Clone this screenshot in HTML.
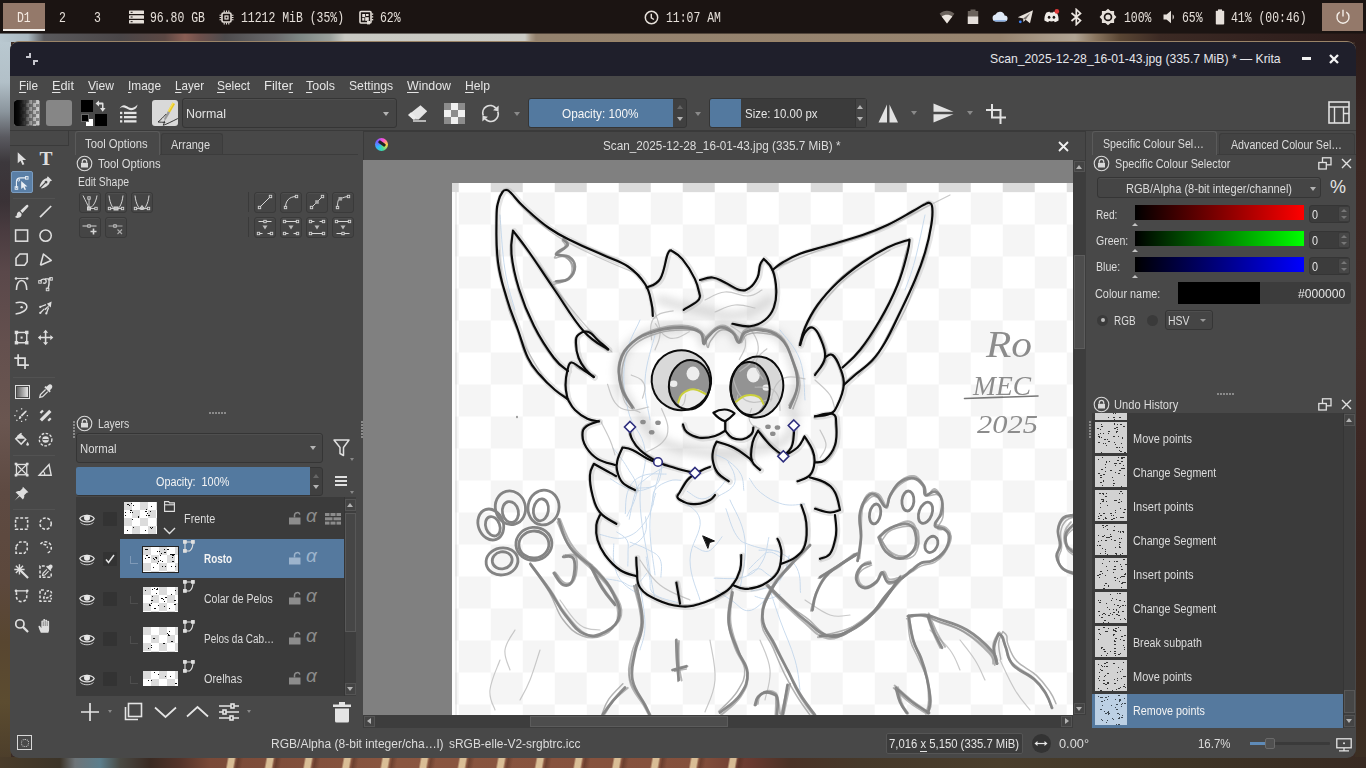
<!DOCTYPE html>
<html lang="en">
<head>
<meta charset="utf-8">
<title>Krita</title>
<style>
*{box-sizing:border-box;margin:0;padding:0}
html,body{width:1366px;height:768px;overflow:hidden}
body{position:relative;background:#3a2a24;font-family:"Liberation Sans",sans-serif;font-size:13px;color:#dedede}
.abs{position:absolute}
#wall{position:absolute;left:0;top:0;width:1366px;height:768px}
/* top bar */
#bar{position:absolute;left:0;top:0;width:1366px;height:33px;background:#1b1412;font-family:"Liberation Mono",monospace;font-size:14.5px;color:#e6e0da}
#bar span{position:absolute;top:9px;line-height:18px;white-space:pre;transform:scaleX(.79);transform-origin:0 50%}
#bar svg{position:absolute}
/* window */
#win{position:absolute;left:10px;top:41px;width:1346px;height:717px;background:#484848;border-radius:9px 9px 9px 9px;overflow:hidden;border-top:1px solid #9a8468}
#title{position:absolute;left:0;top:0;width:1346px;height:34px;background:#1f1f2b}
#title .t{position:absolute;right:74px;top:9px;font-size:13px;color:#e4e4e8;white-space:pre;letter-spacing:-.36px}
#pg{position:absolute;left:-10px;top:-42px;width:1366px;height:768px}
#pg div,#pg svg,#pg span{position:absolute}
.combo{background:#454545;border:1px solid #353535;border-radius:3px;box-shadow:inset 0 1px 0 rgba(255,255,255,.06)}
.tri{width:0;height:0;border-left:3.5px solid transparent;border-right:3.5px solid transparent;border-top:4px solid #b4b4b4}
.triu{width:0;height:0;border-left:3.5px solid transparent;border-right:3.5px solid transparent;border-bottom:4px solid #b4b4b4}
#menu{position:absolute;left:0;top:34px;width:1346px;height:22px;background:#484848}
#menu span{position:absolute;top:3px;font-size:13px;line-height:16px;color:#e2e2e2}
#menu span u{text-decoration:underline;text-underline-offset:2px}
.lbl{position:absolute;white-space:pre;color:#dedede;line-height:16px}
</style>
</head>
<body>
<!-- WALLPAPER -->
<div id="wall">
<div class="abs" style="left:0;top:33px;width:1366px;height:9px;background:linear-gradient(90deg,#b9c8d0 0,#aab8c0 28px,#5a595c 44px,#4a4648 120px,#5c4844 165px,#8a5e54 185px,#6e504c 200px,#4e4c4e 225px,#6a6a6c 275px,#7e8784 300px,#9aa09c 330px,#c9c9c3 345px,#cbcbc5 525px,#a89a88 531px,#94826e 536px,#97846f 1000px,#a59684 1040px,#b0a494 1075px,#8a7660 1095px,#5a4634 1120px,#3c2a24 1160px,#33221f 1260px,#2c1c1a 1366px)"></div>
<div class="abs" style="left:0;top:33px;width:1366px;height:1px;background:rgba(27,20,18,.55)"></div>
<div class="abs" style="left:0;top:42px;width:11px;height:726px;background:linear-gradient(180deg,#b9c8d0 0,#b2c0c8 40px,#8a949c 70px,#5a5a60 95px,#3c383c 120px,#3a3236 160px,#4a3c40 190px,#5a484a 230px,#64504e 300px,#6a5650 380px,#5e4a42 450px,#5c483c 540px,#584630 600px,#5c4c30 660px,#4a3c2a 726px)"></div>
<div class="abs" style="left:1355px;top:42px;width:11px;height:726px;background:linear-gradient(180deg,#2c1c1a 0,#3a2622 120px,#402a26 300px,#382420 500px,#3a2a20 650px,#3c3024 726px)"></div>
<div class="abs" style="left:0;top:757px;width:1366px;height:11px;background:linear-gradient(90deg,#4a3c2a 0,#3c3428 60px,#6e7478 75px,#5c7e8c 100px,#4a4a44 120px,#3a2a22 150px,#54342a 180px,#7a4a38 210px,#8a5640 400px,#84503c 700px,#6a3a30 750px,#4a3226 790px,#46392a 860px,#4a3e2c 1000px,#3e3426 1200px,#382a22 1366px)"></div>
<div class="abs" style="left:205px;top:757px;width:560px;height:11px;background:repeating-linear-gradient(100deg,rgba(230,205,160,.0) 0,rgba(230,205,160,.0) 22px,rgba(232,208,165,.85) 24px,rgba(232,208,165,.85) 29px,rgba(230,205,160,0) 31px,rgba(60,30,20,.35) 33px,rgba(60,30,20,0) 38px)"></div>
</div>

<!-- TOP BAR -->
<div id="bar">
<div class="abs" style="left:3px;top:3px;width:42px;height:28px;background:#94796a;border-bottom:2px solid #f4f0ec"></div>
<span style="left:17px;color:#f6ece4">D1</span>
<span style="left:59px">2</span>
<span style="left:94px">3</span>
<svg style="left:129px;top:10px" width="15" height="14" viewBox="0 0 15 14"><g fill="#e6e0da"><rect x="0" y="0.5" width="15" height="3.6" rx=".6"/><rect x="0" y="5.2" width="15" height="3.6" rx=".6"/><rect x="0" y="9.9" width="15" height="3.6" rx=".6"/></g><g fill="#1b1412"><rect x="1.6" y="1.8" width="2" height="1"/><rect x="1.6" y="6.5" width="2" height="1"/><rect x="1.6" y="11.2" width="2" height="1"/></g></svg>
<span style="left:150px">96.80 GB</span>
<svg style="left:219px;top:10px" width="15" height="15" viewBox="0 0 15 15"><g stroke="#e6e0da" fill="none"><rect x="3" y="3" width="9" height="9" rx="1.2" stroke-width="1.6"/><rect x="6" y="6" width="3" height="3" stroke-width="1.2"/><path d="M5.2 0.5v2M7.5 .5v2M9.8 .5v2M5.2 12.5v2M7.5 12.5v2M9.8 12.5v2M.5 5.2h2M.5 7.5h2M.5 9.8h2M12.5 5.2h2M12.5 7.5h2M12.5 9.8h2" stroke-width="1.1"/></g></svg>
<span style="left:241px">11212 MiB (35%)</span>
<svg style="left:359px;top:10px" width="15" height="15" viewBox="0 0 15 15"><rect x="1" y="1.5" width="11" height="11.5" rx="1" fill="none" stroke="#e6e0da" stroke-width="1.6"/><g fill="#e6e0da"><rect x="3.2" y="4" width="3" height="3.2"/><rect x="7" y="4" width="2.6" height="2"/><rect x="3.2" y="8" width="2.2" height="2.6"/><rect x="6.2" y="7.2" width="3.6" height="3.6"/><rect x="8" y="11" width="3" height="3.4"/><rect x="12.6" y="3.4" width="1.6" height="1.4"/><rect x="12.6" y="6.2" width="1.6" height="1.4"/><rect x="12.6" y="9" width="1.6" height="1.4"/></g></svg>
<span style="left:380px">62%</span>
<svg style="left:644px;top:10px" width="15" height="15" viewBox="0 0 15 15"><circle cx="7.5" cy="7.5" r="6.2" fill="none" stroke="#e6e0da" stroke-width="1.5"/><path d="M7.3 3.8v4l2.6 1.7" fill="none" stroke="#e6e0da" stroke-width="1.4"/></svg>
<span style="left:666px">11:07 AM</span>
<!-- tray -->
<svg style="left:939px;top:10px" width="16" height="14" viewBox="0 0 16 14"><path d="M8 13.5L.6 3.8C4.6-.2 11.4-.2 15.400 3.800Z" fill="#6a625c"/><path d="M8 13.500L2.700 6.600C5.500 4 10.500 4 13.300 6.600Z" fill="#ece6e0"/></svg>
<svg style="left:967px;top:9px" width="12" height="16" viewBox="0 0 12 16"><rect x="3.500" y=".5" width="5" height="2" fill="#6a625c"/><rect x=".8" y="2" width="10.400" height="13" fill="#6a625c"/><rect x=".8" y="7.500" width="10.400" height="7.500" fill="#e4deda"/></svg>
<svg style="left:992px;top:11px" width="16" height="11" viewBox="0 0 16 11"><path d="M4 10.500a3.500 3.500 0 0 1-.5-6.950A4.800 4.800 0 0 1 12.600 4.500 3 3 0 0 1 12.500 10.500Z" fill="#dfe9f6"/><path d="M4 10.500a3.500 3.500 0 0 1-2.800-1.500h13.500a3 3 0 0 1-2.200 1.500Z" fill="#8fb4e6"/></svg>
<svg style="left:1017px;top:9px" width="17" height="16" viewBox="0 0 17 16"><path d="M.8 8.200L16 1.200 13 14.200 8.600 10.800 6.400 13 6.200 9.600Z" fill="#e8e2dc"/><path d="M6.200 9.600L13.500 3.800 8.600 10.800Z" fill="#1b1412" opacity=".55"/><circle cx="3.300" cy="12.800" r="1.400" fill="#3b82f6"/></svg>
<svg style="left:1043px;top:8px" width="17" height="17" viewBox="0 0 17 17"><path d="M3.200 4.800C4.600 4 6 3.700 6.600 3.700l.4.800c1-.1 2-.1 3 0l.4-.8c.6 0 2 .3 3.400 1.100 1.300 2.200 2 4.800 1.800 7.800-1.200.9-2.600 1.500-3.800 1.700l-.8-1.300c-1.600.5-3.400.5-5 0l-.8 1.300C4 14.100 2.600 13.500 1.400 12.600 1.200 9.600 1.900 7 3.200 4.800Z" fill="#f0ece8"/><ellipse cx="6.100" cy="9.300" rx="1.300" ry="1.500" fill="#1b1412"/><ellipse cx="10.900" cy="9.300" rx="1.300" ry="1.500" fill="#1b1412"/><circle cx="13.800" cy="3.400" r="2.300" fill="#e03a3a"/></svg>
<svg style="left:1069px;top:8px" width="15" height="18" viewBox="0 0 15 18"><path d="M2.500 5L11.500 12.600 7.300 16.500V1.500L11.500 5.400 2.500 13" fill="none" stroke="#ece6e0" stroke-width="1.700" stroke-linejoin="miter"/></svg>
<svg style="left:1099px;top:8px" width="18" height="18" viewBox="0 0 18 18"><path d="M9 .8l2.600 2.300h3.500v3.500L17.400 9l-2.300 2.400v3.500h-3.500L9 17.200l-2.600-2.300H2.900v-3.500L.6 9l2.300-2.400V3.100h3.500Z" fill="#e6e0da"/><circle cx="9" cy="9" r="4.300" fill="#1b1412"/><circle cx="9" cy="9" r="2.600" fill="#e6e0da"/></svg>
<span style="left:1124px">100%</span>
<svg style="left:1163px;top:10px" width="13" height="14" viewBox="0 0 13 14"><path d="M.5 4.600h3L8 .8v12.400L3.500 9.400h-3Z" fill="#e6e0da"/><path d="M9.600 4.200a3.600 3.600 0 0 1 0 5.600Z" fill="#e6e0da"/></svg>
<span style="left:1182px">65%</span>
<svg style="left:1215px;top:9px" width="10" height="16" viewBox="0 0 10 16"><rect x="3" y=".4" width="4" height="2" fill="#e6e0da"/><rect x=".8" y="1.800" width="8.400" height="13.700" rx=".8" fill="#e6e0da"/></svg>
<span style="left:1231px">41% (00:46)</span>
<div class="abs" style="left:1322px;top:3px;width:41px;height:28px;background:#94796a"></div>
<svg style="left:1335px;top:9px" width="16" height="16" viewBox="0 0 16 16"><path d="M4.700 3.200a6 6 0 1 0 6.600 0" fill="none" stroke="#f4eee8" stroke-width="1.400"/><path d="M8 .8v6.600" stroke="#f4eee8" stroke-width="1.400"/></svg>
</div>

<!-- KRITA WINDOW -->
<div id="win">
<div id="title"></div>
<div id="menu"></div>
<!--TOOLBAR-->
<div id="pg">
<span class="lbl" style="left:990.0px;top:51.0px;font-size:12.2px;transform:scaleX(1.000);transform-origin:0 50%;color:#e6e6ea;">Scan_2025-12-28_16-01-43.jpg (335.7 MiB) * — Krita</span>
<div style="left:1302px;top:57px;width:9px;height:3px;background:#f2f2f2"></div>
<svg style="left:1328px;top:53px" width="12" height="12" viewBox="0 0 12 12"><path d="M2 2l8 8M10 2l-8 8" stroke="#f4f4f4" stroke-width="2.300"/></svg>
<div style="left:26px;top:56px;width:5px;height:2px;background:#c6c6ce"></div><div style="left:29px;top:53px;width:2px;height:5px;background:#c6c6ce"></div>
<div style="left:33px;top:60px;width:5px;height:2px;background:#c6c6ce"></div><div style="left:33px;top:60px;width:2px;height:5px;background:#c6c6ce"></div>
<div style="left:10px;top:130px;width:1346px;height:1px;background:#3a3a3a"></div>
<!-- gradient -->
<div style="left:14px;top:100px;width:26px;height:26px;border-radius:3px;overflow:hidden;background:#c8c8c8"><div style="left:0;top:0;width:26px;height:26px;background:conic-gradient(#8a8a8a 25%,#d6d6d6 0 50%,#8a8a8a 0 75%,#d6d6d6 0) 1px 0/7px 7px"></div><div style="left:0;top:0;width:26px;height:26px;background:linear-gradient(90deg,#000 0,#0a0a0a 5px,rgba(20,20,20,.85) 10px,rgba(40,40,40,.35) 17px,rgba(60,60,60,0) 26px)"></div></div>
<div style="left:46px;top:100px;width:26px;height:26px;border-radius:3px;background:#868686"></div>
<!-- fg/bg -->
<div style="left:81px;top:100px;width:12px;height:12px;background:#000"></div>
<div style="left:95px;top:114px;width:12px;height:12px;background:#000"></div>
<div style="left:86px;top:119px;width:7px;height:7px;background:#fff"></div>
<div style="left:81px;top:114px;width:8px;height:8px;background:#000;border:1px solid #6a6a6a"></div>
<svg style="left:94px;top:99px" width="14" height="14" viewBox="0 0 14 14"><path d="M1.500 4.500L5 1.500v2h3.500a1 1 0 0 1 1 1V9h2L8.700 12.700 6 9h2V5.500H5v2Z" fill="#e0e0e0"/></svg>
<!-- brush presets -->
<svg style="left:118px;top:102px" width="22" height="22" viewBox="0 0 22 22"><path d="M1.500 6.500C5 1 8 3.500 10.500 5.200 13.500 7 17 5.500 19.500 2.500 19 7.500 14 9.500 10 7.300 7 5.500 4.500 4 1.500 6.500Z" fill="#e4e4e4"/><g fill="#e4e4e4"><rect x="2" y="9.800" width="2.300" height="2.300"/><rect x="6" y="9.800" width="12.500" height="2.300"/><rect x="2" y="14" width="2.300" height="2.300"/><rect x="6" y="14" width="12.500" height="2.300"/><rect x="2" y="18.200" width="2.300" height="2.300"/><rect x="6" y="18.200" width="12.500" height="2.300"/></g></svg>
<!-- brush icon -->
<div style="left:152px;top:100px;width:26px;height:26px;border-radius:3px;background:#d9d9d9"></div>
<svg style="left:152px;top:100px" width="26" height="26" viewBox="0 0 26 26"><path d="M20.500 2.500l2.500 1.500-5 8.500-2.200-1.300Z" fill="#e8c820"/><path d="M20.500 2.500l1.200.7-5 8.600-1-.6Z" fill="#f6e060"/><path d="M15.800 11.200l2.200 1.300-3.800 6.500-1.600 1.800-.3-2.600Z" fill="#9a9a9a"/><path d="M12.600 20.800l-.8 2.200" stroke="#333" stroke-width=".8"/><path d="M14.200 14c-3 3-5.500 6-8.200 8 2.500.3 5 .2 7 .3-1 .8-1.500 2-1.700 3 3-1 8-3.500 14.500-6.800" fill="none" stroke="#222" stroke-width=".9"/></svg>
<!-- blend combo -->
<div class="combo" style="left:182px;top:98px;width:215px;height:30px"></div>
<span class="lbl" style="left:186.0px;top:106.3px;font-size:13px;transform:scaleX(0.955);transform-origin:0 50%;color:#e2e2e2;">Normal</span>
<div class="tri" style="left:383px;top:112px"></div>
<!-- eraser -->
<svg style="left:406px;top:103px" width="23" height="21" viewBox="0 0 23 21"><path d="M14.500 2.200L21.200 8.200 12.700 16.500H7.200L2.200 12Z" fill="#e4e4e4"/><path d="M3.500 11L9.200 16" stroke="#484848" stroke-width="1.400"/><path d="M2.200 12L5 9.300 10.700 14.600 8.700 16.500H7.200Z" fill="#ececec"/><rect x="7" y="17.300" width="13" height="1.400" fill="#e4e4e4"/></svg>
<!-- alpha checker -->
<div style="left:444px;top:103px;width:21px;height:21px;background:conic-gradient(#f0f0f0 25%,#8c8c8c 0 50%,#f0f0f0 0 75%,#8c8c8c 0) 0 0/14px 14px"></div>
<!-- reload -->
<svg style="left:480px;top:103px" width="21" height="21" viewBox="0 0 21 21"><path d="M3.200 12.500A7.400 7.400 0 0 1 15.800 5.200" fill="none" stroke="#dcdcdc" stroke-width="1.800"/><path d="M17.800 8.500A7.400 7.400 0 0 1 5.200 15.800" fill="none" stroke="#dcdcdc" stroke-width="1.800"/><path d="M13 7.200l5.500 1 .2-5.700Z" fill="#dcdcdc"/><path d="M8 13.800l-5.500-1-.2 5.700Z" fill="#dcdcdc"/></svg>
<div class="tri" style="left:514px;top:112px;border-top-color:#8a8a8a"></div>
<!-- opacity slider -->
<div style="left:528px;top:98px;width:159px;height:30px;border:1px solid #353535;border-radius:3px;background:#404040"></div>
<div style="left:529px;top:99px;width:144px;height:28px;background:#53799f;border-radius:2px 0 0 2px"></div>
<span class="lbl" style="left:562.0px;top:106.3px;font-size:13px;transform:scaleX(0.905);transform-origin:0 50%;color:#f6f6f6;">Opacity: 100%</span>
<div class="triu" style="left:676.500px;top:105px;border-bottom-color:#666"></div>
<div class="tri" style="left:676.500px;top:117px"></div>
<div class="tri" style="left:694.500px;top:112px;border-top-color:#8a8a8a"></div>
<!-- size slider -->
<div style="left:709px;top:98px;width:158px;height:30px;border:1px solid #353535;border-radius:3px;background:#3b3b3b"></div>
<div style="left:710px;top:99px;width:31px;height:28px;background:#53799f;border-radius:2px 0 0 2px"></div>
<span class="lbl" style="left:745.0px;top:106.3px;font-size:13px;transform:scaleX(0.880);transform-origin:0 50%;color:#e6e6e6;">Size: 10.00 px</span>
<div style="left:855px;top:99px;width:11px;height:28px;background:#444;border-left:1px solid #353535"></div>
<div class="triu" style="left:857px;top:105px"></div>
<div class="tri" style="left:857px;top:117px"></div>
<!-- mirror h -->
<svg style="left:877px;top:103px" width="23" height="21" viewBox="0 0 23 21"><path d="M10 1.500V19.500H1.500Z" fill="#e2e2e2"/><path d="M12.500 1.500V19.500H21Z" fill="#e2e2e2"/></svg>
<div class="tri" style="left:910.500px;top:111px;border-top-color:#8a8a8a"></div>
<svg style="left:932px;top:102px" width="23" height="22" viewBox="0 0 23 22"><path d="M1.500 1.500L21.500 9.800H1.500Z" fill="#e2e2e2"/><path d="M1.500 12.200H21.500L1.500 20.500Z" fill="#e2e2e2"/></svg>
<div class="tri" style="left:966.500px;top:111px;border-top-color:#8a8a8a"></div>
<!-- wrap/crop -->
<svg style="left:985px;top:103px" width="22" height="22" viewBox="0 0 22 22"><path d="M7 1v13.500h14M1 7h14.500v14" fill="none" stroke="#e2e2e2" stroke-width="2"/></svg>
<!-- workspace chooser -->
<svg style="left:1328px;top:101px" width="22" height="24" viewBox="0 0 22 24"><rect x="1" y="1" width="20" height="21" fill="none" stroke="#e0e0e0" stroke-width="1.600"/><path d="M1 6h20M6.500 6v16M15.500 6v16M15.500 12.500H21" fill="none" stroke="#e0e0e0" stroke-width="1.400"/></svg>
<span class="lbl" style="left:18.5px;top:78.0px;font-size:13px;transform:scaleX(0.907);transform-origin:0 50%;color:#e4e4e4;"><u style="text-underline-offset:2px">F</u>ile</span>
<span class="lbl" style="left:51.5px;top:78.0px;font-size:13px;transform:scaleX(0.982);transform-origin:0 50%;color:#e4e4e4;"><u style="text-underline-offset:2px">E</u>dit</span>
<span class="lbl" style="left:87.5px;top:78.0px;font-size:13px;transform:scaleX(0.930);transform-origin:0 50%;color:#e4e4e4;"><u style="text-underline-offset:2px">V</u>iew</span>
<span class="lbl" style="left:127.5px;top:78.0px;font-size:13px;transform:scaleX(0.913);transform-origin:0 50%;color:#e4e4e4;"><u style="text-underline-offset:2px">I</u>mage</span>
<span class="lbl" style="left:174.5px;top:78.0px;font-size:13px;transform:scaleX(0.892);transform-origin:0 50%;color:#e4e4e4;"><u style="text-underline-offset:2px">L</u>ayer</span>
<span class="lbl" style="left:216.5px;top:78.0px;font-size:13px;transform:scaleX(0.913);transform-origin:0 50%;color:#e4e4e4;"><u style="text-underline-offset:2px">S</u>elect</span>
<span class="lbl" style="left:263.5px;top:78.0px;font-size:13px;transform:scaleX(1.004);transform-origin:0 50%;color:#e4e4e4;">Filte<u style="text-underline-offset:2px">r</u></span>
<span class="lbl" style="left:305.5px;top:78.0px;font-size:13px;transform:scaleX(0.956);transform-origin:0 50%;color:#e4e4e4;"><u style="text-underline-offset:2px">T</u>ools</span>
<span class="lbl" style="left:348.5px;top:78.0px;font-size:13px;transform:scaleX(0.937);transform-origin:0 50%;color:#e4e4e4;">Setti<u style="text-underline-offset:2px">n</u>gs</span>
<span class="lbl" style="left:406.5px;top:78.0px;font-size:13px;transform:scaleX(0.952);transform-origin:0 50%;color:#e4e4e4;"><u style="text-underline-offset:2px">W</u>indow</span>
<span class="lbl" style="left:464.5px;top:78.0px;font-size:13px;transform:scaleX(0.935);transform-origin:0 50%;color:#e4e4e4;"><u style="text-underline-offset:2px">H</u>elp</span>
<!--TOOLBOX-->
<div style="left:10px;top:131px;width:59px;height:15px;border-right:1px solid #3a3a3a;border-bottom:1px solid #3a3a3a"></div>
<div style="left:11px;top:171px;width:22px;height:22px;background:#5a7fa6;border:1px solid #7a9cc0;border-radius:2px"></div>
<div style="left:13px;top:198px;width:42px;height:1px;background:#525252"></div>
<div style="left:13px;top:377px;width:42px;height:1px;background:#525252"></div>
<div style="left:13px;top:455px;width:42px;height:1px;background:#525252"></div>
<div style="left:13px;top:509px;width:42px;height:1px;background:#525252"></div>
<svg style="left:13.4px;top:149.9px" width="17.2" height="17.2" viewBox="0 0 20 20" fill="none" stroke="#dedede" stroke-width="1.7" stroke-linecap="butt"><path d="M5.500 2.500v13l3.300-3 2.200 5 2.200-1-2.200-4.800h4.300Z" fill="#dedede" stroke="none"/></svg>
<span class="lbl" style="left:39.500px;top:147.500px;font-family:'Liberation Serif',serif;font-size:19.500px;line-height:22px;font-weight:bold;color:#dedede">T</span>
<svg style="left:13.4px;top:173.9px" width="17.2" height="17.2" viewBox="0 0 20 20" fill="none" stroke="#dedede" stroke-width="1.7" stroke-linecap="butt"><path d="M4 16.500V9c0-3 2-4.500 5-4.500h6.500" stroke="#e8eef4" stroke-width="1.300"/><rect x="2.500" y="14.800" width="3" height="3" stroke="#e8eef4" stroke-width="1.100"/><rect x="14.500" y="3" width="3" height="3" stroke="#e8eef4" stroke-width="1.100"/><circle cx="6.500" cy="7" r="1.300" stroke="#e8eef4" stroke-width="1"/><path d="M9.500 8v9.500l2.400-2.200 1.700 3.400 1.600-.8-1.700-3.300h3.300Z" fill="#e8eef4" stroke="none"/></svg>
<svg style="left:37.4px;top:173.9px" width="17.2" height="17.2" viewBox="0 0 20 20" fill="none" stroke="#dedede" stroke-width="1.7" stroke-linecap="butt"><path d="M12.500 2.500l5 5-2.500 1.200c-.5 3.500-3.500 6.500-9.500 8.300l-.8-.8 5.300-5.300a1.600 1.600 0 1 0-1-1L3.700 15.200l-.7-.7C4.800 8.500 7.800 5.500 11.300 5Z" fill="#dedede" stroke="none"/></svg>
<svg style="left:13.4px;top:202.9px" width="17.2" height="17.2" viewBox="0 0 20 20" fill="none" stroke="#dedede" stroke-width="1.7" stroke-linecap="butt"><path d="M17.500 2.500c.8.800.5 1.700-.3 2.500L11 11.500 8.500 9 15 2.800c.8-.8 1.700-1.100 2.500-.3Z" fill="#dedede" stroke="none"/><path d="M7.500 10l2.500 2.500c.3 2.500-1 4.300-3.500 4.800-1.700.3-3.300-.2-4.500-1.300 1.800-.2 2.300-1.200 2.500-2.700.2-1.800 1.300-3 3-3.300Z" fill="#dedede" stroke="none"/></svg>
<svg style="left:37.4px;top:202.9px" width="17.2" height="17.2" viewBox="0 0 20 20" fill="none" stroke="#dedede" stroke-width="1.7" stroke-linecap="butt"><path d="M3.500 16.500l13-13" stroke-width="2"/></svg>
<svg style="left:13.4px;top:227.4px" width="17.2" height="17.2" viewBox="0 0 20 20" fill="none" stroke="#dedede" stroke-width="1.7" stroke-linecap="butt"><rect x="3" y="3.500" width="14" height="13" stroke-width="1.800"/></svg>
<svg style="left:37.4px;top:227.4px" width="17.2" height="17.2" viewBox="0 0 20 20" fill="none" stroke="#dedede" stroke-width="1.7" stroke-linecap="butt"><circle cx="10" cy="10" r="6.600" stroke-width="1.800"/></svg>
<svg style="left:13.4px;top:251.4px" width="17.2" height="17.2" viewBox="0 0 20 20" fill="none" stroke="#dedede" stroke-width="1.7" stroke-linecap="butt"><path d="M3.500 8.500L8 3.500h8.500v9l-3 4H3.500Z" stroke-width="1.800"/></svg>
<svg style="left:37.4px;top:251.4px" width="17.2" height="17.2" viewBox="0 0 20 20" fill="none" stroke="#dedede" stroke-width="1.7" stroke-linecap="butt"><path d="M4 16.500l3.500-13 9 7.500-12.500 5.500" stroke-width="1.800" stroke-linejoin="round"/></svg>
<svg style="left:13.4px;top:275.4px" width="17.2" height="17.2" viewBox="0 0 20 20" fill="none" stroke="#dedede" stroke-width="1.7" stroke-linecap="butt"><path d="M4 17.500C4 11 6.500 6.500 10 6.500s6 4.500 6 11" stroke-width="1.800"/><path d="M3.500 4h13" stroke-width="1.200"/><circle cx="3.500" cy="4" r="1.500" fill="#dedede" stroke="none"/><circle cx="16.500" cy="4" r="1.500" fill="#dedede" stroke="none"/></svg>
<svg style="left:37.4px;top:275.4px" width="17.2" height="17.2" viewBox="0 0 20 20" fill="none" stroke="#dedede" stroke-width="1.7" stroke-linecap="butt"><path d="M3.500 7.500C5.500 4 9.500 4 10.500 6.500c1 2.500-1.500 4-3.500 2.500M9 4.500h7.500M13.500 4.500c1.500 4.500.5 8-1 12" stroke-width="1.600"/><rect x="14.800" y="3" width="3" height="3" stroke-width="1.100"/><rect x="10.800" y="15.300" width="3" height="3" stroke-width="1.100"/><rect x="2" y="6.500" width="3" height="3" stroke-width="1.100"/></svg>
<svg style="left:13.4px;top:299.4px" width="17.2" height="17.2" viewBox="0 0 20 20" fill="none" stroke="#dedede" stroke-width="1.7" stroke-linecap="butt"><path d="M3 4.500c5-1.500 12-1 13 3.500 1 5-6 8.500-13 9.500" stroke-width="1.800"/><circle cx="10" cy="9.500" r="1.400" fill="#dedede" stroke="none"/></svg>
<svg style="left:37.4px;top:299.4px" width="17.2" height="17.2" viewBox="0 0 20 20" fill="none" stroke="#dedede" stroke-width="1.7" stroke-linecap="butt"><path d="M17 3l-1 7-2-2-4 5-1.500-1.500 5-4-2-2Z" fill="#dedede" stroke="none"/><path d="M10.500 6.500L4 9M13.500 10L11 16.500M8.500 11.500L4 16" stroke-width="1.500"/><circle cx="3.800" cy="9.200" r="1.300" fill="#dedede" stroke="none"/><circle cx="10.800" cy="16.800" r="1.300" fill="#dedede" stroke="none"/><circle cx="3.800" cy="16.200" r="1.300" fill="#dedede" stroke="none"/></svg>
<svg style="left:13.4px;top:329.4px" width="17.2" height="17.2" viewBox="0 0 20 20" fill="none" stroke="#dedede" stroke-width="1.7" stroke-linecap="butt"><rect x="4" y="4" width="12" height="12" stroke-width="1.700"/><g fill="#dedede" stroke="none"><rect x="2" y="2" width="4" height="4"/><rect x="14" y="2" width="4" height="4"/><rect x="2" y="14" width="4" height="4"/><rect x="14" y="14" width="4" height="4"/><rect x="8.800" y="8.800" width="2.400" height="2.400"/></g></svg>
<svg style="left:37.4px;top:329.4px" width="17.2" height="17.2" viewBox="0 0 20 20" fill="none" stroke="#dedede" stroke-width="1.7" stroke-linecap="butt"><path d="M10 3v14M3 10h14" stroke-width="1.800"/><path d="M10 1l3 3.500H7ZM10 19l3-3.500H7ZM1 10l3.500-3v6ZM19 10l-3.500-3v6Z" fill="#dedede" stroke="none"/></svg>
<svg style="left:13.4px;top:353.4px" width="17.2" height="17.2" viewBox="0 0 20 20" fill="none" stroke="#dedede" stroke-width="1.7" stroke-linecap="butt"><path d="M6 1.500v12.500h12.500M1.500 6h12.500v12.500" stroke-width="2"/></svg>
<div style="left:15px;top:384.500px;width:14.500px;height:14.500px;border:1.500px solid #dedede;background:linear-gradient(90deg,#555 0,#f0f0f0 100%);background-clip:content-box;padding:1px"></div>
<svg style="left:37.4px;top:382.9px" width="17.2" height="17.2" viewBox="0 0 20 20" fill="none" stroke="#dedede" stroke-width="1.7" stroke-linecap="butt"><path d="M13 2.500c1.500-1.500 3.500-1 4.300.2.800 1.200.7 2.800-.5 4l-1.800 1.800 1 1-1.500 1.500-6-6L10 3.500l1 1Z" fill="#dedede" stroke="none"/><path d="M10 7.500l-6 6-.8 3.300 3.300-.8 6-6" stroke-width="1.500"/></svg>
<svg style="left:13.4px;top:407.4px" width="17.2" height="17.2" viewBox="0 0 20 20" fill="none" stroke="#dedede" stroke-width="1.7" stroke-linecap="butt"><path d="M15.500 4c.7.700.4 1.400-.2 2L10.500 11 9 9.500l5-4.800c.6-.6 1-.8 1.500-.7Z" fill="#dedede" stroke="none"/><path d="M8.300 10.200l1.500 1.500c0 1.500-1.200 2.500-3.300 2.400.8-.8.500-1.500.6-2.200.1-.9.600-1.500 1.200-1.700Z" fill="#dedede" stroke="none"/><path d="M10 1.500v2.500M10 16v2.500M1.500 10H4M16 10h2.500M4 4l1.700 1.700M14.300 14.300L16 16M4 16l1.700-1.700" stroke-width="1.500" stroke-dasharray="1.500 1"/></svg>
<svg style="left:37.4px;top:407.4px" width="17.2" height="17.2" viewBox="0 0 20 20" fill="none" stroke="#dedede" stroke-width="1.7" stroke-linecap="butt"><path d="M4.500 15.500l11-11" stroke-width="3.800"/><path d="M4 7l3-3M13 16l3-3" stroke-width="2.600"/></svg>
<svg style="left:13.4px;top:431.4px" width="17.2" height="17.2" viewBox="0 0 20 20" fill="none" stroke="#dedede" stroke-width="1.7" stroke-linecap="butt"><path d="M8.500 2.500L16 10l-6.500 6.500L2 9Z" fill="#dedede" stroke="none"/><path d="M5 6.500l5-4" stroke-width="1.400"/><path d="M17 12.500c1 1.500 1.500 2.500 1.500 3.300a1.500 1.500 0 0 1-3 0c0-.8.500-1.800 1.500-3.300Z" fill="#dedede" stroke="none"/><path d="M4.500 9l5 5 4.500-5Z" fill="#484848" stroke="none"/></svg>
<svg style="left:37.4px;top:431.4px" width="17.2" height="17.2" viewBox="0 0 20 20" fill="none" stroke="#dedede" stroke-width="1.7" stroke-linecap="butt"><circle cx="10" cy="10" r="7.300" stroke-width="1.600" stroke-dasharray="3 1.800"/><circle cx="10" cy="10" r="3.800" fill="#dedede" stroke="none"/><path d="M6.500 10h7" stroke="#484848" stroke-width="1.200"/></svg>
<svg style="left:13.4px;top:461.4px" width="17.2" height="17.2" viewBox="0 0 20 20" fill="none" stroke="#dedede" stroke-width="1.7" stroke-linecap="butt"><rect x="4" y="4" width="12" height="12" stroke-width="1.500"/><path d="M2.500 2.500l15 15M17.500 2.500l-15 15" stroke-width="1.500"/><g fill="#dedede" stroke="none"><rect x="2" y="2" width="3" height="3"/><rect x="15" y="2" width="3" height="3"/><rect x="2" y="15" width="3" height="3"/><rect x="15" y="15" width="3" height="3"/></g></svg>
<svg style="left:37.4px;top:461.4px" width="17.2" height="17.2" viewBox="0 0 20 20" fill="none" stroke="#dedede" stroke-width="1.7" stroke-linecap="butt"><path d="M2.500 16.500h14L14 4Z" stroke-width="1.700" stroke-linejoin="miter"/><path d="M9 16.500a6 6 0 0 0-2-5" stroke-width="1.200"/></svg>
<svg style="left:13.4px;top:485.4px" width="17.2" height="17.2" viewBox="0 0 20 20" fill="none" stroke="#dedede" stroke-width="1.7" stroke-linecap="butt"><path d="M11.500 2l6.500 6.500-2 .5-3 3c.5 2-.2 3.500-1.500 5L7.800 13 2 18l5-5.800L3 8.500c1.500-1.300 3-2 5-1.500l3-3Z" fill="#dedede" stroke="none"/></svg>
<svg style="left:13.4px;top:515.4px" width="17.2" height="17.2" viewBox="0 0 20 20" fill="none" stroke="#dedede" stroke-width="1.7" stroke-linecap="butt"><rect x="3" y="3.500" width="14" height="13" stroke-width="1.800" stroke-dasharray="3.400 2"/></svg>
<svg style="left:37.4px;top:515.4px" width="17.2" height="17.2" viewBox="0 0 20 20" fill="none" stroke="#dedede" stroke-width="1.7" stroke-linecap="butt"><circle cx="10" cy="10" r="6.600" stroke-width="1.800" stroke-dasharray="3.400 2"/></svg>
<svg style="left:13.4px;top:539.4px" width="17.2" height="17.2" viewBox="0 0 20 20" fill="none" stroke="#dedede" stroke-width="1.7" stroke-linecap="butt"><path d="M3.500 8.500L8 3.500h8.500v9l-3 4H3.500Z" stroke-width="1.800" stroke-dasharray="3.400 2"/></svg>
<svg style="left:37.4px;top:539.4px" width="17.2" height="17.2" viewBox="0 0 20 20" fill="none" stroke="#dedede" stroke-width="1.7" stroke-linecap="butt"><path d="M4 6C7 2 14 2.500 16 7c2 4.500-1 9-5 9.500M7.500 6.500c2.500-.5 5 1 4.500 4" stroke-width="1.800" stroke-dasharray="3.400 2"/></svg>
<svg style="left:13.4px;top:563.4px" width="17.2" height="17.2" viewBox="0 0 20 20" fill="none" stroke="#dedede" stroke-width="1.7" stroke-linecap="butt"><path d="M7.500 1.500v12M1.500 7.500h12M3.300 3.300l8.400 8.400M11.700 3.300L3.300 11.700" stroke-width="1.600"/><path d="M9 9l8.500 8.500" stroke-width="2.600"/></svg>
<svg style="left:37.4px;top:563.4px" width="17.2" height="17.2" viewBox="0 0 20 20" fill="none" stroke="#dedede" stroke-width="1.7" stroke-linecap="butt"><path d="M9 3.500H3.500v13h13V11" stroke-width="1.800" stroke-dasharray="3.400 2"/><path d="M14 2.500c1.300-1.300 3-.9 3.700.1.700 1 .6 2.400-.4 3.400l-1.300 1.300.8.800-1.200 1.200-5-5L11.800 3l.8.800Z" fill="#dedede" stroke="none"/><path d="M11.500 7.500l-4.500 4.500-.6 2.600 2.600-.6 4.500-4.500" stroke-width="1.300"/></svg>
<svg style="left:13.4px;top:587.4px" width="17.2" height="17.2" viewBox="0 0 20 20" fill="none" stroke="#dedede" stroke-width="1.7" stroke-linecap="butt"><path d="M4 6v5c0 3.500 2.500 6 6 6s6-2.500 6-6V6" stroke-width="1.800" stroke-dasharray="3.400 2"/><path d="M3 4.500h14" stroke-width="1.300"/><circle cx="3.500" cy="4.500" r="1.600" fill="#dedede" stroke="none"/><circle cx="16.500" cy="4.500" r="1.600" fill="#dedede" stroke="none"/></svg>
<svg style="left:37.4px;top:587.4px" width="17.2" height="17.2" viewBox="0 0 20 20" fill="none" stroke="#dedede" stroke-width="1.7" stroke-linecap="butt"><path d="M8 3.500H3.500v13h13v-4" stroke-width="1.800" stroke-dasharray="3.400 2"/><path d="M7.500 13.500L10 6.500c2-3.500 7-2.500 7 1s-4 5-9.500 6" stroke-width="1.700" stroke-dasharray="3 1.600"/></svg>
<svg style="left:13.4px;top:617.4px" width="17.2" height="17.2" viewBox="0 0 20 20" fill="none" stroke="#dedede" stroke-width="1.7" stroke-linecap="butt"><circle cx="8" cy="8" r="4.800" stroke-width="2"/><path d="M11.500 11.500l6 6" stroke-width="2.600"/></svg>
<svg style="left:37.9px;top:617.4px" width="17.2" height="17.2" viewBox="0 0 20 20" fill="none" stroke="#dedede" stroke-width="1.7" stroke-linecap="butt"><g transform="translate(-2.2 0) scale(1.22 1.05)"><path d="M4.500 17.500c-1-2.500-1.700-4.500-2.200-6.500-.3-1.200 1.200-1.700 1.700-.6L5 12.500V4.800c0-1.300 1.800-1.300 1.800 0V3.300c0-1.300 1.900-1.300 1.900 0v.6c0-1.300 1.900-1.300 1.900 0v1.200c0-1.200 1.800-1.200 1.800 0V13c0 2-.3 3.200-.8 4.500Z" fill="#dedede" stroke="none"/><path d="M6.800 5v5M8.700 4v6M10.600 5v5" stroke="#484848" stroke-width=".6"/></g></svg>
<!--LEFTDOCK-->
<div style="left:75px;top:131px;width:85px;height:24px;border:1px solid #5a5a5a;border-bottom:none;border-radius:3px 3px 0 0;background:#484848"></div>
<div style="left:161px;top:133px;width:62px;height:21px;border:1px solid #3c3c3c;border-bottom:none;border-radius:3px 3px 0 0;background:#434343"></div>
<div style="left:160px;top:154px;width:198px;height:1px;background:#3c3c3c"></div>
<span class="lbl" style="left:85.3px;top:135.5px;font-size:12.5px;transform:scaleX(0.901);transform-origin:0 50%;color:#dcdcdc;">Tool Options</span><span class="lbl" style="left:171.2px;top:136.5px;font-size:12.5px;transform:scaleX(0.879);transform-origin:0 50%;color:#dcdcdc;">Arrange</span><svg style="left:75.8px;top:154.5px" width="17" height="17" viewBox="0 0 17 17"><circle cx="8.500" cy="8.500" r="7.300" fill="none" stroke="#d8d8d8" stroke-width="1.100"/><rect x="5" y="7.800" width="7" height="4.700" fill="#d8d8d8"/><path d="M6.300 7.800V6.600a2.200 2.200 0 0 1 4.400 0V7.800" fill="none" stroke="#d8d8d8" stroke-width="1.200"/></svg>
<span class="lbl" style="left:97.5px;top:155.5px;font-size:12.5px;transform:scaleX(0.900);transform-origin:0 50%;color:#dcdcdc;">Tool Options</span><span class="lbl" style="left:77.8px;top:174.0px;font-size:12.5px;transform:scaleX(0.834);transform-origin:0 50%;color:#dcdcdc;">Edit Shape</span><div style="left:79px;top:192px;width:22px;height:21px;border:1px solid #3a3a3a;border-radius:3px;background:#454545;box-shadow:inset 0 1px 0 rgba(255,255,255,.05)"></div><svg style="left:79px;top:192px" width="22" height="21" viewBox="0 0 22 21" fill="none" stroke="#d6d6d6" stroke-width="1"><path d="M4 3.500C6.500 9 9 13 10 16.500M18 3.500C17 10 14 15 10 16.500"/><path d="M10 5.500v11h7" stroke-width=".9"/><rect x="8.8" y="4.8" width="2.400" height="2.400" fill="#484848" stroke-width=".9"/><rect x="15.8" y="15.3" width="2.400" height="2.400" fill="#484848" stroke-width=".9"/><rect x="8.500" y="15" width="3" height="3" fill="#bbb"/></svg>
<div style="left:105px;top:192px;width:22px;height:21px;border:1px solid #3a3a3a;border-radius:3px;background:#454545;box-shadow:inset 0 1px 0 rgba(255,255,255,.05)"></div><svg style="left:105px;top:192px" width="22" height="21" viewBox="0 0 22 21" fill="none" stroke="#d6d6d6" stroke-width="1"><path d="M4 3.500C5 13 8.500 17.500 11 17.500S17 13 18 3.500"/><path d="M4.500 16.500h13" stroke-width=".9"/><rect x="3.3" y="15.3" width="2.400" height="2.400" fill="#484848" stroke-width=".9"/><rect x="16.3" y="15.3" width="2.400" height="2.400" fill="#484848" stroke-width=".9"/><rect x="9" y="15" width="4" height="3" fill="#bbb"/></svg>
<div style="left:131px;top:192px;width:22px;height:21px;border:1px solid #3a3a3a;border-radius:3px;background:#454545;box-shadow:inset 0 1px 0 rgba(255,255,255,.05)"></div><svg style="left:131px;top:192px" width="22" height="21" viewBox="0 0 22 21" fill="none" stroke="#d6d6d6" stroke-width="1"><path d="M4 3.500C5 13 8.500 17.500 11 17.500S17 13 18 3.500"/><path d="M4.500 16.500h13" stroke-width=".9"/><rect x="3.3" y="15.3" width="2.400" height="2.400" fill="#484848" stroke-width=".9"/><rect x="16.3" y="15.3" width="2.400" height="2.400" fill="#484848" stroke-width=".9"/><path d="M11 13.500l2.500 3.500h-5Z" fill="#bbb"/></svg>
<div style="left:79px;top:217px;width:22px;height:21px;border:1px solid #3a3a3a;border-radius:3px;background:#454545;box-shadow:inset 0 1px 0 rgba(255,255,255,.05)"></div><svg style="left:79px;top:217px" width="22" height="21" viewBox="0 0 22 21" fill="none" stroke="#d6d6d6" stroke-width="1"><path d="M3.500 9h14" stroke-width="1.100"/><rect x="8.8" y="7.8" width="2.400" height="2.400" fill="#484848" stroke-width=".9"/><path d="M14.500 11.500v6M11.500 14.500h6" stroke-width="1.600"/></svg>
<div style="left:105px;top:217px;width:22px;height:21px;border:1px solid #3a3a3a;border-radius:3px;background:#454545;box-shadow:inset 0 1px 0 rgba(255,255,255,.05)"></div><svg style="left:105px;top:217px" width="22" height="21" viewBox="0 0 22 21" fill="none" stroke="#d6d6d6" stroke-width="1"><path d="M3.500 9h14" stroke-width="1.100" stroke="#aaa"/><rect x="8.8" y="7.8" width="2.400" height="2.400" fill="#484848" stroke-width=".9"/><path d="M12.500 12.500l4.500 4.500M17 12.500l-4.500 4.500" stroke-width="1.100" stroke="#aaa"/></svg>
<div style="left:248px;top:192px;width:1px;height:20px;background:#3a3a3a"></div><div style="left:248px;top:217px;width:1px;height:20px;background:#3a3a3a"></div>
<div style="left:254px;top:192px;width:22px;height:21px;border:1px solid #3a3a3a;border-radius:3px;background:#454545;box-shadow:inset 0 1px 0 rgba(255,255,255,.05)"></div><svg style="left:254px;top:192px" width="22" height="21" viewBox="0 0 22 21" fill="none" stroke="#d6d6d6" stroke-width="1"><path d="M5.500 15.500l11-11"/><rect x="4.3" y="14.3" width="2.400" height="2.400" fill="#484848" stroke-width=".9"/><rect x="15.3" y="3.3" width="2.400" height="2.400" fill="#484848" stroke-width=".9"/></svg>
<div style="left:280px;top:192px;width:22px;height:21px;border:1px solid #3a3a3a;border-radius:3px;background:#454545;box-shadow:inset 0 1px 0 rgba(255,255,255,.05)"></div><svg style="left:280px;top:192px" width="22" height="21" viewBox="0 0 22 21" fill="none" stroke="#d6d6d6" stroke-width="1"><path d="M5.500 15.500C5.500 9 9 4.500 16.500 4.500"/><rect x="4.3" y="14.3" width="2.400" height="2.400" fill="#484848" stroke-width=".9"/><rect x="15.3" y="3.3" width="2.400" height="2.400" fill="#484848" stroke-width=".9"/></svg>
<div style="left:306px;top:192px;width:22px;height:21px;border:1px solid #3a3a3a;border-radius:3px;background:#454545;box-shadow:inset 0 1px 0 rgba(255,255,255,.05)"></div><svg style="left:306px;top:192px" width="22" height="21" viewBox="0 0 22 21" fill="none" stroke="#d6d6d6" stroke-width="1"><path d="M5.500 15.500l11-11"/><rect x="4.3" y="14.3" width="2.400" height="2.400" fill="#484848" stroke-width=".9"/><rect x="15.3" y="3.3" width="2.400" height="2.400" fill="#484848" stroke-width=".9"/><rect x="9.200" y="8.200" width="3.600" height="3.600" fill="#aaa" stroke="none"/></svg>
<div style="left:332px;top:192px;width:22px;height:21px;border:1px solid #3a3a3a;border-radius:3px;background:#454545;box-shadow:inset 0 1px 0 rgba(255,255,255,.05)"></div><svg style="left:332px;top:192px" width="22" height="21" viewBox="0 0 22 21" fill="none" stroke="#d6d6d6" stroke-width="1"><path d="M5.500 15.500C5.500 10 6 7 8.500 6.500 11 6 13 4.500 16.500 4.500"/><rect x="4.3" y="14.3" width="2.400" height="2.400" fill="#484848" stroke-width=".9"/><rect x="15.3" y="3.3" width="2.400" height="2.400" fill="#484848" stroke-width=".9"/><rect x="6.500" y="5" width="3.600" height="3.600" fill="#aaa" stroke="none"/></svg>
<div style="left:254px;top:217px;width:22px;height:21px;border:1px solid #3a3a3a;border-radius:3px;background:#454545;box-shadow:inset 0 1px 0 rgba(255,255,255,.05)"></div><svg style="left:254px;top:217px" width="22" height="21" viewBox="0 0 22 21" fill="none" stroke="#d6d6d6" stroke-width="1"><path d="M4.500 4.500h13M4.500 16.500h4M13.500 16.500h4"/><rect x="3.3" y="15.3" width="2.400" height="2.400" fill="#484848" stroke-width=".9"/><rect x="16.3" y="15.3" width="2.400" height="2.400" fill="#484848" stroke-width=".9"/><rect x="9.8" y="3.3" width="2.400" height="2.400" fill="#484848" stroke-width=".9"/><path d="M8.500 8.500h5l-2.500 4Z" fill="#bbb" stroke="none"/></svg>
<div style="left:280px;top:217px;width:22px;height:21px;border:1px solid #3a3a3a;border-radius:3px;background:#454545;box-shadow:inset 0 1px 0 rgba(255,255,255,.05)"></div><svg style="left:280px;top:217px" width="22" height="21" viewBox="0 0 22 21" fill="none" stroke="#d6d6d6" stroke-width="1"><path d="M4.500 4.500h13M4.500 16.500h4M13.500 16.500h4"/><rect x="3.3" y="3.3" width="2.400" height="2.400" fill="#484848" stroke-width=".9"/><rect x="16.3" y="3.3" width="2.400" height="2.400" fill="#484848" stroke-width=".9"/><rect x="3.3" y="15.3" width="2.400" height="2.400" fill="#484848" stroke-width=".9"/><rect x="16.3" y="15.3" width="2.400" height="2.400" fill="#484848" stroke-width=".9"/><path d="M8.500 8.500h5l-2.500 4Z" fill="#bbb" stroke="none"/></svg>
<div style="left:306px;top:217px;width:22px;height:21px;border:1px solid #3a3a3a;border-radius:3px;background:#454545;box-shadow:inset 0 1px 0 rgba(255,255,255,.05)"></div><svg style="left:306px;top:217px" width="22" height="21" viewBox="0 0 22 21" fill="none" stroke="#d6d6d6" stroke-width="1"><path d="M4.500 4.500h4M13.500 4.500h4M4.500 16.500h13"/><rect x="3.3" y="3.3" width="2.400" height="2.400" fill="#484848" stroke-width=".9"/><rect x="16.3" y="3.3" width="2.400" height="2.400" fill="#484848" stroke-width=".9"/><rect x="3.3" y="15.3" width="2.400" height="2.400" fill="#484848" stroke-width=".9"/><rect x="16.3" y="15.3" width="2.400" height="2.400" fill="#484848" stroke-width=".9"/><path d="M8.500 8.500h5l-2.500 4Z" fill="#bbb" stroke="none"/></svg>
<div style="left:332px;top:217px;width:22px;height:21px;border:1px solid #3a3a3a;border-radius:3px;background:#454545;box-shadow:inset 0 1px 0 rgba(255,255,255,.05)"></div><svg style="left:332px;top:217px" width="22" height="21" viewBox="0 0 22 21" fill="none" stroke="#d6d6d6" stroke-width="1"><path d="M4.500 4.500h13M4.500 16.500h13"/><rect x="3.3" y="3.3" width="2.400" height="2.400" fill="#484848" stroke-width=".9"/><rect x="16.3" y="3.3" width="2.400" height="2.400" fill="#484848" stroke-width=".9"/><rect x="9.8" y="15.3" width="2.400" height="2.400" fill="#484848" stroke-width=".9"/><path d="M8.500 8.500h5l-2.500 4Z" fill="#bbb" stroke="none"/></svg>
<div style="left:209px;top:412px;width:17px;height:2px;background:repeating-linear-gradient(90deg,#8a8a8a 0,#8a8a8a 2px,transparent 2px,transparent 3px)"></div>
<div style="left:72.500px;top:421px;width:2px;height:17px;background:repeating-linear-gradient(180deg,#8a8a8a 0,#8a8a8a 2px,transparent 2px,transparent 3px)"></div>
<div style="left:360.500px;top:421px;width:2px;height:17px;background:repeating-linear-gradient(180deg,#8a8a8a 0,#8a8a8a 2px,transparent 2px,transparent 3px)"></div>
<svg style="left:75.8px;top:414.5px" width="17" height="17" viewBox="0 0 17 17"><circle cx="8.500" cy="8.500" r="7.300" fill="none" stroke="#d8d8d8" stroke-width="1.100"/><rect x="5" y="7.800" width="7" height="4.700" fill="#d8d8d8"/><path d="M6.300 7.800V6.600a2.200 2.200 0 0 1 4.400 0V7.800" fill="none" stroke="#d8d8d8" stroke-width="1.200"/></svg>
<span class="lbl" style="left:97.5px;top:415.5px;font-size:12.5px;transform:scaleX(0.834);transform-origin:0 50%;color:#dcdcdc;">Layers</span><div class="combo" style="left:76px;top:433px;width:247px;height:30px"></div>
<span class="lbl" style="left:79.8px;top:440.5px;font-size:12.5px;transform:scaleX(0.906);transform-origin:0 50%;color:#dcdcdc;">Normal</span><div class="tri" style="left:309.500px;top:446px"></div>
<svg style="left:332px;top:438px" width="20" height="20" viewBox="0 0 20 20"><path d="M2 2h15l-5.500 7.500V17.500l-3.500-2V9.500Z" fill="none" stroke="#e0e0e0" stroke-width="1.500" stroke-linejoin="round"/></svg>
<div class="tri" style="left:349.500px;top:458px;border-left-width:2.500px;border-right-width:2.500px;border-top-width:3px;border-top-color:#8a8a8a"></div>
<div style="left:76px;top:467px;width:247px;height:29px;border:1px solid #353535;border-radius:3px;background:#404040"></div>
<div style="left:76px;top:467px;width:234px;height:28px;background:#53799f;border-radius:2px 0 0 2px"></div>
<span class="lbl" style="left:155.5px;top:473.5px;font-size:12.5px;transform:scaleX(0.864);transform-origin:0 50%;color:#f4f4f4;">Opacity:  100%</span><div class="triu" style="left:313px;top:474px;border-bottom-color:#666"></div><div class="tri" style="left:313px;top:485px"></div>
<div style="left:334.500px;top:476px;width:12.500px;height:2px;background:#e0e0e0"></div><div style="left:334.500px;top:480px;width:12.500px;height:2px;background:#e0e0e0"></div><div style="left:334.500px;top:484px;width:12.500px;height:2px;background:#e0e0e0"></div>
<div class="tri" style="left:349.500px;top:491px;border-left-width:2.500px;border-right-width:2.500px;border-top-width:3px;border-top-color:#8a8a8a"></div>
<div style="left:76px;top:497px;width:280px;height:199px;background:#3b3b3b"></div>
<div style="left:120px;top:539px;width:223.500px;height:39px;background:#55799e"></div>
<svg style="left:79px;top:511.5px" width="16" height="14" viewBox="0 0 16 14"><path d="M.8 6.500C3 2.200 13 2.200 15.200 6.500 13 11 3 11 .8 6.500Z" fill="#3b3b3b" stroke="#e0e0e0" stroke-width="1.300"/><circle cx="8" cy="5.800" r="3" fill="#e6e6e6"/><path d="M1.500 10.500c3 3 10 3 13 0" fill="none" stroke="#c8c8c8" stroke-width="1"/></svg>
<div style="left:102.500px;top:511.500px;width:14px;height:14px;background:#333;border-radius:1px"></div>
<div style="left:124px;top:502px;width:33px;height:32px;background:conic-gradient(#fff 25%,#dcdcdc 0 50%,#fff 0 75%,#dcdcdc 0) 0 0/16px 16px"></div>
<svg style="left:124px;top:502px" width="33" height="32" fill="#111"><rect x="8" y="10" width="1" height="1"/><rect x="24" y="13" width="2" height="1"/><rect x="5" y="3" width="1" height="1"/><rect x="1" y="13" width="1" height="1"/><rect x="26" y="25" width="1" height="1"/><rect x="8" y="17" width="1" height="1"/><rect x="9" y="25" width="1" height="1"/><rect x="27" y="4" width="1" height="1"/><rect x="7" y="1" width="1" height="1"/><rect x="26" y="9" width="1" height="1"/><rect x="6" y="10" width="1" height="1"/><rect x="21" y="28" width="1" height="1"/><rect x="3" y="28" width="1" height="1"/><rect x="22" y="13" width="1" height="1"/><rect x="6" y="8" width="2" height="1"/><rect x="9" y="3" width="1" height="1"/><rect x="1" y="10" width="1" height="1"/><rect x="28" y="25" width="1" height="1"/><rect x="14" y="14" width="1" height="1"/><rect x="14" y="15" width="1" height="1"/><rect x="8" y="10" width="1" height="1"/><rect x="27" y="26" width="1" height="1"/><rect x="3" y="2" width="2" height="1"/><rect x="21" y="9" width="2" height="1"/><rect x="23" y="11" width="1" height="1"/><rect x="22" y="7" width="1" height="1"/></svg>
<svg style="left:163.500px;top:500.500px" width="11" height="11" viewBox="0 0 11 11" fill="none" stroke="#e0e0e0" stroke-width="1.100"><path d="M.6 10.400V.6h4l1 1.300h4.800v8.500Z"/><path d="M.6 3.800h9.800"/></svg>
<svg style="left:163px;top:527px" width="13" height="8" viewBox="0 0 13 8"><path d="M1 1l5.500 5.500L12 1" fill="none" stroke="#e0e0e0" stroke-width="1.400"/></svg>
<span class="lbl" style="left:183.7px;top:511.0px;font-size:12.5px;transform:scaleX(0.869);transform-origin:0 50%;color:#dcdcdc;">Frente</span><svg style="left:288px;top:510.5px" width="14" height="14" viewBox="0 0 14 14"><rect x="1" y="6.500" width="11.500" height="7" fill="#8c8c8c"/><path d="M6.500 6.500V4.200a2.800 2.800 0 0 1 5.400-.8" fill="none" stroke="#8c8c8c" stroke-width="1.500"/></svg><span class="lbl" style="left:306px;top:506px;font-size:19px;line-height:20px;font-style:italic;color:#8c8c8c">α</span>
<svg style="left:324.500px;top:512.500px" width="16" height="12" viewBox="0 0 16 12" fill="#8c8c8c"><rect x="0" y="0" width="4.500" height="3"/><rect x="5.500" y="0" width="5" height="3"/><rect x="11.500" y="0" width="4.500" height="3"/><rect x="0" y="4.300" width="7.500" height="3"/><rect x="8.500" y="4.300" width="7.500" height="3"/><rect x="0" y="8.600" width="4.500" height="3"/><rect x="5.500" y="8.600" width="5" height="3"/><rect x="11.500" y="8.600" width="4.500" height="3"/></svg>
<svg style="left:79px;top:551.5px" width="16" height="14" viewBox="0 0 16 14"><path d="M.8 6.500C3 2.200 13 2.200 15.200 6.500 13 11 3 11 .8 6.500Z" fill="#3b3b3b" stroke="#e0e0e0" stroke-width="1.300"/><circle cx="8" cy="5.800" r="3" fill="#e6e6e6"/><path d="M1.500 10.500c3 3 10 3 13 0" fill="none" stroke="#c8c8c8" stroke-width="1"/></svg>
<div style="left:102.500px;top:551.5px;width:14px;height:14px;background:#333;border-radius:1px"></div>
<svg style="left:104.500px;top:553.5px" width="10" height="10" viewBox="0 0 10 10"><path d="M1 5.500l2.500 3L9 1" fill="none" stroke="#e6e6e6" stroke-width="1.500"/></svg>
<div style="left:129.500px;top:555.5px;width:8px;height:8px;border-left:1px solid #7f9ab8;border-bottom:1px solid #7f9ab8"></div>
<div style="left:143px;top:546.5px;width:35px;height:25px;background:conic-gradient(#fff 25%,#dcdcdc 0 50%,#fff 0 75%,#dcdcdc 0) 0 0/16px 16px;outline:1px solid #222;"></div>
<svg style="left:143px;top:546.5px" width="35" height="25" fill="#111"><rect x="27" y="7" width="2" height="1"/><rect x="18" y="6" width="1" height="1"/><rect x="28" y="19" width="1" height="1"/><rect x="13" y="11" width="1" height="1"/><rect x="4" y="8" width="1" height="1"/><rect x="16" y="4" width="1" height="1"/><rect x="12" y="10" width="2" height="1"/><rect x="2" y="2" width="1" height="1"/><rect x="6" y="10" width="1" height="1"/><rect x="2" y="11" width="1" height="1"/><rect x="21" y="5" width="2" height="1"/><rect x="5" y="10" width="1" height="1"/><rect x="29" y="10" width="1" height="1"/><rect x="17" y="13" width="1" height="1"/><rect x="22" y="19" width="1" height="1"/><rect x="24" y="2" width="2" height="1"/><rect x="11" y="12" width="1" height="1"/><rect x="19" y="19" width="1" height="1"/><rect x="29" y="7" width="2" height="1"/><rect x="14" y="4" width="1" height="1"/><rect x="4" y="2" width="1" height="1"/><rect x="10" y="20" width="1" height="1"/><rect x="32" y="19" width="1" height="1"/><rect x="21" y="2" width="1" height="1"/><rect x="19" y="14" width="1" height="1"/><rect x="31" y="7" width="1" height="1"/><rect x="29" y="14" width="2" height="1"/><rect x="3" y="8" width="2" height="1"/><rect x="29" y="8" width="2" height="1"/><rect x="14" y="16" width="1" height="1"/><rect x="3" y="2" width="1" height="1"/><rect x="17" y="8" width="1" height="1"/><rect x="15" y="14" width="1" height="1"/><rect x="10" y="11" width="1" height="1"/></svg>
<svg style="left:183px;top:539.5px" width="12" height="13" viewBox="0 0 12 13" fill="none" stroke="#e0e0e0" stroke-width="1.100"><path d="M2 2v9h4.500C9 9.500 10 6 10 2Z"/><rect x=".6" y=".6" width="2.600" height="2.600" fill="#e0e0e0"/><rect x="8.600" y=".6" width="2.600" height="2.600" fill="#e0e0e0"/><rect x=".6" y="9.600" width="2.600" height="2.600" fill="#e0e0e0"/></svg>
<span class="lbl" style="left:203.9px;top:551.0px;font-size:12.5px;transform:scaleX(0.794);transform-origin:0 50%;color:#f4f4f4;font-weight:bold;">Rosto</span><svg style="left:288px;top:550.5px" width="14" height="14" viewBox="0 0 14 14"><rect x="1" y="6.500" width="11.500" height="7" fill="#9db4cc"/><path d="M6.500 6.500V4.200a2.800 2.800 0 0 1 5.400-.8" fill="none" stroke="#9db4cc" stroke-width="1.500"/></svg><span class="lbl" style="left:306px;top:546px;font-size:19px;line-height:20px;font-style:italic;color:#9db4cc">α</span>
<svg style="left:79px;top:591.5px" width="16" height="14" viewBox="0 0 16 14"><path d="M.8 6.500C3 2.200 13 2.200 15.200 6.500 13 11 3 11 .8 6.500Z" fill="#3b3b3b" stroke="#e0e0e0" stroke-width="1.300"/><circle cx="8" cy="5.800" r="3" fill="#e6e6e6"/><path d="M1.500 10.500c3 3 10 3 13 0" fill="none" stroke="#c8c8c8" stroke-width="1"/></svg>
<div style="left:102.500px;top:591.5px;width:14px;height:14px;background:#333;border-radius:1px"></div>
<div style="left:129.500px;top:595.5px;width:8px;height:8px;border-left:1px solid #4e4e4e;border-bottom:1px solid #4e4e4e"></div>
<div style="left:143px;top:586.5px;width:35px;height:25px;background:conic-gradient(#fff 25%,#dcdcdc 0 50%,#fff 0 75%,#dcdcdc 0) 0 0/16px 16px;"></div>
<svg style="left:143px;top:586.5px" width="35" height="25" fill="#111"><rect x="21" y="19" width="1" height="1"/><rect x="26" y="21" width="1" height="1"/><rect x="32" y="13" width="1" height="1"/><rect x="28" y="7" width="1" height="1"/><rect x="22" y="10" width="2" height="1"/><rect x="21" y="14" width="1" height="1"/><rect x="18" y="11" width="2" height="1"/><rect x="32" y="3" width="1" height="1"/><rect x="13" y="2" width="2" height="1"/><rect x="9" y="9" width="1" height="1"/><rect x="11" y="21" width="2" height="1"/><rect x="31" y="13" width="2" height="1"/><rect x="14" y="1" width="1" height="1"/><rect x="11" y="1" width="1" height="1"/><rect x="8" y="13" width="2" height="1"/><rect x="15" y="18" width="1" height="1"/><rect x="13" y="6" width="1" height="1"/><rect x="31" y="17" width="2" height="1"/><rect x="2" y="3" width="1" height="1"/><rect x="8" y="16" width="1" height="1"/><rect x="9" y="2" width="1" height="1"/><rect x="6" y="17" width="1" height="1"/><rect x="20" y="12" width="1" height="1"/><rect x="6" y="18" width="2" height="1"/></svg>
<svg style="left:183px;top:579.5px" width="12" height="13" viewBox="0 0 12 13" fill="none" stroke="#e0e0e0" stroke-width="1.100"><path d="M2 2v9h4.500C9 9.500 10 6 10 2Z"/><rect x=".6" y=".6" width="2.600" height="2.600" fill="#e0e0e0"/><rect x="8.600" y=".6" width="2.600" height="2.600" fill="#e0e0e0"/><rect x=".6" y="9.600" width="2.600" height="2.600" fill="#e0e0e0"/></svg>
<span class="lbl" style="left:203.9px;top:591.0px;font-size:12.5px;transform:scaleX(0.839);transform-origin:0 50%;color:#dcdcdc;">Colar de Pelos</span><svg style="left:288px;top:590.5px" width="14" height="14" viewBox="0 0 14 14"><rect x="1" y="6.500" width="11.500" height="7" fill="#8c8c8c"/><path d="M6.500 6.500V4.200a2.800 2.800 0 0 1 5.400-.8" fill="none" stroke="#8c8c8c" stroke-width="1.500"/></svg><span class="lbl" style="left:306px;top:586px;font-size:19px;line-height:20px;font-style:italic;color:#8c8c8c">α</span>
<svg style="left:79px;top:631.5px" width="16" height="14" viewBox="0 0 16 14"><path d="M.8 6.500C3 2.200 13 2.200 15.200 6.500 13 11 3 11 .8 6.500Z" fill="#3b3b3b" stroke="#e0e0e0" stroke-width="1.300"/><circle cx="8" cy="5.800" r="3" fill="#e6e6e6"/><path d="M1.500 10.500c3 3 10 3 13 0" fill="none" stroke="#c8c8c8" stroke-width="1"/></svg>
<div style="left:102.500px;top:631.5px;width:14px;height:14px;background:#333;border-radius:1px"></div>
<div style="left:129.500px;top:635.5px;width:8px;height:8px;border-left:1px solid #4e4e4e;border-bottom:1px solid #4e4e4e"></div>
<div style="left:143px;top:626.5px;width:35px;height:25px;background:conic-gradient(#fff 25%,#dcdcdc 0 50%,#fff 0 75%,#dcdcdc 0) 0 0/16px 16px;"></div>
<svg style="left:143px;top:626.5px" width="35" height="25" fill="#111"><rect x="25" y="7" width="1" height="1"/><rect x="25" y="8" width="2" height="1"/><rect x="26" y="4" width="1" height="1"/><rect x="8" y="20" width="1" height="1"/><rect x="28" y="14" width="2" height="1"/><rect x="5" y="21" width="1" height="1"/><rect x="20" y="16" width="2" height="1"/><rect x="8" y="18" width="1" height="1"/><rect x="24" y="6" width="1" height="1"/><rect x="10" y="11" width="2" height="1"/></svg>
<svg style="left:183px;top:619.5px" width="12" height="13" viewBox="0 0 12 13" fill="none" stroke="#e0e0e0" stroke-width="1.100"><path d="M2 2v9h4.500C9 9.500 10 6 10 2Z"/><rect x=".6" y=".6" width="2.600" height="2.600" fill="#e0e0e0"/><rect x="8.600" y=".6" width="2.600" height="2.600" fill="#e0e0e0"/><rect x=".6" y="9.600" width="2.600" height="2.600" fill="#e0e0e0"/></svg>
<span class="lbl" style="left:203.9px;top:631.0px;font-size:12.5px;transform:scaleX(0.801);transform-origin:0 50%;color:#dcdcdc;">Pelos da Cab…</span><svg style="left:288px;top:630.5px" width="14" height="14" viewBox="0 0 14 14"><rect x="1" y="6.500" width="11.500" height="7" fill="#8c8c8c"/><path d="M6.500 6.500V4.200a2.800 2.800 0 0 1 5.400-.8" fill="none" stroke="#8c8c8c" stroke-width="1.500"/></svg><span class="lbl" style="left:306px;top:626px;font-size:19px;line-height:20px;font-style:italic;color:#8c8c8c">α</span>
<svg style="left:79px;top:671.5px" width="16" height="14" viewBox="0 0 16 14"><path d="M.8 6.500C3 2.200 13 2.200 15.200 6.500 13 11 3 11 .8 6.500Z" fill="#3b3b3b" stroke="#e0e0e0" stroke-width="1.300"/><circle cx="8" cy="5.800" r="3" fill="#e6e6e6"/><path d="M1.500 10.500c3 3 10 3 13 0" fill="none" stroke="#c8c8c8" stroke-width="1"/></svg>
<div style="left:102.500px;top:671.5px;width:14px;height:14px;background:#333;border-radius:1px"></div>
<div style="left:129.500px;top:675.5px;width:8px;height:8px;border-left:1px solid #4e4e4e;border-bottom:1px solid #4e4e4e"></div>
<div style="left:143px;top:671px;width:35px;height:15px;background:conic-gradient(#fff 25%,#dcdcdc 0 50%,#fff 0 75%,#dcdcdc 0) 0 0/16px 16px;"></div>
<svg style="left:143px;top:671px" width="35" height="15" fill="#111"><rect x="22" y="5" width="1" height="1"/><rect x="11" y="1" width="1" height="1"/><rect x="8" y="9" width="1" height="1"/><rect x="32" y="12" width="2" height="1"/><rect x="5" y="9" width="1" height="1"/><rect x="27" y="5" width="1" height="1"/><rect x="15" y="3" width="1" height="1"/></svg>
<svg style="left:183px;top:659.5px" width="12" height="13" viewBox="0 0 12 13" fill="none" stroke="#e0e0e0" stroke-width="1.100"><path d="M2 2v9h4.500C9 9.500 10 6 10 2Z"/><rect x=".6" y=".6" width="2.600" height="2.600" fill="#e0e0e0"/><rect x="8.600" y=".6" width="2.600" height="2.600" fill="#e0e0e0"/><rect x=".6" y="9.600" width="2.600" height="2.600" fill="#e0e0e0"/></svg>
<span class="lbl" style="left:203.9px;top:671.0px;font-size:12.5px;transform:scaleX(0.871);transform-origin:0 50%;color:#dcdcdc;">Orelhas</span><svg style="left:288px;top:670.5px" width="14" height="14" viewBox="0 0 14 14"><rect x="1" y="6.500" width="11.500" height="7" fill="#8c8c8c"/><path d="M6.500 6.500V4.200a2.800 2.800 0 0 1 5.400-.8" fill="none" stroke="#8c8c8c" stroke-width="1.500"/></svg><span class="lbl" style="left:306px;top:666px;font-size:19px;line-height:20px;font-style:italic;color:#8c8c8c">α</span>
<div style="left:344px;top:497px;width:12px;height:199px;background:#3e3e3e;border-left:1px solid #353535"></div>
<div style="left:345px;top:499px;width:11px;height:12px;border:1px solid #545454;background:#444"></div><div class="triu" style="left:347px;top:503px;border-left-width:3.500px;border-right-width:3.500px"></div>
<div style="left:345px;top:683px;width:11px;height:12px;border:1px solid #545454;background:#444"></div><div class="tri" style="left:347px;top:687px"></div>
<div style="left:345px;top:513px;width:11px;height:119px;background:#464646;border:1px solid #585858"></div>
<svg style="left:80px;top:702px" width="20" height="20" viewBox="0 0 20 20"><path d="M10 1v18M1 10h18" stroke="#e4e4e4" stroke-width="1.700"/></svg><div class="tri" style="left:107.500px;top:710px;border-left-width:2.500px;border-right-width:2.500px;border-top-width:3px;border-top-color:#8a8a8a"></div>
<svg style="left:122px;top:702px" width="21" height="21" viewBox="0 0 21 21" fill="none" stroke="#e4e4e4" stroke-width="1.600"><rect x="6.500" y="1.500" width="13" height="13"/><path d="M3.500 5v12.500H16"/></svg>
<svg style="left:154px;top:706px" width="23" height="13" viewBox="0 0 23 13"><path d="M1 1.500l10.500 9.500L22 1.500" fill="none" stroke="#e4e4e4" stroke-width="1.700"/></svg>
<svg style="left:185.500px;top:705px" width="23" height="13" viewBox="0 0 23 13"><path d="M1 11.500L11.500 2 22 11.500" fill="none" stroke="#e4e4e4" stroke-width="1.700"/></svg>
<svg style="left:218px;top:702px" width="22" height="20" viewBox="0 0 22 20" stroke="#e4e4e4" stroke-width="1.600" fill="#484848"><path d="M1 4h20M1 10h20M1 16h20"/><rect x="13" y="2" width="3" height="4"/><rect x="5" y="8" width="3" height="4"/><rect x="12" y="14" width="3" height="4"/></svg><div class="tri" style="left:246.500px;top:710px;border-left-width:2.500px;border-right-width:2.500px;border-top-width:3px;border-top-color:#8a8a8a"></div>
<svg style="left:332px;top:701px" width="20" height="22" viewBox="0 0 20 22" fill="#e4e4e4"><rect x="1" y="3.500" width="18" height="2.500"/><rect x="7" y="1" width="6" height="3"/><path d="M3 7.500h14V20a1.500 1.500 0 0 1-1.500 1.500h-11A1.500 1.500 0 0 1 3 20Z"/></svg>
<!--CANVAS-->
<div style="left:363px;top:131px;width:723px;height:29px;background:#464646;border:1px solid #3a3a3a;border-bottom:none"></div>
<div style="left:375px;top:138px;width:13px;height:13px;border-radius:50%;background:conic-gradient(from 20deg,#ff4fd8,#ffd23f,#3fe0a0,#30b8ff,#7a5cff,#ff4fd8)"></div><div style="left:378px;top:141.500px;width:8px;height:3px;background:#222;transform:rotate(35deg);border-radius:1px"></div>
<span class="lbl" style="left:603.0px;top:137.5px;font-size:12.5px;transform:scaleX(0.939);transform-origin:0 50%;color:#dcdcdc;">Scan_2025-12-28_16-01-43.jpg (335.7 MiB) *</span><svg style="left:1058px;top:141px" width="11" height="11" viewBox="0 0 11 11"><path d="M1 1l9 9M10 1l-9 9" stroke="#f0f0f0" stroke-width="1.800"/></svg>
<div style="left:363px;top:160px;width:710px;height:555px;background:#808080"></div>
<div style="left:452px;top:183px;width:621px;height:532px;background:conic-gradient(#fff 25%,#dbdbdb 0 50%,#fff 0 75%,#dbdbdb 0) 6.750px -54.500px/64px 64px"></div>
<div style="left:455px;top:192px;width:618px;height:523px;background:rgba(255,255,255,.72)"></div>
<div style="left:452px;top:192px;width:3px;height:523px;background:#fdfdfd"></div><div style="left:455px;top:192px;width:2px;height:523px;background:rgba(200,200,200,.35)"></div>
<svg style="left:452px;top:183px" width="621" height="532" viewBox="452 183 621 532" fill="none" stroke-linecap="round" stroke-linejoin="round">
<defs><filter id="bl" x="-20%" y="-20%" width="140%" height="140%"><feGaussianBlur stdDeviation="2.2"/></filter><filter id="bl2" x="-20%" y="-20%" width="140%" height="140%"><feGaussianBlur stdDeviation="4"/></filter></defs>
<g fill="#cdcdcd" stroke="none" opacity=".75"><ellipse cx="681.4" cy="380.2" rx="29" ry="29.5"/><ellipse cx="757" cy="387" rx="25.5" ry="30"/></g>
<g fill="#939393" stroke="none"><ellipse cx="689.5" cy="384.8" rx="20.5" ry="24.8"/><ellipse cx="750" cy="388.5" rx="19.6" ry="26.5"/></g>
<g fill="#ededed" stroke="none"><ellipse cx="693" cy="373.6" rx="6.5" ry="7"/><ellipse cx="753.3" cy="375" rx="6.5" ry="7.5"/><ellipse cx="673.6" cy="383.8" rx="3.8" ry="3.2"/><ellipse cx="766.5" cy="387.6" rx="4" ry="3.2"/></g>
<path d="M678.300 402.500C680 394 686 389.500 693 389.200S704 391 705.600 394.500C705 402 697 409.500 687 409.500 682 409 679 406 678.300 402.500Z" fill="#ececec" stroke="none"/><path d="M736 401.700C739 397 744 395 751 395.300S762 399 763.400 404C761 410 756 415 749.400 415 742 414 737 408 736 401.700Z" fill="#e6e6e6" stroke="none"/>
<g filter="url(#bl2)" stroke="#9a9a9a" stroke-width="9" opacity=".33" fill="none"><path d="M632.5 407.5C630.2 403.4 623.9 396.8 621.3 387.5C618.7 378.2 617.7 371.8 620.0 362.5C622.3 353.2 625.3 348.9 632.5 342.5C639.7 336.1 644.7 334.4 655.0 331.3C665.3 328.2 673.2 327.3 682.5 327.5C691.8 327.7 695.6 329.1 700.0 332.5C704.4 335.9 702.2 342.8 703.8 343.8C705.3 344.8 704.2 340.9 707.5 337.5C710.8 334.1 714.8 328.5 720.0 327.5C725.2 326.5 728.6 329.4 732.5 332.5C736.4 335.6 736.2 342.5 738.8 342.5C741.4 342.5 740.6 335.1 745.0 332.5C749.4 329.9 752.8 329.0 760.0 330.0C767.2 331.0 773.3 331.3 780.0 337.5C786.7 343.7 788.9 350.2 792.5 360.0C796.1 369.8 798.0 375.2 797.5 385.0C797.0 394.8 791.5 402.9 790.0 407.5"/><path d="M640.0 415.0C644.1 420.2 647.6 432.4 660.0 440.0C672.4 447.6 682.4 449.5 700.0 452.0C717.6 454.5 727.4 454.5 745.0 452.0C762.6 449.5 774.7 447.6 785.0 440.0C795.3 432.4 792.9 420.2 795.0 415.0"/><path d="M660.0 300.0C668.3 302.1 683.5 306.9 700.0 310.0C716.5 313.1 725.5 317.1 740.0 315.0C754.5 312.9 763.8 303.1 770.0 300.0"/></g>
<g stroke="#bdd3ea" stroke-width="1" opacity=".8"><path d="M640.0 320.0C636.9 328.3 627.5 341.4 625.0 360.0C622.5 378.6 623.9 391.4 628.0 410.0C632.1 428.6 642.5 431.4 645.0 450.0C647.5 468.6 639.4 477.3 640.0 500.0C640.6 522.7 644.9 539.3 648.0 560.0C651.1 580.7 653.6 591.7 655.0 600.0"/><path d="M655.0 335.0C652.9 344.3 646.0 362.4 645.0 380.0C644.0 397.6 649.0 411.7 650.0 420.0"/><path d="M660.0 470.0C657.9 480.3 651.0 498.3 650.0 520.0C649.0 541.7 654.0 563.6 655.0 575.0"/><path d="M640.0 585.0C641.0 593.3 645.0 611.6 645.0 625.0C645.0 638.4 641.0 644.8 640.0 650.0"/><path d="M680.0 500.0C684.1 504.1 697.9 507.6 700.0 520.0C702.1 532.4 690.0 543.5 690.0 560.0C690.0 576.5 697.9 591.7 700.0 600.0"/><path d="M730.0 500.0C733.1 508.3 742.9 521.4 745.0 540.0C747.1 558.6 741.0 579.7 740.0 590.0"/><path d="M770.0 590.0C772.1 596.2 774.8 605.5 780.0 620.0C785.2 634.5 790.9 645.5 795.0 660.0C799.1 674.5 799.0 683.8 800.0 690.0"/><path d="M780.0 330.0C784.1 336.2 794.8 345.5 800.0 360.0C805.2 374.5 804.0 391.7 805.0 400.0"/><path d="M500.0 215.0C501.0 226.4 501.9 250.4 505.0 270.0C508.1 289.6 512.9 301.7 515.0 310.0"/><path d="M925.0 215.0C922.9 224.3 919.1 244.5 915.0 260.0C910.9 275.5 907.1 283.8 905.0 290.0"/><path d="M660.9 577.1C660.8 573.4 662.8 564.9 660.0 559.2C657.3 553.4 653.7 552.9 647.5 549.4C641.3 545.9 633.7 543.7 630.1 542.2"/><path d="M718.5 496.1C721.4 494.2 729.0 491.4 732.3 487.1C735.6 482.9 735.5 480.7 734.6 475.5C733.7 470.3 729.4 464.7 728.1 461.9"/><path d="M687.2 491.3C690.3 492.9 696.0 498.8 701.9 498.9C707.9 498.9 710.9 495.6 716.1 491.4C721.2 487.3 724.6 481.4 726.9 478.8"/><path d="M637.8 488.1C641.1 487.7 649.1 488.5 653.7 486.1C658.4 483.7 658.8 481.6 660.4 476.5C661.9 471.4 661.2 464.6 661.4 461.5"/><path d="M629.8 547.0C632.0 545.5 637.2 543.3 640.5 539.7C643.9 536.1 645.0 534.4 646.1 529.7C647.1 525.0 645.6 519.5 645.5 516.8"/><path d="M627.0 516.2C629.0 510.8 636.8 500.0 636.9 489.9C636.9 479.8 632.2 476.2 627.3 467.6C622.4 458.9 615.9 452.0 612.9 448.0"/><path d="M667.7 464.9C663.2 467.7 652.7 473.2 646.1 478.6C639.6 483.9 639.6 482.3 636.1 490.8C632.6 499.2 630.6 513.4 629.2 519.3"/><path d="M714.1 578.2C720.4 577.9 734.7 580.1 744.6 576.8C754.5 573.4 757.2 570.1 762.1 562.0C767.1 553.9 767.4 542.6 768.8 537.5"/><path d="M749.3 478.2C751.7 481.2 753.9 487.3 760.7 492.6C767.6 498.0 773.4 501.7 782.5 504.1C791.6 506.4 800.2 504.0 804.8 504.0"/><path d="M600.0 534.5C605.1 535.2 615.2 540.4 624.7 537.6C634.1 534.9 639.3 530.3 645.7 521.1C652.1 512.0 653.6 499.1 655.7 493.4"/><path d="M751.0 591.1C755.7 589.9 766.8 589.1 773.6 585.4C780.4 581.7 780.6 579.5 783.9 573.3C787.1 567.2 788.1 559.3 789.2 555.7"/><path d="M716.2 590.2C719.4 592.3 724.8 596.1 731.6 600.4C738.3 604.6 741.5 611.3 748.9 610.7C756.3 610.2 763.5 600.5 767.4 597.8"/><path d="M610.3 478.6C613.0 480.2 617.6 483.9 623.4 486.4C629.3 488.9 632.0 490.8 638.5 490.7C644.9 490.6 651.4 486.8 654.8 485.8"/><path d="M666.2 474.1C661.3 474.4 650.5 472.5 642.7 475.7C634.9 478.9 632.1 481.8 628.5 489.6C624.9 497.5 625.9 508.7 625.3 513.7"/><path d="M613.8 543.9C613.9 547.9 612.5 555.6 614.2 563.5C615.9 571.3 616.7 575.5 622.0 581.9C627.3 588.4 636.0 592.1 639.7 594.7"/><path d="M694.1 546.2C696.6 547.3 701.7 551.4 705.8 551.5C710.0 551.6 710.9 549.7 714.2 546.7C717.6 543.6 720.4 538.7 722.0 536.7"/><path d="M606.5 578.9C609.5 579.4 615.0 579.9 620.7 581.4C626.5 582.8 628.8 587.6 634.2 585.9C639.6 584.1 644.4 575.6 647.1 572.9"/><path d="M743.8 490.3C743.2 487.0 744.0 480.5 741.0 474.5C737.9 468.6 734.2 465.5 729.0 461.5C723.9 457.4 718.8 456.2 716.1 454.9"/><path d="M783.3 559.2C780.5 557.7 774.6 552.1 769.7 552.1C764.7 552.0 763.6 555.4 759.4 558.9C755.1 562.4 751.2 566.9 749.1 569.0"/><path d="M800.5 592.4C799.7 587.5 801.4 576.7 797.0 568.3C792.6 560.0 786.9 555.9 779.0 552.2C771.2 548.4 763.2 550.6 759.0 550.2"/><path d="M755.0 596.2C756.8 596.7 760.2 598.4 763.7 598.7C767.3 599.1 768.8 598.7 772.2 597.8C775.6 596.9 778.5 595.1 780.2 594.4"/><path d="M725.9 508.7C728.1 514.2 731.3 527.8 736.4 535.3C741.6 542.8 742.1 541.8 750.8 545.2C759.6 548.5 773.0 550.2 778.8 551.5"/><path d="M646.2 557.0C646.9 561.4 648.2 570.3 649.7 577.9C651.3 585.4 647.9 588.6 653.7 593.7C659.5 598.9 672.9 600.9 677.9 602.7"/><path d="M680.8 480.3C678.4 480.4 674.4 479.0 669.1 481.0C663.7 483.0 658.3 485.0 654.9 489.9C651.6 494.9 653.4 501.9 653.0 505.0"/><path d="M627.8 566.1C627.8 563.3 628.2 558.3 628.0 552.9C627.8 547.6 629.3 544.5 627.0 540.2C624.6 535.8 618.9 533.7 616.7 532.0"/><path d="M774.8 579.4C773.2 578.3 770.4 576.1 767.0 573.9C763.6 571.7 762.2 568.6 758.3 568.7C754.4 568.8 750.2 573.2 748.1 574.4"/></g>
<g stroke="#bcbcbc" stroke-width="1.2" opacity=".8"><path d="M499.0 250.0C500.4 260.3 501.2 281.4 506.0 300.0C510.8 318.6 513.9 323.5 522.0 340.0C530.1 356.5 540.2 371.7 545.0 380.0"/><path d="M515.0 235.0C521.2 243.3 530.5 256.4 545.0 275.0C559.5 293.6 571.2 309.1 585.0 325.0C598.8 340.9 606.4 346.4 612.0 352.0"/><path d="M530.0 215.0C536.2 219.8 545.5 229.1 560.0 238.0C574.5 246.9 583.5 250.4 600.0 258.0C616.5 265.6 631.7 271.5 640.0 275.0"/><path d="M775.0 268.0C784.3 264.3 798.3 257.9 820.0 250.0C841.7 242.1 857.3 239.3 880.0 230.0C902.7 220.7 915.5 212.2 930.0 205.0C944.5 197.8 945.9 197.1 950.0 195.0"/><path d="M925.0 255.0C920.9 266.4 914.3 290.4 905.0 310.0C895.7 329.6 889.7 336.4 880.0 350.0C870.3 363.6 862.5 370.6 858.0 376.0"/><path d="M825.0 300.0C830.2 294.8 836.6 285.3 850.0 275.0C863.4 264.7 881.7 255.2 890.0 250.0"/><path d="M620.0 375.0C621.0 380.7 620.9 394.8 625.0 402.5C629.1 410.2 636.9 410.4 640.0 412.5"/><path d="M650.0 300.0C652.1 306.2 659.0 319.7 660.0 330.0C661.0 340.3 656.0 345.9 655.0 350.0"/><path d="M705.0 300.0C709.1 298.3 716.1 292.8 725.0 292.0C733.9 291.2 740.4 296.4 748.0 296.0C755.6 295.6 759.1 291.2 762.0 290.0"/><path d="M715.0 312.0C719.1 310.6 726.7 305.8 735.0 305.0C743.3 304.2 750.9 307.4 755.0 308.0"/><path d="M600.0 420.0C602.1 424.1 606.9 432.8 610.0 440.0C613.1 447.2 614.0 451.9 615.0 455.0"/><path d="M815.0 380.0C818.1 383.1 825.9 388.8 830.0 395.0C834.1 401.2 834.0 406.9 835.0 410.0"/><path d="M820.0 430.0C821.2 433.1 826.0 439.2 826.0 445.0C826.0 450.8 821.2 455.3 820.0 458.0"/><path d="M640.0 560.0C644.1 565.2 649.7 576.7 660.0 585.0C670.3 593.3 683.8 596.9 690.0 600.0"/><path d="M560.0 600.0C564.1 605.2 571.7 618.8 580.0 625.0C588.3 631.2 595.9 629.0 600.0 630.0"/><path d="M515.0 630.0C512.9 634.1 506.0 641.7 505.0 650.0C504.0 658.3 509.0 665.9 510.0 670.0"/><path d="M540.0 650.0C537.9 656.2 534.1 669.7 530.0 680.0C525.9 690.3 522.1 695.9 520.0 700.0"/><path d="M500.0 660.0C497.9 666.2 491.0 679.7 490.0 690.0C489.0 700.3 494.0 705.9 495.0 710.0"/><path d="M805.0 600.0C810.2 603.1 820.7 611.9 830.0 615.0C839.3 618.1 845.9 615.0 850.0 615.0"/><path d="M930.0 630.0C934.1 634.1 943.8 641.7 950.0 650.0C956.2 658.3 957.9 665.9 960.0 670.0"/><path d="M1000.0 660.0C1003.1 666.2 1008.8 679.7 1015.0 690.0C1021.2 700.3 1026.9 705.9 1030.0 710.0"/><path d="M960.0 640.0C963.1 644.1 969.8 651.7 975.0 660.0C980.2 668.3 982.9 675.9 985.0 680.0"/><path d="M710.0 640.0C711.0 648.3 716.0 665.1 715.0 680.0C714.0 694.9 707.1 705.4 705.0 712.0"/><path d="M760.0 640.0C762.1 646.2 769.0 657.6 770.0 670.0C771.0 682.4 766.0 693.8 765.0 700.0"/><path d="M607.5 384.3C609.1 388.1 610.8 397.4 615.2 402.8C619.6 408.2 622.0 409.6 628.9 410.4C635.8 411.3 644.6 407.7 648.6 407.0"/><path d="M751.6 408.6C751.0 410.5 748.9 414.3 749.0 417.5C749.0 420.8 749.5 421.9 751.7 424.3C754.0 426.6 758.2 427.9 759.8 428.8"/><path d="M780.1 410.5C779.7 407.5 780.2 400.7 778.0 396.1C775.9 391.5 774.5 390.2 769.7 388.3C765.0 386.5 758.2 387.4 755.2 387.2"/><path d="M766.9 348.8C765.0 350.6 759.7 353.9 757.5 357.9C755.4 361.9 755.1 363.6 756.3 368.0C757.5 372.4 761.7 376.8 763.1 379.1"/><path d="M668.6 408.6C670.6 408.6 675.0 409.4 678.1 408.4C681.2 407.4 682.2 406.6 683.8 403.7C685.3 400.8 685.3 396.4 685.7 394.5"/><path d="M642.5 398.1C643.0 395.9 645.2 391.2 644.9 387.4C644.6 383.6 643.9 382.2 641.1 379.7C638.3 377.1 633.2 376.0 631.2 375.0"/><path d="M655.3 323.6C657.2 326.0 660.2 332.4 664.4 335.3C668.7 338.3 670.6 338.8 675.7 338.0C680.8 337.3 686.4 333.0 689.2 331.7"/><path d="M737.8 395.2C737.6 397.3 736.2 401.7 736.9 405.0C737.5 408.4 738.3 409.5 741.1 411.5C743.9 413.5 748.5 414.0 750.4 414.6"/><path d="M805.0 378.9C801.4 378.6 793.6 376.0 787.7 377.2C781.7 378.4 779.8 379.7 776.3 384.6C772.8 389.6 772.0 397.7 770.8 401.1"/><path d="M732.6 377.6C734.2 381.2 735.9 390.1 740.1 395.2C744.4 400.3 746.7 401.5 753.3 402.3C759.9 403.0 768.2 399.5 772.1 398.8"/><path d="M673.2 310.8C670.1 311.6 662.9 311.9 658.3 314.7C653.7 317.5 652.5 319.2 651.1 324.3C649.7 329.5 651.5 336.5 651.6 339.7"/><path d="M739.3 359.5C740.6 356.7 744.7 351.0 745.4 345.9C746.0 340.8 745.5 338.8 742.5 334.7C739.4 330.5 733.0 327.6 730.5 325.8"/><path d="M645.2 452.8C648.7 450.6 657.7 447.6 662.4 442.4C667.1 437.2 668.1 434.6 667.9 427.6C667.7 420.6 662.8 412.4 661.5 408.5"/><path d="M739.9 371.4C743.0 368.7 751.3 364.1 754.9 358.1C758.6 352.2 759.1 349.5 757.6 342.7C756.2 335.8 749.9 328.7 747.9 325.1"/></g>
<g stroke="#9a9a9a" stroke-width="1.500" opacity=".75"><path d="M634.4 408.3C632.2 404.3 625.9 398.1 623.5 388.8C621.2 379.5 620.9 372.6 623.2 363.4C625.5 354.3 627.3 350.7 634.6 344.5C641.9 338.2 648.5 335.9 658.7 333.0C668.9 330.0 674.8 330.0 683.9 330.1C693.0 330.1 697.8 329.7 702.6 333.3C707.5 336.8 705.8 345.7 707.5 347.2C709.2 348.7 707.9 344.2 710.8 340.6C713.7 337.0 716.3 331.2 721.5 330.0C726.8 328.8 732.1 332.2 736.1 334.8C740.1 337.4 738.7 342.8 740.9 342.7C743.1 342.7 742.3 336.5 747.0 334.6C751.7 332.6 756.4 332.1 763.7 333.3C771.0 334.6 775.9 334.4 782.1 340.5C788.4 346.5 790.2 353.6 793.8 362.7C797.5 371.9 800.1 375.4 799.9 384.9C799.7 394.4 794.4 403.9 793.0 408.8"/><path d="M562.3 240.6C562.9 242.1 566.8 244.1 565.1 247.5C563.5 251.0 554.6 255.5 554.5 257.5C554.5 259.5 560.9 254.9 564.9 257.2C568.9 259.5 573.3 263.9 573.8 268.5C574.3 273.1 571.4 276.0 567.3 279.3C563.2 282.6 556.6 283.4 553.8 284.4"/><path d="M591.3 566.4C594.4 571.6 600.5 583.3 606.1 591.7C611.7 600.1 616.0 604.0 618.5 607.2"/><path d="M634.2 585.7C635.6 593.0 641.8 607.1 641.3 621.2C640.7 635.3 633.9 642.0 631.6 654.0C629.2 666.0 627.2 668.7 630.0 679.3C632.8 689.9 641.1 697.8 645.1 705.2C649.2 712.6 648.6 713.1 649.5 715.2"/><path d="M622.9 683.7C620.0 686.9 613.0 692.9 608.8 699.1C604.5 705.3 603.6 710.6 602.3 713.5"/><path d="M678.1 643.1C678.3 647.3 678.7 655.2 678.7 663.1C678.6 671.0 678.0 677.6 677.9 681.4"/><path d="M674.3 671.2C676.8 670.7 683.9 669.4 686.4 668.9"/><path d="M731.9 588.7C731.1 595.1 727.2 607.6 727.8 619.8C728.4 632.0 731.3 637.4 734.8 647.8C738.3 658.2 744.2 661.0 744.7 670.0C745.2 679.0 742.7 682.7 737.3 691.3C731.9 699.9 722.5 707.3 718.6 711.4"/><path d="M806.9 548.7C802.7 552.7 793.9 559.6 786.8 568.0C779.7 576.5 777.8 578.6 772.5 589.4C767.3 600.2 761.2 608.2 761.3 620.3C761.4 632.4 768.3 636.8 773.1 647.9C777.9 659.1 779.7 664.2 784.6 674.1C789.5 684.1 791.2 687.1 796.8 696.0C802.3 704.9 808.5 712.8 811.5 717.1"/><path d="M766.0 585.5C769.7 589.0 775.7 595.6 784.0 602.2C792.3 608.8 796.7 610.7 806.2 617.7C815.7 624.6 820.3 634.1 830.0 635.9C839.7 637.7 842.7 632.8 853.1 626.3C863.6 619.7 870.7 614.5 880.5 604.0C890.3 593.5 896.4 581.4 900.6 575.5"/><path d="M855.7 553.5C852.4 556.2 845.7 562.1 839.6 566.7C833.4 571.3 830.8 570.4 826.0 575.8C821.2 581.2 819.4 585.6 816.5 592.9C813.6 600.2 813.0 607.4 812.1 611.2"/><path d="M756.2 705.3C756.5 703.7 756.2 700.2 757.7 697.7C759.2 695.1 760.2 693.4 763.6 692.9C767.0 692.5 771.6 694.0 774.2 695.4C776.7 696.8 775.5 695.3 775.7 699.7C776.0 704.0 775.3 713.0 775.2 716.5"/><path d="M787.9 684.7C786.4 691.1 782.1 709.2 780.6 715.6"/><path d="M907.7 618.2C908.3 622.8 908.2 632.0 910.3 640.2C912.5 648.5 914.9 650.4 918.2 658.2C921.5 666.0 924.2 669.2 926.3 677.9C928.4 686.5 928.7 692.7 928.6 700.2C928.5 707.6 926.3 711.1 925.7 713.9"/><path d="M906.6 618.7C909.7 618.0 915.4 615.0 921.7 615.4C927.9 615.9 928.3 617.4 937.0 620.9C945.7 624.3 953.1 625.3 963.8 632.0C974.5 638.7 982.8 646.7 988.9 653.3C995.0 659.9 992.2 661.7 993.1 663.9"/><path d="M1000.8 659.2C1000.4 655.9 998.3 648.9 998.7 643.1C999.1 637.4 1002.0 633.9 1002.8 631.5M1002.8 631.5C1003.6 632.4 1005.6 633.0 1006.7 635.7C1007.7 638.3 1006.0 639.0 1008.0 644.3C1010.1 649.5 1010.9 654.7 1016.7 661.1C1022.6 667.5 1029.5 669.0 1036.4 675.4C1043.4 681.8 1046.2 686.4 1050.3 692.2C1054.3 698.1 1054.9 701.4 1056.0 703.8"/><path d="M926.8 615.5C928.0 619.0 930.0 625.7 932.8 632.4C935.6 639.2 938.7 644.8 940.2 648.1"/><path d="M897.8 689.2C898.5 692.4 899.1 699.7 901.1 704.7C903.1 709.7 906.2 711.7 907.5 713.6"/><path d="M893.4 687.9C896.8 691.1 903.0 697.7 909.9 703.0C916.9 708.4 923.4 711.6 926.9 713.9"/><path d="M871.6 565.1C869.6 566.1 864.8 567.2 861.8 570.3C858.7 573.4 856.1 576.3 856.7 580.2C857.3 584.0 860.6 588.2 864.8 588.8C868.9 589.3 873.3 586.0 876.8 582.9C880.3 579.8 879.4 573.5 881.8 573.7C884.2 573.9 884.7 582.7 888.5 584.0C892.2 585.3 895.0 582.3 899.8 579.9C904.5 577.4 907.0 575.1 911.5 572.2C916.0 569.3 916.7 567.9 921.5 565.9C926.3 563.8 930.1 564.8 934.7 562.3C939.4 559.9 940.6 558.9 944.0 554.0C947.4 549.2 950.6 543.8 951.1 538.8C951.5 533.9 948.8 532.4 946.0 530.3C943.2 528.2 938.2 531.3 937.5 528.6C936.9 526.0 941.9 522.9 942.9 517.4C943.8 511.8 943.3 506.6 942.1 501.9C940.8 497.2 940.1 495.9 936.9 494.6C933.6 493.3 928.7 497.5 926.2 495.7C923.7 494.0 927.0 489.8 924.8 486.2C922.6 482.6 920.7 478.8 915.7 478.3C910.7 477.9 906.0 480.2 900.7 484.1C895.4 487.9 892.9 492.0 890.1 497.0C887.2 502.0 889.1 508.0 886.8 508.3C884.5 508.5 882.5 500.4 878.9 498.3C875.3 496.3 873.5 494.9 869.4 498.4C865.4 501.9 861.1 506.7 859.3 515.3C857.5 523.9 861.1 530.5 860.7 540.0C860.4 549.5 858.4 556.9 857.8 561.3"/><path d="M882.2 540.0C884.2 537.9 885.6 532.4 892.0 529.7C898.4 527.0 907.6 525.4 913.2 527.0C918.7 528.6 918.6 531.8 919.0 537.4C919.3 543.1 918.6 549.9 914.9 554.4C911.1 558.8 906.0 559.4 900.9 559.0C895.7 558.6 894.2 556.8 889.9 552.4C885.6 548.0 882.2 540.9 880.1 537.9"/><path d="M818.3 578.3C821.9 576.2 827.8 572.6 835.6 567.8C843.5 563.0 852.2 557.7 856.5 555.1"/><path d="M821.2 635.3C826.2 634.2 835.0 633.7 845.2 629.8C855.4 626.0 861.1 624.2 870.4 616.5C879.6 608.9 883.0 601.0 890.0 592.7C897.0 584.5 901.3 580.0 904.3 576.6"/><path d="M1077.1 516.4C1074.8 517.2 1069.4 517.5 1066.1 520.6C1062.7 523.7 1061.7 525.9 1060.8 531.5C1059.9 537.1 1062.0 542.1 1061.6 547.7C1061.2 553.3 1058.4 554.2 1058.7 558.7C1059.0 563.2 1059.3 565.9 1063.0 569.4C1066.7 572.9 1073.7 574.3 1076.5 575.6"/><path d="M1073.2 529.0C1071.8 530.6 1067.6 532.6 1066.3 536.8C1065.0 541.0 1065.5 545.4 1066.9 549.1C1068.3 552.8 1071.8 553.7 1073.1 554.9"/><path d="M530.7 565.5C534.6 571.1 542.9 581.6 549.6 592.8C556.2 604.0 556.2 610.8 563.1 619.8C569.9 628.7 574.1 632.9 582.6 636.0C591.2 639.2 597.2 638.4 604.3 634.9C611.5 631.3 615.5 627.1 617.3 618.8C619.0 610.5 617.1 604.0 612.8 594.8C608.5 585.5 605.0 583.4 596.3 574.0C587.5 564.5 578.7 559.8 570.6 549.0C562.5 538.2 560.0 527.4 557.2 521.8"/><path d="M563.7 555.3C565.8 555.8 571.3 553.7 573.7 558.1C576.0 562.5 576.7 571.5 575.0 576.6C573.3 581.8 569.4 583.8 565.4 583.0C561.5 582.2 557.8 575.0 555.9 572.9"/></g>
<g stroke="#909090" stroke-width="2" opacity=".65"><path d="M631.2 405.5C629.2 401.4 624.0 394.6 621.6 385.5C619.1 376.5 617.1 370.6 619.3 361.7C621.5 352.7 624.9 348.9 632.2 342.3C639.5 335.7 644.2 333.3 654.5 329.8C664.9 326.3 672.9 325.2 682.4 325.4C691.9 325.7 696.3 327.2 700.6 330.9C704.9 334.5 701.9 341.8 703.1 343.0C704.2 344.1 702.6 340.2 706.2 336.6C709.8 333.0 714.9 326.9 720.5 325.8C726.1 324.7 729.4 328.1 733.2 331.3C737.1 334.4 736.8 341.2 739.1 341.1C741.4 341.0 740.4 333.3 744.3 330.6C748.3 327.9 750.7 326.7 758.3 327.9C765.8 329.1 773.9 329.7 780.9 336.3C787.8 342.8 788.6 349.7 792.0 359.7C795.4 369.8 797.9 375.5 797.4 384.9C796.8 394.4 790.9 401.2 789.2 405.4"/><path d="M562.8 239.6C563.6 240.8 568.1 242.1 566.5 245.1C565.0 248.1 555.6 251.8 555.5 254.1C555.4 256.4 562.6 253.6 566.0 256.4C569.5 259.1 571.7 262.9 572.2 267.4C572.6 272.0 572.0 275.3 568.3 278.3C564.6 281.3 557.2 281.1 554.2 281.9"/><path d="M591.6 564.8C593.8 569.4 597.5 579.2 602.3 587.1C607.0 595.0 612.1 599.7 614.6 602.9"/><path d="M633.9 586.1C635.4 593.6 641.3 608.8 641.2 622.7C641.2 636.6 636.1 641.2 633.8 653.2C631.4 665.1 627.7 669.8 629.8 680.6C631.8 691.4 639.7 698.2 643.8 705.6C647.8 712.9 648.3 713.9 649.4 716.1"/><path d="M627.7 687.9C624.7 690.6 618.1 695.4 613.4 700.7C608.7 706.1 606.6 711.1 604.9 713.8"/><path d="M678.9 640.9C678.9 645.3 678.0 654.0 678.6 662.2C679.1 670.3 681.0 676.6 681.6 680.4"/><path d="M674.9 670.5C677.5 669.6 684.9 667.2 687.5 666.3"/><path d="M732.2 595.4C731.8 601.1 729.1 611.3 730.6 623.1C732.0 634.9 735.7 641.7 739.2 652.6C742.7 663.4 747.3 666.4 747.6 675.5C747.9 684.6 746.0 688.5 740.6 696.6C735.1 704.8 725.3 711.0 721.3 714.8"/><path d="M810.1 545.8C805.7 549.9 797.0 556.9 788.8 565.9C780.6 574.8 776.0 578.5 770.4 589.2C764.9 599.8 761.3 605.5 762.0 617.2C762.8 628.9 768.9 635.0 774.1 645.9C779.4 656.8 782.4 659.9 787.4 669.8C792.5 679.6 792.9 683.9 798.4 693.5C803.9 703.2 810.9 711.7 814.1 716.5"/><path d="M766.9 586.1C770.4 589.7 776.5 596.5 783.8 603.6C791.1 610.7 793.2 613.4 802.3 620.6C811.3 627.9 817.2 637.1 827.6 638.6C838.0 640.1 841.8 634.5 852.6 628.1C863.3 621.6 870.2 617.7 879.5 607.5C888.7 597.2 893.7 584.4 897.3 578.4"/><path d="M854.2 553.8C850.6 556.5 843.2 562.1 837.0 567.0C830.8 571.9 828.6 571.9 824.2 577.4C819.8 582.9 818.5 586.8 815.8 593.7C813.0 600.6 811.9 607.2 810.9 610.7"/><path d="M757.7 703.9C758.2 702.2 757.9 698.6 759.9 695.9C761.8 693.2 763.7 691.5 767.0 690.9C770.3 690.3 773.4 691.1 775.7 693.0C778.0 695.0 777.3 696.1 778.2 700.3C779.1 704.6 779.6 710.9 780.0 713.6"/><path d="M790.1 683.7C788.8 690.0 785.0 707.8 783.7 714.0"/><path d="M908.8 617.0C909.9 622.1 911.6 632.9 914.0 641.4C916.3 649.8 917.4 650.3 920.0 658.0C922.7 665.7 924.5 669.5 926.8 678.4C929.1 687.4 930.9 694.1 931.1 701.3C931.3 708.5 928.5 710.9 927.8 713.3"/><path d="M907.1 616.2C910.4 616.1 916.8 614.8 923.1 615.9C929.4 617.0 929.1 618.2 937.6 621.5C946.2 624.8 953.7 625.6 964.4 631.9C975.2 638.2 983.5 645.2 989.7 652.0C996.0 658.9 993.7 662.3 994.8 664.9"/><path d="M996.3 661.2C995.6 657.9 992.7 651.2 993.2 645.3C993.7 639.4 997.5 635.3 998.6 632.7M998.6 632.7C999.0 633.0 999.3 631.1 1000.7 634.1C1002.2 637.1 1003.5 641.5 1005.7 647.3C1008.0 653.1 1005.5 655.7 1011.4 662.2C1017.4 668.7 1027.5 672.8 1034.4 678.8C1041.3 684.8 1041.2 685.3 1044.8 691.2C1048.3 697.1 1050.1 704.0 1051.5 707.4"/><path d="M928.7 613.5C930.3 617.2 933.0 624.7 936.4 631.6C939.8 638.5 943.2 643.7 945.0 646.8"/><path d="M898.0 687.2C898.8 690.4 899.7 697.6 901.8 703.1C903.9 708.5 906.8 711.3 908.2 713.4"/><path d="M894.6 685.6C897.9 688.5 903.7 694.1 910.6 699.5C917.5 704.9 924.3 709.2 927.9 711.7"/><path d="M870.3 561.4C868.7 562.1 865.1 561.3 862.6 564.8C860.1 568.3 857.6 574.0 858.2 578.5C858.8 583.0 861.5 586.3 865.4 586.7C869.4 587.1 873.6 583.7 877.4 580.5C881.2 577.4 881.5 571.9 883.8 571.6C886.2 571.3 885.7 578.0 889.0 579.2C892.3 580.4 894.8 579.2 899.9 577.2C904.9 575.3 908.9 573.1 913.3 570.0C917.8 566.9 917.5 564.5 921.4 562.5C925.3 560.5 927.6 562.7 932.3 560.3C937.0 557.9 940.4 555.7 944.1 550.8C947.8 546.0 949.9 541.8 950.3 537.0C950.7 532.2 949.1 530.5 945.9 527.7C942.7 524.9 935.4 526.4 934.8 523.4C934.1 520.4 941.2 517.9 942.6 512.9C944.0 507.9 943.1 504.2 941.5 499.2C939.9 494.3 937.6 489.9 934.7 489.0C931.8 488.1 929.7 495.7 927.5 494.9C925.2 494.1 926.6 489.1 923.8 485.2C921.0 481.3 918.6 477.1 914.0 476.1C909.4 475.1 906.3 476.5 901.4 480.3C896.4 484.2 893.2 489.4 890.1 494.8C887.1 500.1 889.1 506.3 886.7 506.2C884.2 506.1 882.3 496.5 878.2 494.2C874.1 491.9 870.2 491.5 866.8 495.3C863.5 499.1 862.9 504.0 861.8 512.5C860.6 521.1 861.6 527.2 861.1 536.7C860.7 546.2 859.8 554.0 859.4 558.5"/><path d="M881.2 536.1C883.7 534.2 887.3 529.6 893.4 526.7C899.5 523.8 905.8 519.8 910.8 522.0C915.8 524.2 916.8 531.5 917.8 537.2C918.8 542.9 918.9 545.4 915.8 549.3C912.6 553.3 908.2 556.3 902.4 556.3C896.6 556.4 892.5 554.0 887.8 549.7C883.1 545.5 881.5 538.7 879.8 535.8"/><path d="M821.2 576.2C824.9 573.9 831.8 570.0 839.1 565.3C846.4 560.5 852.9 555.7 856.5 553.2"/><path d="M817.9 637.2C822.9 636.6 831.9 637.7 841.9 633.9C851.9 630.2 857.4 627.0 866.2 619.2C875.1 611.4 878.2 604.0 884.8 596.2C891.4 588.3 895.5 584.3 898.3 581.2"/><path d="M1072.5 516.5C1070.7 517.1 1066.7 516.1 1063.6 519.1C1060.6 522.2 1058.6 525.8 1057.9 531.3C1057.3 536.8 1061.0 540.5 1060.7 545.7C1060.3 550.8 1055.5 551.6 1056.0 556.3C1056.6 561.0 1059.8 565.0 1063.3 568.6C1066.7 572.2 1070.8 572.7 1072.7 573.8"/><path d="M1070.8 522.2C1069.6 524.0 1066.2 526.5 1065.1 531.0C1063.9 535.4 1063.7 540.0 1065.1 543.7C1066.5 547.5 1070.5 548.2 1071.9 549.3"/><path d="M531.5 565.2C535.5 570.5 543.6 580.3 550.8 590.6C558.0 600.8 558.7 605.6 566.3 614.7C573.9 623.9 579.3 631.5 587.5 635.0C595.8 638.6 599.2 636.1 606.2 631.9C613.1 627.8 619.7 623.2 621.2 614.9C622.7 606.6 618.4 601.0 613.4 591.7C608.4 582.5 605.4 579.4 597.1 570.2C588.8 561.0 580.8 557.8 573.2 547.2C565.5 536.7 562.7 525.0 560.0 519.1"/><path d="M565.8 555.1C567.9 555.5 574.3 552.4 576.1 557.4C577.9 562.4 577.1 573.7 574.5 579.3C572.0 584.8 567.8 585.7 563.7 584.2C559.6 582.7 556.5 574.5 554.7 572.0"/></g>
<g stroke="#808080" stroke-width="2.800" opacity=".9"><path d="M632.5 407.5C630.2 403.4 623.9 396.8 621.3 387.5C618.7 378.2 617.7 371.8 620.0 362.5C622.3 353.2 625.3 348.9 632.5 342.5C639.7 336.1 644.7 334.4 655.0 331.3C665.3 328.2 673.2 327.3 682.5 327.5C691.8 327.7 695.6 329.1 700.0 332.5C704.4 335.9 702.2 342.8 703.8 343.8C705.3 344.8 704.2 340.9 707.5 337.5C710.8 334.1 714.8 328.5 720.0 327.5C725.2 326.5 728.6 329.4 732.5 332.5C736.4 335.6 736.2 342.5 738.8 342.5C741.4 342.5 740.6 335.1 745.0 332.5C749.4 329.9 752.8 329.0 760.0 330.0C767.2 331.0 773.3 331.3 780.0 337.5C786.7 343.7 788.9 350.2 792.5 360.0C796.1 369.8 798.0 375.2 797.5 385.0C797.0 394.8 791.5 402.9 790.0 407.5"/><path d="M563.7 239.3C564.5 240.6 569.0 242.4 567.5 245.5C566.0 248.6 556.1 251.9 556.3 254.2C556.5 256.5 564.9 254.2 568.7 256.7C572.5 259.2 574.9 261.9 574.9 266.5C574.9 271.1 572.5 275.8 568.7 278.9C564.9 282.0 558.9 280.9 556.3 281.4"/><path d="M590.0 565.0C592.5 569.8 596.8 579.7 602.0 588.0C607.2 596.3 612.3 601.5 615.0 605.0"/><path d="M636.3 585.0C637.6 592.8 642.8 608.5 642.5 622.5C642.2 636.5 637.1 640.6 635.0 652.5C632.9 664.4 630.4 669.1 632.5 680.0C634.6 690.9 641.4 697.8 645.0 705.0C648.6 712.2 649.0 712.9 650.0 715.0"/><path d="M625.0 687.5C622.3 690.5 616.6 696.3 612.0 702.0C607.4 707.7 604.5 712.3 602.5 715.0"/><path d="M676.3 640.0C676.4 644.1 676.5 651.7 677.0 660.0C677.5 668.3 678.4 675.9 678.8 680.0"/><path d="M672.5 670.0C675.4 669.2 683.4 667.1 686.3 666.3"/><path d="M732.5 592.5C731.7 598.7 727.8 610.6 728.8 622.5C729.8 634.4 733.6 639.7 737.5 650.0C741.4 660.3 747.0 663.2 747.5 672.5C748.0 681.8 745.7 686.7 740.0 695.0C734.3 703.3 724.1 708.9 720.0 712.5"/><path d="M810.0 545.0C805.9 549.3 797.8 557.2 790.0 566.0C782.2 574.8 778.2 576.9 772.5 587.5C766.8 598.1 762.0 605.6 762.5 617.5C763.0 629.4 769.8 634.1 775.0 645.0C780.2 655.9 782.3 659.9 787.5 670.0C792.7 680.1 794.3 684.7 800.0 694.0C805.7 703.3 811.9 710.7 815.0 715.0"/><path d="M767.5 585.0C771.3 588.7 778.2 595.8 786.0 603.0C793.8 610.2 795.9 613.1 805.0 620.0C814.1 626.9 819.7 634.8 830.0 636.3C840.3 637.8 844.7 634.0 855.0 627.5C865.3 621.0 870.7 615.3 880.0 605.0C889.3 594.7 895.9 583.2 900.0 577.5"/><path d="M855.0 555.0C851.5 557.3 844.2 561.4 838.0 566.0C831.8 570.6 829.5 571.7 825.0 577.5C820.5 583.3 818.6 587.3 816.0 594.0C813.4 600.7 813.2 606.7 812.5 610.0"/><path d="M755.0 705.0C755.6 703.3 755.9 699.6 758.0 697.0C760.1 694.4 761.7 693.1 765.0 692.5C768.3 691.9 771.4 692.5 774.0 694.0C776.6 695.5 776.9 695.7 777.5 700.0C778.1 704.3 777.1 711.9 777.0 715.0"/><path d="M787.5 685.0C786.5 691.2 783.5 708.8 782.5 715.0"/><path d="M908.6 615.8C909.5 620.8 910.4 631.3 913.0 640.0C915.6 648.7 918.1 650.1 921.0 658.0C923.9 665.9 925.1 669.3 927.0 678.0C928.9 686.7 929.8 692.8 930.0 700.0C930.2 707.2 928.4 710.3 928.0 713.0"/><path d="M908.6 615.8C912.0 615.6 918.8 614.3 925.0 615.0C931.2 615.7 930.0 615.9 938.7 619.0C947.4 622.1 956.0 623.4 967.0 630.0C978.0 636.6 985.6 644.1 991.8 651.0C998.0 657.9 995.9 661.0 997.0 663.6"/><path d="M997.0 663.6C996.4 660.4 993.7 654.1 994.0 648.0C994.3 641.9 997.6 636.9 998.5 634.0M998.5 634.0C999.3 634.6 1000.9 634.1 1002.4 637.0C1003.9 639.9 1003.8 642.2 1006.0 648.0C1008.2 653.8 1007.2 658.5 1013.0 665.0C1018.8 671.5 1027.5 673.5 1034.3 679.5C1041.1 685.5 1042.3 688.1 1046.0 694.0C1049.7 699.9 1050.8 705.0 1052.0 707.9"/><path d="M928.0 615.8C929.2 619.1 931.1 625.4 934.0 632.0C936.9 638.6 940.3 644.5 942.0 647.7"/><path d="M896.0 688.0C896.8 690.9 897.8 696.8 900.0 702.0C902.2 707.2 905.4 710.7 906.8 713.0"/><path d="M896.0 688.0C899.3 690.9 905.2 696.8 912.0 702.0C918.8 707.2 925.5 710.7 929.0 713.0"/><path d="M870.4 563.2C868.5 563.9 863.9 563.3 861.0 566.7C858.1 570.1 855.6 575.2 856.3 579.6C857.0 584.0 860.4 587.3 864.5 587.8C868.6 588.3 872.7 585.1 876.3 581.9C879.9 578.7 879.7 572.5 882.1 572.5C884.5 572.5 884.4 580.4 888.0 581.9C891.6 583.4 894.9 582.0 899.7 579.6C904.5 577.2 907.0 573.6 911.4 570.2C915.8 566.8 916.4 565.1 920.8 563.2C925.2 561.3 927.6 563.2 932.5 560.8C937.4 558.4 940.9 556.2 944.3 551.4C947.7 546.6 949.0 542.0 949.0 537.4C949.0 532.8 947.2 531.6 944.3 529.2C941.4 526.8 935.6 528.8 934.9 525.6C934.2 522.4 939.3 519.2 940.7 513.9C942.1 508.6 943.1 504.5 941.9 499.9C940.7 495.3 938.3 492.7 934.9 491.7C931.5 490.7 927.9 496.4 925.5 495.2C923.1 494.0 925.6 489.3 923.2 485.8C920.8 482.3 918.7 479.0 913.8 478.3C908.9 477.6 904.6 478.8 899.7 482.3C894.8 485.8 893.2 490.1 890.3 495.2C887.4 500.3 888.6 506.9 885.7 506.9C882.8 506.9 880.2 497.1 876.3 495.2C872.4 493.3 870.3 493.6 866.9 497.5C863.5 501.4 861.1 505.7 859.9 513.9C858.7 522.1 861.5 527.7 861.0 537.4C860.5 547.1 858.2 556.0 857.5 560.8"/><path d="M878.6 537.4C881.0 535.5 884.0 530.7 890.3 528.0C896.6 525.3 903.8 522.6 909.1 524.5C914.4 526.4 915.4 531.8 916.1 537.4C916.8 543.0 916.0 547.0 912.6 551.4C909.2 555.8 905.3 558.5 899.7 558.5C894.1 558.5 890.1 555.8 885.7 551.4C881.3 547.0 880.1 540.3 878.6 537.4"/><path d="M820.0 577.2C823.9 574.8 831.0 570.3 838.8 565.5C846.5 560.7 853.6 556.2 857.5 553.8"/><path d="M820.0 635.8C824.8 635.3 833.7 636.9 843.4 633.5C853.1 630.1 858.2 627.1 866.9 619.4C875.6 611.6 878.9 604.2 885.7 596.0C892.5 587.8 896.8 583.0 899.7 579.6"/><path d="M1073.0 515.0C1070.9 515.6 1066.1 514.9 1063.0 518.0C1059.9 521.1 1058.6 524.4 1058.0 530.0C1057.4 535.6 1060.2 539.6 1060.0 545.0C1059.8 550.4 1056.6 551.2 1057.0 556.0C1057.4 560.8 1058.7 564.5 1062.0 568.0C1065.3 571.5 1070.7 572.0 1073.0 573.0"/><path d="M1073.0 525.0C1071.6 526.9 1067.2 529.7 1066.0 534.0C1064.8 538.3 1065.6 542.3 1067.0 546.0C1068.4 549.7 1071.8 550.8 1073.0 552.0"/><path d="M530.3 563.8C534.2 569.1 541.7 578.9 549.0 589.6C556.3 600.3 558.2 606.2 565.5 615.4C572.8 624.6 576.1 630.6 584.3 634.0C592.5 637.4 598.1 635.6 605.4 631.8C612.7 628.0 618.0 623.6 619.4 615.4C620.8 607.2 617.2 601.2 612.4 592.0C607.6 582.8 604.7 580.0 596.0 570.8C587.3 561.6 578.0 558.1 570.2 547.4C562.5 536.7 560.9 525.0 558.5 519.2"/><path d="M563.2 556.8C565.4 557.3 571.8 554.2 573.7 559.0C575.6 563.8 574.7 574.8 572.5 580.2C570.3 585.6 567.1 586.3 563.2 584.9C559.3 583.5 555.7 575.6 553.8 573.2"/></g>
<g stroke="#767676" stroke-width="2.800" opacity=".9"><ellipse cx="490.8" cy="524.5" rx="12.5" ry="15.8" transform="rotate(-20 490.8 524.5)"/><ellipse cx="492.8" cy="526.3" rx="7" ry="10" transform="rotate(-20 492.8 526.3)"/><ellipse cx="510.4" cy="507.8" rx="15" ry="17" transform="rotate(-15 510.4 507.8)"/><ellipse cx="510.4" cy="512" rx="8" ry="10.5" transform="rotate(-12 510.4 512)"/><ellipse cx="543.5" cy="507.5" rx="15.5" ry="17.5" transform="rotate(10 543.5 507.5)"/><ellipse cx="540.9" cy="509.9" rx="7.5" ry="11" transform="rotate(8 540.9 509.9)"/><ellipse cx="502" cy="561.4" rx="16" ry="13.5" transform="rotate(-10 502 561.4)"/><ellipse cx="502.2" cy="560.3" rx="10" ry="8.5" transform="rotate(-10 502.2 560.3)"/><ellipse cx="533.9" cy="543.9" rx="18" ry="16.5" transform="rotate(-5 533.9 543.9)"/><ellipse cx="533.9" cy="544.5" rx="15" ry="13.5" transform="rotate(-5 533.9 544.5)"/><ellipse cx="875.1" cy="513.9" rx="5.5" ry="10" transform="rotate(10 875.1 513.9)"/><ellipse cx="907.9" cy="501" rx="6" ry="10" transform="rotate(5 907.9 501)"/><ellipse cx="925.5" cy="512.8" rx="6.5" ry="11" transform="rotate(20 925.5 512.8)"/><ellipse cx="931.4" cy="544.4" rx="6" ry="8.5" transform="rotate(25 931.4 544.4)"/></g>
<g stroke="#a0a0a0" stroke-width="6" opacity=".28" transform="translate(1 .5)"><path d="M567.5 398.8C564.9 397.0 560.7 394.9 555.0 390.0C549.3 385.1 545.6 381.6 540.0 375.0C534.4 368.4 532.5 367.3 528.0 358.0C523.5 348.7 522.3 342.2 518.0 330.0C513.7 317.8 511.1 313.1 507.0 299.0C502.9 284.9 500.2 278.9 498.0 262.0C495.8 245.1 496.4 229.6 496.5 217.0C496.6 204.4 497.3 206.2 498.5 201.0C499.7 195.8 500.8 194.3 502.5 192.0C504.2 189.7 504.6 189.7 506.5 190.0C508.4 190.3 507.9 190.0 511.5 193.5C515.1 197.0 516.2 199.9 524.0 207.0C531.8 214.1 538.7 220.8 549.0 228.0C559.3 235.2 562.8 236.4 574.0 242.0C585.2 247.6 591.8 249.9 603.0 255.0C614.2 260.1 619.3 260.5 628.0 266.5C636.7 272.5 640.1 276.5 645.0 284.0C649.9 291.5 649.9 296.4 651.5 303.0C653.1 309.6 652.5 313.3 652.8 316.0"/><path d="M608.0 349.5C602.9 345.7 594.7 343.5 583.5 331.0C572.3 318.5 565.3 305.3 554.0 289.0C542.7 272.7 537.5 264.0 529.0 252.0C520.5 240.0 516.3 235.1 513.0 230.7M513.0 230.7C512.7 235.5 510.3 242.0 511.5 254.0C512.7 266.0 514.4 274.1 519.0 289.0C523.6 303.9 526.8 311.7 534.0 326.0C541.2 340.3 547.0 348.7 554.0 358.0C561.0 367.3 565.1 368.3 568.0 371.0"/><path d="M608.3 349.4C606.3 347.6 602.5 344.3 598.4 340.7C594.3 337.1 592.6 333.3 588.5 332.0C584.4 330.7 581.2 332.2 578.6 334.5C576.0 336.8 576.0 338.1 576.0 343.0C576.0 347.9 576.5 352.4 578.6 358.0C580.7 363.6 582.9 366.1 586.0 370.0C589.1 373.9 592.2 375.6 593.8 377.0"/><path d="M567.5 398.8C567.1 395.9 565.5 391.0 565.5 385.0C565.5 379.0 566.3 374.6 567.5 370.0C568.7 365.4 568.7 363.0 571.3 362.5C573.9 362.0 575.4 364.5 580.0 367.5C584.6 370.5 590.9 375.0 593.8 377.0"/><path d="M567.5 398.8C569.0 401.1 570.9 405.9 575.0 410.0C579.1 414.1 582.6 416.5 587.5 418.8C592.4 421.1 596.5 420.8 598.8 421.3"/><path d="M598.8 421.3C596.2 422.3 589.7 423.5 586.3 426.3C582.9 429.1 582.5 430.6 582.5 435.0C582.5 439.4 583.2 442.6 586.3 447.5C589.4 452.4 591.6 455.2 597.5 458.8C603.4 462.4 611.4 463.7 615.0 465.0"/><path d="M635.0 490.0C632.4 488.4 626.2 486.6 622.5 482.5C618.8 478.4 618.0 474.6 617.0 470.0C616.0 465.4 616.4 464.6 617.5 460.0C618.6 455.4 621.5 450.1 622.5 447.5M622.5 447.5C624.6 448.0 627.3 447.7 632.5 450.0C637.7 452.3 642.3 456.2 647.5 458.8C652.7 461.4 655.4 461.7 657.5 462.5"/><path d="M616.0 476.0C613.7 474.8 609.6 472.5 605.0 470.0C600.4 467.5 596.1 465.1 593.8 463.8M593.8 463.8C593.0 466.1 590.3 468.6 590.0 475.0C589.7 481.4 590.4 487.2 592.5 495.0C594.6 502.8 595.1 506.5 600.0 512.5C604.9 518.5 612.9 521.5 616.3 523.8"/><path d="M600.0 515.0C599.2 517.1 596.8 519.8 596.3 525.0C595.8 530.2 595.7 533.8 597.5 540.0C599.3 546.2 600.4 548.8 605.0 555.0C609.6 561.2 613.5 565.6 620.0 570.0C626.5 574.4 632.9 575.0 636.3 576.3"/><path d="M636.3 557.5C636.4 560.1 636.2 563.8 637.0 570.0C637.8 576.2 635.8 581.3 640.0 587.5C644.2 593.7 649.2 596.1 657.5 600.0C665.8 603.9 671.2 605.5 680.0 606.3C688.8 607.1 691.7 606.1 700.0 603.8C708.3 601.5 713.3 598.9 720.0 595.0C726.7 591.1 728.4 590.2 732.5 585.0C736.6 579.8 738.2 576.2 740.0 570.0C741.8 563.8 741.0 558.1 741.3 555.0"/><path d="M676.3 582.5C677.1 586.9 679.2 599.4 680.0 603.8"/><path d="M732.5 585.0C735.1 585.8 738.8 588.8 745.0 588.8C751.2 588.8 755.8 588.4 762.5 585.0C769.2 581.6 773.6 578.7 777.5 572.5C781.4 566.3 780.8 560.7 781.3 555.0C781.8 549.3 780.8 548.3 780.0 545.0C779.2 541.7 778.0 540.1 777.5 538.8"/><path d="M781.0 563.8C783.9 562.5 790.0 561.4 795.0 557.5C800.0 553.6 802.7 552.2 805.0 545.0C807.3 537.8 807.1 530.8 806.3 522.5C805.5 514.2 802.3 508.6 801.3 505.0"/><path d="M820.0 558.8C822.1 557.8 826.9 557.7 830.0 553.8C833.1 549.9 833.7 544.9 835.0 540.0C836.3 535.1 836.3 535.2 836.3 530.0C836.3 524.8 835.3 518.1 835.0 515.0"/><path d="M810.0 477.5C813.1 478.5 819.8 479.4 825.0 482.5C830.2 485.6 831.9 486.8 835.0 492.5C838.1 498.2 839.0 506.4 840.0 510.0M840.0 510.0C837.9 510.5 835.2 512.7 830.0 512.5C824.8 512.3 818.1 509.6 815.0 508.8"/><path d="M630.0 427.0C630.3 429.2 629.2 432.7 631.3 437.5C633.4 442.3 634.5 444.9 640.0 450.0C645.5 455.1 650.8 458.3 658.0 462.0C665.2 465.7 667.4 465.7 675.0 468.0C682.6 470.3 690.9 472.0 695.0 473.0"/><path d="M710.0 467.0C708.5 467.6 705.6 468.6 702.5 470.0C699.4 471.4 698.1 471.9 695.0 474.0C691.9 476.1 690.6 476.3 687.5 480.0C684.4 483.7 682.1 488.4 680.0 492.0C677.9 495.6 676.7 495.4 677.5 497.5C678.3 499.6 681.4 500.7 684.0 502.0C686.6 503.3 686.7 503.4 690.0 503.8C693.3 504.2 695.9 504.6 700.0 503.8C704.1 503.0 706.9 501.8 710.0 500.0C713.1 498.2 714.0 496.0 715.0 495.0"/><path d="M683.0 424.4C683.8 426.0 683.5 429.5 686.9 432.2C690.3 434.9 693.6 436.9 699.4 437.7C705.2 438.5 709.7 437.5 715.0 436.0C720.3 434.5 723.1 431.7 725.2 430.6M725.2 430.6C726.6 432.1 728.5 435.9 732.2 437.7C735.9 439.5 739.0 440.0 743.0 439.2C747.0 438.4 749.6 436.2 751.7 433.8C753.8 431.4 753.0 428.8 753.3 427.5"/><path d="M725.2 421.3C725.2 423.2 725.2 428.7 725.2 430.6"/><path d="M728.8 481.3C726.5 479.5 720.8 476.9 717.5 472.5C714.2 468.1 713.5 464.8 712.7 460.0C711.9 455.2 712.6 453.2 713.4 449.4C714.2 445.6 715.9 443.2 716.6 441.6M716.6 441.6C720.2 442.9 727.4 444.6 733.8 447.8C740.2 451.0 744.0 454.5 747.8 457.2C751.6 459.9 751.1 460.2 752.0 461.0"/><path d="M760.0 470.0C758.3 467.9 753.2 465.6 751.7 460.0C750.2 454.4 751.2 449.1 752.5 443.0C753.8 436.9 756.9 433.2 758.0 430.6M758.0 430.6C760.4 433.5 765.0 439.9 769.7 444.7C774.4 449.5 777.8 451.6 780.6 454.0C783.4 456.4 782.7 455.8 783.3 456.3"/><path d="M793.8 425.5C793.8 427.5 794.3 430.5 793.8 435.0C793.3 439.5 793.5 443.1 791.3 447.5C789.1 451.9 785.0 454.5 783.3 456.3"/><path d="M783.3 456.3C786.2 454.5 793.1 451.6 797.5 447.5C801.9 443.4 803.1 438.6 804.5 436.3M804.5 436.3C806.2 439.1 810.4 444.6 812.5 450.0C814.6 455.4 815.0 457.3 814.5 462.5C814.0 467.7 813.5 471.1 810.0 475.0C806.5 478.9 800.1 480.0 797.5 481.3"/><path d="M800.0 345.0C801.0 342.4 802.4 336.1 805.0 332.5C807.6 328.9 809.4 326.5 812.5 327.5C815.6 328.5 817.4 331.3 820.0 337.5C822.6 343.7 826.0 349.8 825.0 357.5C824.0 365.2 817.1 371.4 815.0 375.0"/><path d="M825.0 357.5C826.5 357.0 829.4 352.9 832.5 355.0C835.6 357.1 837.7 361.3 840.0 367.5C842.3 373.7 844.3 377.2 843.8 385.0C843.3 392.8 840.4 399.0 837.5 405.0C834.6 411.0 834.6 411.5 830.0 413.8C825.4 416.1 818.1 415.8 815.0 416.3"/><path d="M815.0 416.3C818.6 415.8 828.1 412.0 832.5 413.8C836.9 415.6 835.8 418.6 836.3 425.0C836.8 431.4 837.3 437.8 835.0 445.0C832.7 452.2 829.1 456.4 825.0 460.0C820.9 463.6 817.1 462.0 815.0 462.5"/><path d="M772.5 270.0C774.6 268.4 776.8 265.8 782.5 262.5C788.2 259.2 791.2 257.1 800.0 253.8C808.8 250.5 812.1 250.2 825.0 246.3C837.9 242.4 849.6 239.4 862.5 235.0C875.4 230.6 877.2 229.9 887.5 225.0C897.8 220.1 905.0 215.5 912.5 211.3C920.0 207.1 920.5 206.5 924.0 204.8C927.5 203.1 927.8 202.3 929.5 203.0C931.2 203.7 931.9 203.5 932.3 208.0C932.7 212.5 932.8 215.8 931.3 225.0C929.8 234.2 928.4 241.1 925.0 252.5C921.6 263.9 920.2 267.6 915.0 280.0C909.8 292.4 906.2 299.6 900.0 312.5C893.8 325.4 890.7 332.7 885.0 342.5C879.3 352.3 878.7 353.3 872.5 360.0C866.3 366.7 860.9 369.8 855.0 375.0C849.1 380.2 846.1 382.9 843.8 385.0"/><path d="M800.0 345.0C801.0 341.4 801.4 335.8 805.0 327.5C808.6 319.2 810.8 314.3 817.5 305.0C824.2 295.7 828.2 291.3 837.5 282.5C846.8 273.7 852.2 269.7 862.5 262.5C872.8 255.3 877.8 252.3 887.5 247.5C897.2 242.7 905.0 241.2 909.5 239.5M909.5 239.5C909.1 242.2 910.0 243.1 907.5 252.5C905.0 261.9 903.2 271.1 897.5 285.0C891.8 298.9 887.8 306.6 880.0 320.0C872.2 333.4 867.8 340.2 860.0 350.0C852.2 359.8 846.1 363.9 842.5 367.5"/><path d="M646.6 287.6C649.4 285.8 655.9 285.8 660.2 278.9C664.5 272.0 665.3 260.1 667.6 254.2C669.9 248.3 670.5 251.3 671.3 250.5M671.3 250.5C673.6 252.3 677.5 253.2 682.4 259.1C687.3 265.0 691.2 271.3 694.8 278.9C698.4 286.5 698.9 292.5 700.0 296.0M700.0 296.0C699.4 297.1 700.7 298.3 697.3 301.2C693.9 304.1 686.5 308.0 683.7 309.8"/><path d="M700.0 280.0C702.6 279.5 707.3 277.0 712.5 277.5C717.7 278.0 719.3 279.9 725.0 282.5C730.7 285.1 734.8 289.0 740.0 290.0C745.2 291.0 746.4 290.1 750.0 287.5C753.6 284.9 755.4 282.1 757.5 277.5C759.6 272.9 758.7 268.9 760.0 265.0C761.3 261.1 763.0 260.1 763.8 258.8M763.8 258.8C765.6 261.1 769.9 263.6 772.5 270.0C775.1 276.4 776.0 282.2 776.3 290.0C776.6 297.8 776.1 301.3 773.8 307.5C771.5 313.7 769.9 316.1 765.0 320.0C760.1 323.9 756.7 325.5 750.0 326.3C743.3 327.1 736.1 324.3 732.5 323.8"/></g>
<g stroke="#8c8c8c" stroke-width="1.600" opacity=".55"><path d="M568.0 397.5C565.3 395.9 561.2 394.2 555.1 389.6C549.1 384.9 544.6 381.6 538.7 375.0C532.8 368.5 531.2 367.4 526.6 357.8C522.1 348.2 520.8 340.7 516.7 328.8C512.6 316.8 510.9 314.0 506.8 300.0C502.7 286.0 498.9 278.0 496.9 261.2C494.8 244.3 496.5 230.8 496.9 218.3C497.3 205.8 497.3 206.4 498.7 200.7C500.2 195.0 502.1 193.0 503.9 190.6C505.8 188.3 506.2 189.0 507.6 189.4C508.9 189.7 507.2 188.5 510.4 192.4C513.7 196.2 515.7 200.5 523.4 207.9C531.2 215.4 537.5 221.3 548.0 228.2C558.6 235.2 563.0 236.4 574.4 241.6C585.8 246.9 592.3 248.7 603.1 253.7C613.9 258.6 617.9 259.4 626.7 265.6C635.4 271.8 640.5 276.0 645.5 283.8C650.6 291.6 649.5 296.7 650.9 303.3C652.4 309.8 652.3 312.9 652.7 315.4"/><path d="M606.9 350.1C601.8 346.0 592.9 343.1 582.3 330.2C571.6 317.4 566.4 304.3 555.5 288.1C544.6 271.9 538.2 263.7 529.4 251.9C520.6 240.0 516.3 235.1 512.9 230.7M512.9 230.7C512.4 235.7 509.6 243.1 510.6 255.0C511.6 266.9 513.2 273.7 517.8 288.2C522.3 302.7 525.1 310.6 532.6 325.3C540.0 340.0 546.5 350.0 553.7 359.2C561.0 368.4 564.8 367.6 567.6 369.8"/><path d="M607.2 350.5C605.1 348.5 600.5 344.8 596.9 340.7C593.3 336.6 593.4 332.0 589.7 330.7C585.9 329.5 581.9 332.4 578.8 334.8C575.6 337.3 574.5 337.9 574.6 342.6C574.7 347.4 576.7 352.4 579.2 357.9C581.7 363.3 583.8 365.3 586.7 369.0C589.5 372.7 591.7 374.4 593.0 375.8"/><path d="M567.7 397.9C567.5 395.4 566.4 392.0 566.4 386.0C566.5 380.0 566.9 373.9 568.0 369.0C569.0 364.0 569.0 362.0 571.4 362.0C573.7 362.0 574.3 366.0 579.2 368.9C584.2 371.7 592.0 374.2 595.3 375.6"/><path d="M568.8 398.7C570.1 401.1 571.3 406.1 575.0 410.3C578.7 414.4 581.6 416.4 586.6 418.8C591.5 421.3 596.6 421.5 599.2 422.2"/><path d="M599.3 420.2C596.3 421.4 588.4 422.7 584.8 425.9C581.2 429.2 581.4 431.4 581.8 435.9C582.2 440.5 583.6 443.0 586.9 447.8C590.1 452.6 592.1 455.8 597.7 459.3C603.3 462.8 610.6 463.7 613.9 464.8"/><path d="M635.6 491.0C632.7 489.1 625.6 486.2 621.6 481.7C617.5 477.2 616.6 473.9 615.9 469.2C615.2 464.5 616.8 463.5 618.2 458.9C619.6 454.2 621.7 449.2 622.6 446.6M622.6 446.6C624.5 447.3 626.5 447.2 631.9 449.8C637.2 452.4 643.5 456.6 648.5 459.1C653.5 461.6 654.5 461.3 656.0 461.8"/><path d="M616.5 477.3C613.9 475.7 608.9 472.0 604.3 469.3C599.8 466.6 596.5 465.3 594.5 464.3M594.5 464.3C593.4 466.6 589.9 469.0 589.4 475.6C588.9 482.1 590.2 488.4 592.2 495.8C594.1 503.3 593.6 506.0 598.9 511.7C604.1 517.4 613.7 521.0 617.5 523.4"/><path d="M600.7 514.0C600.1 516.0 598.2 518.1 597.8 523.6C597.3 529.0 596.9 533.7 598.6 540.5C600.4 547.4 601.8 550.5 606.1 556.5C610.3 562.5 612.8 565.6 619.2 569.5C625.6 573.5 633.3 574.4 636.9 575.6"/><path d="M636.1 557.3C636.2 560.1 636.1 564.2 636.7 570.5C637.4 576.8 635.3 581.9 639.3 587.9C643.3 593.9 647.7 595.8 656.0 599.4C664.3 603.0 670.3 604.4 679.5 605.2C688.7 606.0 692.2 605.1 700.7 603.2C709.3 601.4 714.5 599.9 720.9 596.4C727.3 592.8 727.6 591.5 731.8 586.2C735.9 580.8 739.2 577.0 740.9 570.5C742.6 564.0 740.1 558.1 739.9 554.9"/><path d="M677.7 581.9C678.3 586.5 680.2 599.8 680.8 604.4"/><path d="M732.0 584.1C734.7 585.1 738.7 588.6 745.0 588.8C751.3 588.9 755.9 588.4 762.4 584.9C769.0 581.4 772.8 578.0 776.8 571.8C780.8 565.5 781.1 559.8 781.9 554.5C782.6 549.1 781.2 548.8 780.5 545.9C779.8 542.9 779.0 541.3 778.6 540.1"/><path d="M781.1 563.8C783.9 562.8 789.9 563.1 794.7 559.0C799.5 554.9 802.1 551.6 804.4 543.9C806.6 536.3 806.3 530.0 805.6 521.8C804.8 513.6 801.8 507.9 800.8 504.3"/><path d="M820.8 560.0C822.6 558.8 826.1 558.1 829.3 554.2C832.5 550.3 834.7 546.3 836.2 541.1C837.7 535.9 836.8 534.1 836.5 529.0C836.2 523.9 835.1 519.1 834.7 516.5"/><path d="M810.4 477.4C813.2 478.7 818.9 480.3 824.1 483.4C829.4 486.5 832.6 487.2 835.9 492.5C839.2 497.9 839.2 505.8 840.0 509.2M840.0 509.2C837.6 509.8 833.6 512.5 828.5 512.1C823.4 511.8 818.0 508.5 815.3 507.5"/><path d="M628.6 428.5C628.9 430.1 627.9 432.0 630.4 436.4C632.8 440.7 634.5 444.4 640.5 449.5C646.4 454.7 651.7 457.5 659.2 461.2C666.6 464.9 668.9 464.8 676.4 467.5C683.8 470.2 691.4 472.9 695.3 474.3"/><path d="M711.2 465.8C709.4 466.6 706.1 468.3 702.8 469.8C699.5 471.2 698.4 470.8 695.1 472.9C691.7 475.0 689.9 475.9 686.6 479.8C683.3 483.8 681.3 488.5 679.2 491.9C677.0 495.3 674.9 494.2 676.1 496.3C677.2 498.3 681.7 500.1 684.6 501.8C687.5 503.5 686.9 504.4 690.0 504.5C693.1 504.6 695.3 503.3 699.6 502.5C703.9 501.6 707.6 501.7 710.8 500.3C714.1 498.8 714.5 496.4 715.5 495.4"/><path d="M682.0 425.9C682.9 427.3 682.6 430.1 686.0 432.7C689.3 435.3 692.4 437.7 698.2 438.5C704.0 439.3 708.2 438.1 714.0 436.6C719.7 435.2 723.4 432.5 725.9 431.4M725.9 431.4C727.1 432.9 728.2 437.4 732.0 438.8C735.9 440.2 740.4 438.8 744.5 438.0C748.5 437.3 749.8 437.4 751.8 435.2C753.7 433.0 753.5 429.0 754.0 427.3"/><path d="M726.2 420.4C726.2 422.6 726.3 428.8 726.3 431.0"/><path d="M727.9 481.6C725.5 479.9 719.2 478.1 716.2 473.3C713.2 468.6 714.0 463.6 713.5 458.6C713.0 453.7 713.2 452.6 714.0 449.4C714.7 446.2 716.4 444.3 717.0 443.0M717.0 443.0C720.8 443.9 728.7 444.4 735.3 447.5C741.8 450.6 745.1 455.6 748.8 458.1C752.6 460.6 752.5 459.3 753.4 459.6"/><path d="M761.4 469.1C759.1 467.4 752.3 466.4 750.4 461.0C748.5 455.5 750.2 449.1 752.0 442.6C753.8 436.1 757.5 432.3 758.9 429.7M758.9 429.7C761.4 432.8 766.7 439.4 770.9 444.7C775.1 450.0 776.7 453.1 779.3 455.3C781.9 457.4 782.6 455.1 783.5 455.0"/><path d="M794.1 424.5C793.8 426.7 793.3 430.3 792.7 434.9C792.1 439.5 793.1 442.0 791.1 446.6C789.0 451.3 784.6 455.1 783.0 457.3"/><path d="M784.3 455.7C787.1 453.9 793.4 450.7 797.5 447.0C801.6 443.3 802.9 439.6 804.2 437.7M804.2 437.7C805.7 440.2 809.4 444.8 811.3 449.8C813.3 454.9 813.6 457.0 813.7 462.0C813.7 467.1 814.8 470.6 811.5 474.5C808.2 478.4 800.6 479.7 797.8 481.1"/><path d="M798.6 345.5C799.7 342.6 801.3 335.4 804.1 331.8C806.9 328.1 808.6 326.8 812.2 327.9C815.8 329.1 818.5 331.0 821.5 337.4C824.4 343.8 828.0 351.5 826.5 359.0C825.0 366.5 816.8 370.7 814.2 373.7"/><path d="M824.7 358.1C826.1 357.2 828.4 351.7 831.4 353.8C834.4 355.9 836.9 361.7 839.2 368.3C841.5 374.9 843.0 378.4 842.7 385.7C842.5 393.1 840.6 398.1 838.0 403.9C835.4 409.7 834.9 410.8 830.1 413.6C825.3 416.5 817.9 416.9 814.7 417.8"/><path d="M814.4 417.5C818.1 416.9 828.2 412.9 832.5 414.5C836.8 416.0 834.4 418.7 835.1 425.0C835.8 431.4 837.8 437.6 836.0 445.1C834.2 452.5 830.8 457.9 826.3 461.1C821.9 464.4 817.0 461.0 814.6 461.0"/><path d="M773.5 269.3C775.4 268.2 777.2 267.1 783.0 263.7C788.7 260.3 792.4 256.4 801.2 252.9C810.0 249.3 812.8 250.1 825.5 246.7C838.1 243.2 849.7 240.9 862.5 236.4C875.4 231.9 877.0 229.9 887.6 224.8C898.2 219.7 906.4 216.0 913.8 211.7C921.2 207.4 920.2 206.3 923.4 204.2C926.6 202.2 927.6 200.7 929.5 201.7C931.4 202.6 932.3 203.7 932.6 208.7C933.0 213.7 932.4 217.0 931.1 226.0C929.8 235.1 929.5 241.8 926.3 252.7C923.1 263.6 921.3 266.2 915.5 278.9C909.8 291.5 905.1 301.0 898.7 313.9C892.2 326.9 889.5 332.0 884.4 341.6C879.2 351.3 880.0 354.0 873.7 360.7C867.4 367.5 860.2 369.6 853.9 374.5C847.5 379.3 845.3 382.3 843.0 384.3"/><path d="M801.0 346.2C802.1 342.2 802.5 335.7 806.1 327.1C809.8 318.5 812.5 314.2 818.8 304.8C825.2 295.3 827.9 290.2 836.9 281.3C845.9 272.3 852.2 268.4 862.5 261.5C872.8 254.6 876.9 252.2 886.8 247.8C896.7 243.4 905.5 241.8 910.3 240.3M910.3 240.3C909.5 242.5 909.1 241.9 906.3 251.2C903.5 260.5 902.0 270.7 896.8 285.2C891.5 299.6 888.3 307.4 881.0 320.9C873.7 334.4 869.2 340.8 861.3 350.3C853.4 359.8 846.7 363.4 842.9 366.9"/><path d="M647.3 288.7C649.9 287.0 655.3 287.3 659.6 280.3C663.8 273.3 665.2 260.8 667.8 254.9C670.4 249.1 671.2 252.4 672.1 251.8M672.1 251.8C674.1 253.2 676.9 253.0 681.7 258.7C686.6 264.4 691.5 271.5 695.5 279.2C699.4 286.8 699.7 292.2 700.8 295.6M700.8 295.6C700.3 296.4 702.1 296.9 698.7 299.7C695.3 302.6 687.3 307.4 684.4 309.4"/><path d="M701.4 281.3C703.9 280.7 708.8 278.3 713.4 278.6C717.9 279.0 718.2 280.4 723.5 282.9C728.8 285.4 733.8 289.7 739.2 290.7C744.7 291.7 746.0 290.4 749.8 287.7C753.6 285.0 755.3 282.1 757.6 277.7C759.9 273.3 759.8 270.2 761.0 266.4C762.2 262.7 762.9 261.1 763.3 259.7M763.3 259.7C765.5 261.8 771.2 263.4 773.7 269.7C776.1 275.9 775.0 282.2 775.2 290.0C775.4 297.8 776.9 301.2 774.6 307.6C772.3 313.9 769.2 316.5 764.1 320.6C758.9 324.7 756.2 326.7 749.5 327.5C742.7 328.2 735.2 324.8 731.5 324.1"/></g>
<g fill="#8d8d8d" stroke="none"><ellipse cx="643" cy="422" rx="2.8" ry="2.3"/><ellipse cx="658" cy="422.8" rx="2.8" ry="2.3"/><ellipse cx="651.7" cy="432.2" rx="2.8" ry="2.3"/><ellipse cx="768" cy="426.7" rx="2.8" ry="2.3"/><ellipse cx="777.5" cy="427.5" rx="2.8" ry="2.3"/><ellipse cx="772.8" cy="433.8" rx="2.8" ry="2.3"/><ellipse cx="517" cy="417" rx="0.9" ry="1.2"/></g>
<g stroke="#0a0a0a" stroke-width="2.150"><path d="M567.5 398.8C564.9 397.0 560.7 394.9 555.0 390.0C549.3 385.1 545.6 381.6 540.0 375.0C534.4 368.4 532.5 367.3 528.0 358.0C523.5 348.7 522.3 342.2 518.0 330.0C513.7 317.8 511.1 313.1 507.0 299.0C502.9 284.9 500.2 278.9 498.0 262.0C495.8 245.1 496.4 229.6 496.5 217.0C496.6 204.4 497.3 206.2 498.5 201.0C499.7 195.8 500.8 194.3 502.5 192.0C504.2 189.7 504.6 189.7 506.5 190.0C508.4 190.3 507.9 190.0 511.5 193.5C515.1 197.0 516.2 199.9 524.0 207.0C531.8 214.1 538.7 220.8 549.0 228.0C559.3 235.2 562.8 236.4 574.0 242.0C585.2 247.6 591.8 249.9 603.0 255.0C614.2 260.1 619.3 260.5 628.0 266.5C636.7 272.5 640.1 276.5 645.0 284.0C649.9 291.5 649.9 296.4 651.5 303.0C653.1 309.6 652.5 313.3 652.8 316.0"/><path d="M608.0 349.5C602.9 345.7 594.7 343.5 583.5 331.0C572.3 318.5 565.3 305.3 554.0 289.0C542.7 272.7 537.5 264.0 529.0 252.0C520.5 240.0 516.3 235.1 513.0 230.7M513.0 230.7C512.7 235.5 510.3 242.0 511.5 254.0C512.7 266.0 514.4 274.1 519.0 289.0C523.6 303.9 526.8 311.7 534.0 326.0C541.2 340.3 547.0 348.7 554.0 358.0C561.0 367.3 565.1 368.3 568.0 371.0"/><path d="M608.3 349.4C606.3 347.6 602.5 344.3 598.4 340.7C594.3 337.1 592.6 333.3 588.5 332.0C584.4 330.7 581.2 332.2 578.6 334.5C576.0 336.8 576.0 338.1 576.0 343.0C576.0 347.9 576.5 352.4 578.6 358.0C580.7 363.6 582.9 366.1 586.0 370.0C589.1 373.9 592.2 375.6 593.8 377.0"/><path d="M567.5 398.8C567.1 395.9 565.5 391.0 565.5 385.0C565.5 379.0 566.3 374.6 567.5 370.0C568.7 365.4 568.7 363.0 571.3 362.5C573.9 362.0 575.4 364.5 580.0 367.5C584.6 370.5 590.9 375.0 593.8 377.0"/><path d="M567.5 398.8C569.0 401.1 570.9 405.9 575.0 410.0C579.1 414.1 582.6 416.5 587.5 418.8C592.4 421.1 596.5 420.8 598.8 421.3"/><path d="M598.8 421.3C596.2 422.3 589.7 423.5 586.3 426.3C582.9 429.1 582.5 430.6 582.5 435.0C582.5 439.4 583.2 442.6 586.3 447.5C589.4 452.4 591.6 455.2 597.5 458.8C603.4 462.4 611.4 463.7 615.0 465.0"/><path d="M635.0 490.0C632.4 488.4 626.2 486.6 622.5 482.5C618.8 478.4 618.0 474.6 617.0 470.0C616.0 465.4 616.4 464.6 617.5 460.0C618.6 455.4 621.5 450.1 622.5 447.5M622.5 447.5C624.6 448.0 627.3 447.7 632.5 450.0C637.7 452.3 642.3 456.2 647.5 458.8C652.7 461.4 655.4 461.7 657.5 462.5"/><path d="M616.0 476.0C613.7 474.8 609.6 472.5 605.0 470.0C600.4 467.5 596.1 465.1 593.8 463.8M593.8 463.8C593.0 466.1 590.3 468.6 590.0 475.0C589.7 481.4 590.4 487.2 592.5 495.0C594.6 502.8 595.1 506.5 600.0 512.5C604.9 518.5 612.9 521.5 616.3 523.8"/><path d="M600.0 515.0C599.2 517.1 596.8 519.8 596.3 525.0C595.8 530.2 595.7 533.8 597.5 540.0C599.3 546.2 600.4 548.8 605.0 555.0C609.6 561.2 613.5 565.6 620.0 570.0C626.5 574.4 632.9 575.0 636.3 576.3"/><path d="M636.3 557.5C636.4 560.1 636.2 563.8 637.0 570.0C637.8 576.2 635.8 581.3 640.0 587.5C644.2 593.7 649.2 596.1 657.5 600.0C665.8 603.9 671.2 605.5 680.0 606.3C688.8 607.1 691.7 606.1 700.0 603.8C708.3 601.5 713.3 598.9 720.0 595.0C726.7 591.1 728.4 590.2 732.5 585.0C736.6 579.8 738.2 576.2 740.0 570.0C741.8 563.8 741.0 558.1 741.3 555.0"/><path d="M676.3 582.5C677.1 586.9 679.2 599.4 680.0 603.8"/><path d="M732.5 585.0C735.1 585.8 738.8 588.8 745.0 588.8C751.2 588.8 755.8 588.4 762.5 585.0C769.2 581.6 773.6 578.7 777.5 572.5C781.4 566.3 780.8 560.7 781.3 555.0C781.8 549.3 780.8 548.3 780.0 545.0C779.2 541.7 778.0 540.1 777.5 538.8"/><path d="M781.0 563.8C783.9 562.5 790.0 561.4 795.0 557.5C800.0 553.6 802.7 552.2 805.0 545.0C807.3 537.8 807.1 530.8 806.3 522.5C805.5 514.2 802.3 508.6 801.3 505.0"/><path d="M820.0 558.8C822.1 557.8 826.9 557.7 830.0 553.8C833.1 549.9 833.7 544.9 835.0 540.0C836.3 535.1 836.3 535.2 836.3 530.0C836.3 524.8 835.3 518.1 835.0 515.0"/><path d="M810.0 477.5C813.1 478.5 819.8 479.4 825.0 482.5C830.2 485.6 831.9 486.8 835.0 492.5C838.1 498.2 839.0 506.4 840.0 510.0M840.0 510.0C837.9 510.5 835.2 512.7 830.0 512.5C824.8 512.3 818.1 509.6 815.0 508.8"/><path d="M630.0 427.0C630.3 429.2 629.2 432.7 631.3 437.5C633.4 442.3 634.5 444.9 640.0 450.0C645.5 455.1 650.8 458.3 658.0 462.0C665.2 465.7 667.4 465.7 675.0 468.0C682.6 470.3 690.9 472.0 695.0 473.0"/><path d="M710.0 467.0C708.5 467.6 705.6 468.6 702.5 470.0C699.4 471.4 698.1 471.9 695.0 474.0C691.9 476.1 690.6 476.3 687.5 480.0C684.4 483.7 682.1 488.4 680.0 492.0C677.9 495.6 676.7 495.4 677.5 497.5C678.3 499.6 681.4 500.7 684.0 502.0C686.6 503.3 686.7 503.4 690.0 503.8C693.3 504.2 695.9 504.6 700.0 503.8C704.1 503.0 706.9 501.8 710.0 500.0C713.1 498.2 714.0 496.0 715.0 495.0"/><path d="M683.0 424.4C683.8 426.0 683.5 429.5 686.9 432.2C690.3 434.9 693.6 436.9 699.4 437.7C705.2 438.5 709.7 437.5 715.0 436.0C720.3 434.5 723.1 431.7 725.2 430.6M725.2 430.6C726.6 432.1 728.5 435.9 732.2 437.7C735.9 439.5 739.0 440.0 743.0 439.2C747.0 438.4 749.6 436.2 751.7 433.8C753.8 431.4 753.0 428.8 753.3 427.5"/><path d="M725.2 421.3C725.2 423.2 725.2 428.7 725.2 430.6"/><path d="M728.8 481.3C726.5 479.5 720.8 476.9 717.5 472.5C714.2 468.1 713.5 464.8 712.7 460.0C711.9 455.2 712.6 453.2 713.4 449.4C714.2 445.6 715.9 443.2 716.6 441.6M716.6 441.6C720.2 442.9 727.4 444.6 733.8 447.8C740.2 451.0 744.0 454.5 747.8 457.2C751.6 459.9 751.1 460.2 752.0 461.0"/><path d="M760.0 470.0C758.3 467.9 753.2 465.6 751.7 460.0C750.2 454.4 751.2 449.1 752.5 443.0C753.8 436.9 756.9 433.2 758.0 430.6M758.0 430.6C760.4 433.5 765.0 439.9 769.7 444.7C774.4 449.5 777.8 451.6 780.6 454.0C783.4 456.4 782.7 455.8 783.3 456.3"/><path d="M793.8 425.5C793.8 427.5 794.3 430.5 793.8 435.0C793.3 439.5 793.5 443.1 791.3 447.5C789.1 451.9 785.0 454.5 783.3 456.3"/><path d="M783.3 456.3C786.2 454.5 793.1 451.6 797.5 447.5C801.9 443.4 803.1 438.6 804.5 436.3M804.5 436.3C806.2 439.1 810.4 444.6 812.5 450.0C814.6 455.4 815.0 457.3 814.5 462.5C814.0 467.7 813.5 471.1 810.0 475.0C806.5 478.9 800.1 480.0 797.5 481.3"/><path d="M800.0 345.0C801.0 342.4 802.4 336.1 805.0 332.5C807.6 328.9 809.4 326.5 812.5 327.5C815.6 328.5 817.4 331.3 820.0 337.5C822.6 343.7 826.0 349.8 825.0 357.5C824.0 365.2 817.1 371.4 815.0 375.0"/><path d="M825.0 357.5C826.5 357.0 829.4 352.9 832.5 355.0C835.6 357.1 837.7 361.3 840.0 367.5C842.3 373.7 844.3 377.2 843.8 385.0C843.3 392.8 840.4 399.0 837.5 405.0C834.6 411.0 834.6 411.5 830.0 413.8C825.4 416.1 818.1 415.8 815.0 416.3"/><path d="M815.0 416.3C818.6 415.8 828.1 412.0 832.5 413.8C836.9 415.6 835.8 418.6 836.3 425.0C836.8 431.4 837.3 437.8 835.0 445.0C832.7 452.2 829.1 456.4 825.0 460.0C820.9 463.6 817.1 462.0 815.0 462.5"/><path d="M772.5 270.0C774.6 268.4 776.8 265.8 782.5 262.5C788.2 259.2 791.2 257.1 800.0 253.8C808.8 250.5 812.1 250.2 825.0 246.3C837.9 242.4 849.6 239.4 862.5 235.0C875.4 230.6 877.2 229.9 887.5 225.0C897.8 220.1 905.0 215.5 912.5 211.3C920.0 207.1 920.5 206.5 924.0 204.8C927.5 203.1 927.8 202.3 929.5 203.0C931.2 203.7 931.9 203.5 932.3 208.0C932.7 212.5 932.8 215.8 931.3 225.0C929.8 234.2 928.4 241.1 925.0 252.5C921.6 263.9 920.2 267.6 915.0 280.0C909.8 292.4 906.2 299.6 900.0 312.5C893.8 325.4 890.7 332.7 885.0 342.5C879.3 352.3 878.7 353.3 872.5 360.0C866.3 366.7 860.9 369.8 855.0 375.0C849.1 380.2 846.1 382.9 843.8 385.0"/><path d="M800.0 345.0C801.0 341.4 801.4 335.8 805.0 327.5C808.6 319.2 810.8 314.3 817.5 305.0C824.2 295.7 828.2 291.3 837.5 282.5C846.8 273.7 852.2 269.7 862.5 262.5C872.8 255.3 877.8 252.3 887.5 247.5C897.2 242.7 905.0 241.2 909.5 239.5M909.5 239.5C909.1 242.2 910.0 243.1 907.5 252.5C905.0 261.9 903.2 271.1 897.5 285.0C891.8 298.9 887.8 306.6 880.0 320.0C872.2 333.4 867.8 340.2 860.0 350.0C852.2 359.8 846.1 363.9 842.5 367.5"/><path d="M646.6 287.6C649.4 285.8 655.9 285.8 660.2 278.9C664.5 272.0 665.3 260.1 667.6 254.2C669.9 248.3 670.5 251.3 671.3 250.5M671.3 250.5C673.6 252.3 677.5 253.2 682.4 259.1C687.3 265.0 691.2 271.3 694.8 278.9C698.4 286.5 698.9 292.5 700.0 296.0M700.0 296.0C699.4 297.1 700.7 298.3 697.3 301.2C693.9 304.1 686.5 308.0 683.7 309.8"/><path d="M700.0 280.0C702.6 279.5 707.3 277.0 712.5 277.5C717.7 278.0 719.3 279.9 725.0 282.5C730.7 285.1 734.8 289.0 740.0 290.0C745.2 291.0 746.4 290.1 750.0 287.5C753.6 284.9 755.4 282.1 757.5 277.5C759.6 272.9 758.7 268.9 760.0 265.0C761.3 261.1 763.0 260.1 763.8 258.8M763.8 258.8C765.6 261.1 769.9 263.6 772.5 270.0C775.1 276.4 776.0 282.2 776.3 290.0C776.6 297.8 776.1 301.3 773.8 307.5C771.5 313.7 769.9 316.1 765.0 320.0C760.1 323.9 756.7 325.5 750.0 326.3C743.3 327.1 736.1 324.3 732.5 323.8"/></g>
<g stroke="#0c0c0c" stroke-width="2"><ellipse cx="681.4" cy="380.2" rx="29.7" ry="30" transform="rotate(-15 681.4 380.2)"/><ellipse cx="689.5" cy="384.8" rx="20.5" ry="24.8" transform="rotate(8 689.5 384.8)"/><ellipse cx="757" cy="387" rx="26.2" ry="30.5" transform="rotate(8 757 387)"/><ellipse cx="750" cy="388.5" rx="19.6" ry="26.5" transform="rotate(-4 750 388.5)"/></g>
<path d="M713.400 412.700C717 417 721 420 725.200 421.300 729 419 732 416 734.500 413.400 731 410.500 728 409.500 724.400 409.500S717 410.500 713.400 412.700Z" stroke="#0a0a0a" stroke-width="2.200" fill="#f2f2f2"/>
<g stroke="#cbd03c" stroke-width="2"><path d="M678.3 402.5C679.1 400.7 679.1 396.7 682.2 394.0C685.3 391.3 688.3 389.2 693.1 389.2C697.9 389.2 703.0 393.0 705.6 394.0"/><path d="M736.0 401.7C738.1 400.4 741.6 396.5 746.3 395.5C751.0 394.5 755.3 395.2 758.8 397.0C762.3 398.8 762.4 402.6 763.4 404.0"/></g>
<g fill="#8c8c8c" stroke="none" font-family="'Liberation Serif',serif" font-style="italic"><text x="986" y="357" font-size="38" textLength="46" lengthAdjust="spacingAndGlyphs">Ro</text><text x="973" y="395" font-size="27" textLength="58" lengthAdjust="spacingAndGlyphs">MEC</text><text x="977" y="433" font-size="26" textLength="61" lengthAdjust="spacingAndGlyphs">2025</text></g><path d="M964.500 398.500L1038 396" stroke="#777" stroke-width="1.600"/>
<path d="M630 421.5l5.500 5.500-5.500 5.500-5.500-5.500Z" fill="#fff" stroke="#2e2e7e" stroke-width="1.600" stroke-linejoin="miter"/><path d="M695 467.5l5.500 5.500-5.500 5.500-5.500-5.500Z" fill="#fff" stroke="#2e2e7e" stroke-width="1.600" stroke-linejoin="miter"/><path d="M783.3 450.8l5.500 5.500-5.500 5.500-5.500-5.500Z" fill="#fff" stroke="#2e2e7e" stroke-width="1.600" stroke-linejoin="miter"/><path d="M793.8 420l5.500 5.500-5.500 5.500-5.500-5.500Z" fill="#fff" stroke="#2e2e7e" stroke-width="1.600" stroke-linejoin="miter"/><circle cx="658" cy="462" r="4.300" fill="#fff" stroke="#2e2e7e" stroke-width="1.600"/>
<path d="M703 536l11.500 5-5 1.500-1.500 5.500Z" fill="#111" stroke="#111" stroke-width="1"/>
</svg>
<div style="left:1073px;top:160px;width:13px;height:555px;background:#3d3d3d"></div>
<div style="left:1074px;top:161px;width:11px;height:11px;border:1px solid #545454;background:#444"></div><div class="triu" style="left:1076px;top:164.500px"></div>
<div style="left:1074px;top:703px;width:11px;height:11px;border:1px solid #545454;background:#444"></div><div class="tri" style="left:1076px;top:707px"></div>
<div style="left:1074px;top:255px;width:11px;height:94px;background:#4d4d4d;border:1px solid #5c5c5c"></div>
<div style="left:363px;top:715px;width:710px;height:13px;background:#3d3d3d"></div>
<div style="left:364px;top:716px;width:11px;height:11px;border:1px solid #545454;background:#444"></div><div style="left:367px;top:718px;width:0;height:0;border-top:3.500px solid transparent;border-bottom:3.500px solid transparent;border-right:4px solid #b4b4b4"></div>
<div style="left:1061px;top:716px;width:11px;height:11px;border:1px solid #545454;background:#444"></div><div style="left:1065px;top:718px;width:0;height:0;border-top:3.500px solid transparent;border-bottom:3.500px solid transparent;border-left:4px solid #b4b4b4"></div>
<div style="left:530px;top:716px;width:198px;height:11px;background:#4d4d4d;border:1px solid #5c5c5c"></div>
<!--RIGHTDOCK-->
<div style="left:1092px;top:131px;width:125px;height:24px;border:1px solid #5a5a5a;border-bottom:none;border-radius:3px 3px 0 0;background:#484848"></div>
<div style="left:1219px;top:133px;width:136px;height:21px;border:1px solid #3c3c3c;border-bottom:none;border-radius:3px 3px 0 0;background:#434343"></div>
<div style="left:1217px;top:154px;width:139px;height:1px;background:#3c3c3c"></div>
<span class="lbl" style="left:1103.2px;top:135.5px;font-size:12.5px;transform:scaleX(0.854);transform-origin:0 50%;color:#dcdcdc;">Specific Colour Sel…</span><span class="lbl" style="left:1230.5px;top:136.5px;font-size:12.5px;transform:scaleX(0.854);transform-origin:0 50%;color:#dcdcdc;">Advanced Colour Sel…</span><svg style="left:1092.9px;top:154.7px" width="17" height="17" viewBox="0 0 17 17"><circle cx="8.500" cy="8.500" r="7.300" fill="none" stroke="#d8d8d8" stroke-width="1.100"/><rect x="5" y="7.800" width="7" height="4.700" fill="#d8d8d8"/><path d="M6.300 7.800V6.600a2.200 2.200 0 0 1 4.400 0V7.800" fill="none" stroke="#d8d8d8" stroke-width="1.200"/></svg>
<span class="lbl" style="left:1114.5px;top:155.5px;font-size:12.5px;transform:scaleX(0.864);transform-origin:0 50%;color:#dcdcdc;">Specific Colour Selector</span><svg style="left:1318px;top:157px" width="14" height="13" viewBox="0 0 14 13" fill="none" stroke="#e0e0e0" stroke-width="1.300"><rect x="4.500" y=".8" width="8.500" height="7"/><rect x=".8" y="5.500" width="7.500" height="6.500" fill="#484848"/></svg><svg style="left:1341px;top:158px" width="11" height="11" viewBox="0 0 11 11"><path d="M1 1l9 9M10 1l-9 9" stroke="#e0e0e0" stroke-width="1.400"/></svg>
<div class="combo" style="left:1097px;top:177px;width:224px;height:21px"></div>
<span class="lbl" style="left:1125.5px;top:180.5px;font-size:12.5px;transform:scaleX(0.885);transform-origin:0 50%;color:#dcdcdc;">RGB/Alpha (8-bit integer/channel)</span><div class="tri" style="left:1309.500px;top:187px"></div>
<span class="lbl" style="left:1330px;top:177px;font-size:18px;line-height:20px;color:#e4e4e4">%</span>
<span class="lbl" style="left:1095.8px;top:207.0px;font-size:12.5px;transform:scaleX(0.811);transform-origin:0 50%;color:#dcdcdc;">Red:</span><div style="left:1135px;top:205px;width:169px;height:15px;background:linear-gradient(90deg,#000,#f00)"></div>
<div class="triu" style="left:1131.500px;top:223px;border-left-width:3.500px;border-right-width:3.500px;border-bottom-width:3.500px;border-bottom-color:#c4c4c4"></div>
<div style="left:1309px;top:205px;width:41px;height:18px;background:#3c3c3c;border:1px solid #353535;border-radius:3px"></div>
<div style="left:1338px;top:206px;width:12px;height:16px;background:#474747;border-radius:2px;border:1px solid #3a3a3a"></div>
<div class="triu" style="left:1341px;top:209px;border-left-width:3px;border-right-width:3px;border-bottom-width:3px;border-bottom-color:#777"></div><div class="tri" style="left:1341px;top:216px;border-left-width:3px;border-right-width:3px;border-top-width:3px;border-top-color:#777"></div>
<span class="lbl" style="left:1312.0px;top:207.0px;font-size:12.5px;transform:scaleX(0.863);transform-origin:0 50%;color:#e4e4e4;">0</span><span class="lbl" style="left:1095.8px;top:233.0px;font-size:12.5px;transform:scaleX(0.845);transform-origin:0 50%;color:#dcdcdc;">Green:</span><div style="left:1135px;top:231px;width:169px;height:15px;background:linear-gradient(90deg,#000,#0f0)"></div>
<div class="triu" style="left:1131.500px;top:249px;border-left-width:3.500px;border-right-width:3.500px;border-bottom-width:3.500px;border-bottom-color:#c4c4c4"></div>
<div style="left:1309px;top:231px;width:41px;height:18px;background:#3c3c3c;border:1px solid #353535;border-radius:3px"></div>
<div style="left:1338px;top:232px;width:12px;height:16px;background:#474747;border-radius:2px;border:1px solid #3a3a3a"></div>
<div class="triu" style="left:1341px;top:235px;border-left-width:3px;border-right-width:3px;border-bottom-width:3px;border-bottom-color:#777"></div><div class="tri" style="left:1341px;top:242px;border-left-width:3px;border-right-width:3px;border-top-width:3px;border-top-color:#777"></div>
<span class="lbl" style="left:1312.0px;top:233.0px;font-size:12.5px;transform:scaleX(0.863);transform-origin:0 50%;color:#e4e4e4;">0</span><span class="lbl" style="left:1095.8px;top:259.0px;font-size:12.5px;transform:scaleX(0.849);transform-origin:0 50%;color:#dcdcdc;">Blue:</span><div style="left:1135px;top:257px;width:169px;height:15px;background:linear-gradient(90deg,#000,#00f)"></div>
<div class="triu" style="left:1131.500px;top:275px;border-left-width:3.500px;border-right-width:3.500px;border-bottom-width:3.500px;border-bottom-color:#c4c4c4"></div>
<div style="left:1309px;top:257px;width:41px;height:18px;background:#3c3c3c;border:1px solid #353535;border-radius:3px"></div>
<div style="left:1338px;top:258px;width:12px;height:16px;background:#474747;border-radius:2px;border:1px solid #3a3a3a"></div>
<div class="triu" style="left:1341px;top:261px;border-left-width:3px;border-right-width:3px;border-bottom-width:3px;border-bottom-color:#777"></div><div class="tri" style="left:1341px;top:268px;border-left-width:3px;border-right-width:3px;border-top-width:3px;border-top-color:#777"></div>
<span class="lbl" style="left:1312.0px;top:259.0px;font-size:12.5px;transform:scaleX(0.863);transform-origin:0 50%;color:#e4e4e4;">0</span><span class="lbl" style="left:1095.4px;top:285.5px;font-size:12.5px;transform:scaleX(0.870);transform-origin:0 50%;color:#dcdcdc;">Colour name:</span><div style="left:1177.500px;top:282px;width:82px;height:22px;background:#000"></div>
<div style="left:1259.500px;top:282px;width:91.500px;height:22px;background:#3c3c3c;border-radius:0 3px 3px 0"></div>
<span class="lbl" style="left:1297.5px;top:285.5px;font-size:12.5px;transform:scaleX(0.970);transform-origin:0 50%;color:#e4e4e4;">#000000</span><div style="left:1097px;top:314.500px;width:11px;height:11px;border-radius:50%;background:#3a3a3a"></div><div style="left:1100.500px;top:318px;width:4px;height:4px;border-radius:50%;background:#bdbdbd"></div>
<span class="lbl" style="left:1113.5px;top:312.5px;font-size:12.5px;transform:scaleX(0.794);transform-origin:0 50%;color:#dcdcdc;">RGB</span><div style="left:1147px;top:314.500px;width:11px;height:11px;border-radius:50%;background:#3a3a3a"></div>
<div class="combo" style="left:1165px;top:310px;width:48px;height:20px"></div>
<span class="lbl" style="left:1168.3px;top:312.5px;font-size:12.5px;transform:scaleX(0.836);transform-origin:0 50%;color:#dcdcdc;">HSV</span><div class="tri" style="left:1199.500px;top:318.500px;border-left-width:3px;border-right-width:3px;border-top-width:3.500px;border-top-color:#999"></div>
<div style="left:1217px;top:393px;width:17px;height:2px;background:repeating-linear-gradient(90deg,#8a8a8a 0,#8a8a8a 2px,transparent 2px,transparent 3px)"></div>
<div style="left:1088.500px;top:421px;width:2px;height:17px;background:repeating-linear-gradient(180deg,#8a8a8a 0,#8a8a8a 2px,transparent 2px,transparent 3px)"></div>
<svg style="left:1092.9px;top:395.5px" width="17" height="17" viewBox="0 0 17 17"><circle cx="8.500" cy="8.500" r="7.300" fill="none" stroke="#d8d8d8" stroke-width="1.100"/><rect x="5" y="7.800" width="7" height="4.700" fill="#d8d8d8"/><path d="M6.300 7.800V6.600a2.200 2.200 0 0 1 4.400 0V7.800" fill="none" stroke="#d8d8d8" stroke-width="1.200"/></svg>
<span class="lbl" style="left:1114.3px;top:396.5px;font-size:12.5px;transform:scaleX(0.889);transform-origin:0 50%;color:#dcdcdc;">Undo History</span><svg style="left:1318px;top:398px" width="14" height="13" viewBox="0 0 14 13" fill="none" stroke="#e0e0e0" stroke-width="1.300"><rect x="4.500" y=".8" width="8.500" height="7"/><rect x=".8" y="5.500" width="7.500" height="6.500" fill="#484848"/></svg><svg style="left:1341px;top:399px" width="11" height="11" viewBox="0 0 11 11"><path d="M1 1l9 9M10 1l-9 9" stroke="#e0e0e0" stroke-width="1.400"/></svg>
<div style="left:1092px;top:413px;width:263px;height:315px;background:#3b3b3b;overflow:hidden" id="undo">
<div style="left:0;top:281px;width:251px;height:34px;background:#55799e"></div>
<div style="left:3px;top:-24px;width:32px;height:31px;background:#d2d2d2;overflow:hidden"><svg style="left:0;top:0" width="32" height="32" fill="#333"><rect x="27" y="5" width="1" height="1"/><rect x="12" y="15" width="2" height="1"/><rect x="19" y="23" width="1" height="1"/><rect x="20" y="24" width="1" height="1"/><rect x="5" y="4" width="1" height="1"/><rect x="4" y="13" width="2" height="1"/><rect x="8" y="8" width="2" height="1"/><rect x="19" y="30" width="1" height="1"/><rect x="9" y="7" width="2" height="1"/><rect x="24" y="28" width="1" height="1"/><rect x="18" y="24" width="1" height="1"/><rect x="5" y="7" width="1" height="1"/><rect x="8" y="5" width="2" height="1"/><rect x="4" y="16" width="2" height="1"/><rect x="24" y="7" width="2" height="1"/><rect x="4" y="6" width="2" height="1"/><rect x="10" y="22" width="2" height="1"/><rect x="10" y="19" width="1" height="1"/><rect x="4" y="6" width="2" height="1"/><rect x="18" y="28" width="2" height="1"/><rect x="20" y="3" width="1" height="1"/><rect x="27" y="7" width="1" height="1"/><rect x="6" y="13" width="2" height="1"/><rect x="8" y="7" width="1" height="1"/><rect x="10" y="10" width="2" height="1"/><rect x="7" y="1" width="1" height="1"/><rect x="24" y="23" width="1" height="1"/><rect x="29" y="21" width="1" height="1"/><rect x="24" y="28" width="2" height="1"/><rect x="20" y="6" width="2" height="1"/><rect x="7" y="9" width="1" height="1"/><rect x="4" y="2" width="1" height="1"/><rect x="21" y="10" width="2" height="1"/><rect x="3" y="16" width="2" height="1"/><rect x="4" y="18" width="1" height="1"/><rect x="19" y="5" width="2" height="1"/><rect x="11" y="22" width="2" height="1"/><rect x="30" y="16" width="1" height="1"/><rect x="10" y="5" width="1" height="1"/><rect x="13" y="28" width="1" height="1"/><rect x="20" y="19" width="2" height="1"/><rect x="11" y="18" width="1" height="1"/><rect x="12" y="21" width="1" height="1"/><rect x="27" y="18" width="1" height="1"/><rect x="19" y="30" width="1" height="1"/><rect x="27" y="3" width="2" height="1"/></svg></div><div style="left:3px;top:9px;width:32px;height:31px;background:#d2d2d2;overflow:hidden"><svg style="left:0;top:0" width="32" height="32" fill="#333"><rect x="6" y="4" width="2" height="1"/><rect x="25" y="29" width="2" height="1"/><rect x="3" y="12" width="1" height="1"/><rect x="13" y="19" width="2" height="1"/><rect x="3" y="20" width="1" height="1"/><rect x="18" y="14" width="2" height="1"/><rect x="4" y="20" width="1" height="1"/><rect x="19" y="20" width="1" height="1"/><rect x="11" y="23" width="1" height="1"/><rect x="19" y="1" width="1" height="1"/><rect x="27" y="16" width="1" height="1"/><rect x="4" y="15" width="1" height="1"/><rect x="6" y="2" width="1" height="1"/><rect x="28" y="4" width="2" height="1"/><rect x="22" y="7" width="1" height="1"/><rect x="13" y="9" width="2" height="1"/><rect x="21" y="9" width="2" height="1"/><rect x="19" y="2" width="1" height="1"/><rect x="10" y="21" width="1" height="1"/><rect x="22" y="2" width="1" height="1"/><rect x="24" y="28" width="1" height="1"/><rect x="3" y="14" width="2" height="1"/><rect x="25" y="29" width="1" height="1"/><rect x="21" y="10" width="1" height="1"/><rect x="27" y="15" width="1" height="1"/><rect x="5" y="11" width="1" height="1"/><rect x="5" y="7" width="1" height="1"/><rect x="8" y="21" width="1" height="1"/><rect x="21" y="25" width="2" height="1"/><rect x="24" y="25" width="1" height="1"/><rect x="23" y="14" width="1" height="1"/><rect x="12" y="17" width="1" height="1"/><rect x="29" y="30" width="2" height="1"/><rect x="6" y="30" width="1" height="1"/><rect x="19" y="6" width="2" height="1"/><rect x="26" y="21" width="1" height="1"/><rect x="9" y="17" width="2" height="1"/><rect x="8" y="11" width="1" height="1"/><rect x="27" y="25" width="1" height="1"/><rect x="20" y="22" width="1" height="1"/><rect x="18" y="14" width="1" height="1"/><rect x="6" y="15" width="1" height="1"/><rect x="21" y="5" width="2" height="1"/><rect x="25" y="2" width="2" height="1"/><rect x="2" y="6" width="2" height="1"/><rect x="13" y="11" width="1" height="1"/></svg></div>
<div style="left:3px;top:43px;width:32px;height:31px;background:#d2d2d2;overflow:hidden"><svg style="left:0;top:0" width="32" height="32" fill="#333"><rect x="20" y="7" width="2" height="1"/><rect x="28" y="1" width="2" height="1"/><rect x="29" y="12" width="1" height="1"/><rect x="24" y="14" width="2" height="1"/><rect x="6" y="19" width="1" height="1"/><rect x="8" y="25" width="1" height="1"/><rect x="26" y="1" width="2" height="1"/><rect x="11" y="6" width="1" height="1"/><rect x="29" y="19" width="1" height="1"/><rect x="11" y="5" width="1" height="1"/><rect x="7" y="13" width="1" height="1"/><rect x="10" y="11" width="1" height="1"/><rect x="5" y="21" width="2" height="1"/><rect x="14" y="5" width="1" height="1"/><rect x="24" y="14" width="1" height="1"/><rect x="22" y="4" width="2" height="1"/><rect x="26" y="12" width="2" height="1"/><rect x="8" y="24" width="1" height="1"/><rect x="26" y="30" width="1" height="1"/><rect x="18" y="24" width="1" height="1"/><rect x="7" y="1" width="1" height="1"/><rect x="28" y="12" width="2" height="1"/><rect x="8" y="18" width="2" height="1"/><rect x="3" y="3" width="1" height="1"/><rect x="10" y="15" width="1" height="1"/><rect x="26" y="30" width="1" height="1"/><rect x="15" y="14" width="1" height="1"/><rect x="3" y="17" width="2" height="1"/><rect x="24" y="7" width="2" height="1"/><rect x="18" y="29" width="1" height="1"/><rect x="20" y="9" width="1" height="1"/><rect x="15" y="14" width="2" height="1"/><rect x="18" y="27" width="2" height="1"/><rect x="28" y="9" width="1" height="1"/><rect x="23" y="17" width="2" height="1"/><rect x="5" y="26" width="2" height="1"/><rect x="23" y="1" width="1" height="1"/><rect x="19" y="7" width="2" height="1"/><rect x="10" y="8" width="1" height="1"/><rect x="5" y="19" width="1" height="1"/><rect x="6" y="13" width="2" height="1"/><rect x="7" y="29" width="1" height="1"/><rect x="26" y="5" width="2" height="1"/><rect x="20" y="16" width="1" height="1"/><rect x="17" y="21" width="1" height="1"/><rect x="26" y="2" width="2" height="1"/></svg></div>
<div style="left:3px;top:77px;width:32px;height:31px;background:#d2d2d2;overflow:hidden"><svg style="left:0;top:0" width="32" height="32" fill="#333"><rect x="28" y="27" width="1" height="1"/><rect x="26" y="11" width="1" height="1"/><rect x="20" y="20" width="1" height="1"/><rect x="25" y="18" width="1" height="1"/><rect x="4" y="23" width="1" height="1"/><rect x="10" y="28" width="2" height="1"/><rect x="26" y="1" width="1" height="1"/><rect x="16" y="25" width="1" height="1"/><rect x="7" y="11" width="2" height="1"/><rect x="8" y="29" width="1" height="1"/><rect x="19" y="10" width="1" height="1"/><rect x="24" y="3" width="1" height="1"/><rect x="21" y="27" width="1" height="1"/><rect x="10" y="6" width="2" height="1"/><rect x="4" y="3" width="2" height="1"/><rect x="18" y="25" width="1" height="1"/><rect x="10" y="27" width="1" height="1"/><rect x="7" y="9" width="2" height="1"/><rect x="8" y="23" width="2" height="1"/><rect x="29" y="19" width="2" height="1"/><rect x="24" y="9" width="1" height="1"/><rect x="6" y="9" width="1" height="1"/><rect x="5" y="25" width="1" height="1"/><rect x="12" y="15" width="1" height="1"/><rect x="5" y="13" width="1" height="1"/><rect x="11" y="11" width="1" height="1"/><rect x="8" y="4" width="1" height="1"/><rect x="23" y="12" width="2" height="1"/><rect x="16" y="29" width="2" height="1"/><rect x="28" y="22" width="2" height="1"/><rect x="8" y="10" width="1" height="1"/><rect x="27" y="27" width="1" height="1"/><rect x="3" y="26" width="1" height="1"/><rect x="7" y="3" width="2" height="1"/><rect x="15" y="23" width="2" height="1"/><rect x="27" y="3" width="1" height="1"/><rect x="5" y="17" width="1" height="1"/><rect x="25" y="1" width="1" height="1"/><rect x="20" y="10" width="2" height="1"/><rect x="18" y="28" width="2" height="1"/><rect x="26" y="27" width="1" height="1"/><rect x="20" y="22" width="1" height="1"/><rect x="6" y="25" width="1" height="1"/><rect x="3" y="28" width="2" height="1"/><rect x="25" y="27" width="1" height="1"/><rect x="11" y="3" width="1" height="1"/></svg></div>
<div style="left:3px;top:111px;width:32px;height:31px;background:#d2d2d2;overflow:hidden"><svg style="left:0;top:0" width="32" height="32" fill="#333"><rect x="23" y="7" width="1" height="1"/><rect x="19" y="2" width="1" height="1"/><rect x="24" y="22" width="1" height="1"/><rect x="5" y="29" width="1" height="1"/><rect x="7" y="12" width="2" height="1"/><rect x="20" y="23" width="1" height="1"/><rect x="7" y="1" width="2" height="1"/><rect x="2" y="21" width="1" height="1"/><rect x="4" y="21" width="2" height="1"/><rect x="16" y="15" width="1" height="1"/><rect x="25" y="8" width="1" height="1"/><rect x="10" y="16" width="2" height="1"/><rect x="6" y="16" width="1" height="1"/><rect x="9" y="11" width="1" height="1"/><rect x="12" y="5" width="1" height="1"/><rect x="10" y="27" width="1" height="1"/><rect x="26" y="14" width="1" height="1"/><rect x="11" y="13" width="2" height="1"/><rect x="8" y="3" width="1" height="1"/><rect x="25" y="30" width="1" height="1"/><rect x="24" y="23" width="2" height="1"/><rect x="18" y="6" width="2" height="1"/><rect x="10" y="25" width="1" height="1"/><rect x="21" y="30" width="1" height="1"/><rect x="3" y="11" width="1" height="1"/><rect x="24" y="20" width="1" height="1"/><rect x="11" y="1" width="2" height="1"/><rect x="10" y="2" width="1" height="1"/><rect x="24" y="18" width="2" height="1"/><rect x="24" y="14" width="1" height="1"/><rect x="25" y="7" width="1" height="1"/><rect x="13" y="13" width="2" height="1"/><rect x="19" y="16" width="2" height="1"/><rect x="21" y="29" width="1" height="1"/><rect x="27" y="29" width="1" height="1"/><rect x="15" y="10" width="1" height="1"/><rect x="27" y="7" width="2" height="1"/><rect x="15" y="12" width="2" height="1"/><rect x="8" y="3" width="1" height="1"/><rect x="10" y="29" width="1" height="1"/><rect x="12" y="30" width="1" height="1"/><rect x="20" y="29" width="1" height="1"/><rect x="3" y="17" width="1" height="1"/><rect x="3" y="17" width="1" height="1"/><rect x="28" y="8" width="1" height="1"/><rect x="7" y="24" width="1" height="1"/></svg></div>
<div style="left:3px;top:145px;width:32px;height:31px;background:#d2d2d2;overflow:hidden"><svg style="left:0;top:0" width="32" height="32" fill="#333"><rect x="26" y="8" width="1" height="1"/><rect x="8" y="1" width="1" height="1"/><rect x="22" y="20" width="1" height="1"/><rect x="19" y="8" width="2" height="1"/><rect x="29" y="24" width="2" height="1"/><rect x="13" y="28" width="1" height="1"/><rect x="18" y="11" width="2" height="1"/><rect x="4" y="19" width="1" height="1"/><rect x="28" y="1" width="2" height="1"/><rect x="26" y="11" width="1" height="1"/><rect x="8" y="30" width="2" height="1"/><rect x="5" y="13" width="2" height="1"/><rect x="27" y="24" width="2" height="1"/><rect x="11" y="8" width="1" height="1"/><rect x="21" y="3" width="2" height="1"/><rect x="30" y="16" width="1" height="1"/><rect x="19" y="3" width="1" height="1"/><rect x="19" y="11" width="2" height="1"/><rect x="14" y="3" width="1" height="1"/><rect x="27" y="25" width="1" height="1"/><rect x="25" y="6" width="1" height="1"/><rect x="13" y="27" width="1" height="1"/><rect x="19" y="19" width="1" height="1"/><rect x="26" y="11" width="2" height="1"/><rect x="24" y="23" width="1" height="1"/><rect x="12" y="12" width="1" height="1"/><rect x="7" y="15" width="1" height="1"/><rect x="25" y="19" width="1" height="1"/><rect x="29" y="16" width="1" height="1"/><rect x="26" y="25" width="1" height="1"/><rect x="9" y="27" width="1" height="1"/><rect x="11" y="25" width="1" height="1"/><rect x="10" y="25" width="2" height="1"/><rect x="20" y="22" width="1" height="1"/><rect x="4" y="16" width="2" height="1"/><rect x="28" y="18" width="2" height="1"/><rect x="28" y="18" width="1" height="1"/><rect x="26" y="18" width="2" height="1"/><rect x="26" y="29" width="1" height="1"/><rect x="18" y="14" width="1" height="1"/><rect x="30" y="6" width="2" height="1"/><rect x="30" y="15" width="1" height="1"/><rect x="10" y="17" width="1" height="1"/><rect x="7" y="5" width="1" height="1"/><rect x="20" y="19" width="1" height="1"/><rect x="2" y="17" width="2" height="1"/></svg></div>
<div style="left:3px;top:179px;width:32px;height:31px;background:#d2d2d2;overflow:hidden"><svg style="left:0;top:0" width="32" height="32" fill="#333"><rect x="12" y="15" width="1" height="1"/><rect x="30" y="27" width="1" height="1"/><rect x="5" y="10" width="1" height="1"/><rect x="24" y="1" width="2" height="1"/><rect x="4" y="23" width="1" height="1"/><rect x="21" y="7" width="1" height="1"/><rect x="19" y="12" width="1" height="1"/><rect x="21" y="18" width="1" height="1"/><rect x="24" y="8" width="2" height="1"/><rect x="13" y="30" width="1" height="1"/><rect x="29" y="9" width="1" height="1"/><rect x="3" y="19" width="2" height="1"/><rect x="23" y="19" width="1" height="1"/><rect x="22" y="1" width="1" height="1"/><rect x="6" y="25" width="2" height="1"/><rect x="10" y="22" width="1" height="1"/><rect x="27" y="19" width="2" height="1"/><rect x="16" y="8" width="1" height="1"/><rect x="27" y="13" width="2" height="1"/><rect x="14" y="17" width="1" height="1"/><rect x="23" y="20" width="1" height="1"/><rect x="24" y="15" width="1" height="1"/><rect x="17" y="6" width="1" height="1"/><rect x="23" y="23" width="2" height="1"/><rect x="11" y="11" width="1" height="1"/><rect x="4" y="10" width="2" height="1"/><rect x="3" y="8" width="1" height="1"/><rect x="25" y="27" width="1" height="1"/><rect x="15" y="21" width="1" height="1"/><rect x="8" y="21" width="2" height="1"/><rect x="19" y="26" width="1" height="1"/><rect x="5" y="8" width="1" height="1"/><rect x="18" y="17" width="1" height="1"/><rect x="15" y="2" width="1" height="1"/><rect x="17" y="22" width="1" height="1"/><rect x="8" y="30" width="1" height="1"/><rect x="18" y="20" width="2" height="1"/><rect x="25" y="14" width="1" height="1"/><rect x="21" y="22" width="2" height="1"/><rect x="30" y="13" width="1" height="1"/><rect x="29" y="26" width="1" height="1"/><rect x="22" y="13" width="2" height="1"/><rect x="13" y="23" width="2" height="1"/><rect x="7" y="22" width="1" height="1"/><rect x="21" y="17" width="1" height="1"/><rect x="9" y="28" width="2" height="1"/></svg></div>
<div style="left:3px;top:213px;width:32px;height:31px;background:#d2d2d2;overflow:hidden"><svg style="left:0;top:0" width="32" height="32" fill="#333"><rect x="19" y="15" width="2" height="1"/><rect x="20" y="2" width="2" height="1"/><rect x="12" y="5" width="1" height="1"/><rect x="18" y="3" width="1" height="1"/><rect x="18" y="8" width="2" height="1"/><rect x="30" y="9" width="1" height="1"/><rect x="20" y="5" width="2" height="1"/><rect x="3" y="13" width="1" height="1"/><rect x="6" y="22" width="1" height="1"/><rect x="7" y="21" width="1" height="1"/><rect x="6" y="29" width="1" height="1"/><rect x="18" y="9" width="1" height="1"/><rect x="29" y="21" width="1" height="1"/><rect x="25" y="13" width="1" height="1"/><rect x="20" y="12" width="2" height="1"/><rect x="8" y="23" width="2" height="1"/><rect x="25" y="4" width="1" height="1"/><rect x="15" y="25" width="1" height="1"/><rect x="20" y="4" width="1" height="1"/><rect x="3" y="3" width="2" height="1"/><rect x="29" y="9" width="1" height="1"/><rect x="11" y="29" width="1" height="1"/><rect x="20" y="27" width="1" height="1"/><rect x="29" y="23" width="1" height="1"/><rect x="6" y="21" width="1" height="1"/><rect x="12" y="27" width="1" height="1"/><rect x="20" y="29" width="1" height="1"/><rect x="25" y="27" width="1" height="1"/><rect x="19" y="14" width="1" height="1"/><rect x="9" y="25" width="2" height="1"/><rect x="28" y="14" width="2" height="1"/><rect x="8" y="1" width="2" height="1"/><rect x="10" y="5" width="2" height="1"/><rect x="13" y="2" width="1" height="1"/><rect x="4" y="7" width="1" height="1"/><rect x="18" y="4" width="2" height="1"/><rect x="19" y="22" width="2" height="1"/><rect x="23" y="28" width="2" height="1"/><rect x="5" y="8" width="1" height="1"/><rect x="28" y="19" width="1" height="1"/><rect x="26" y="10" width="2" height="1"/><rect x="19" y="25" width="2" height="1"/><rect x="23" y="1" width="1" height="1"/><rect x="19" y="18" width="2" height="1"/><rect x="12" y="5" width="1" height="1"/><rect x="19" y="27" width="2" height="1"/></svg></div>
<div style="left:3px;top:247px;width:32px;height:31px;background:#d2d2d2;overflow:hidden"><svg style="left:0;top:0" width="32" height="32" fill="#333"><rect x="6" y="5" width="1" height="1"/><rect x="3" y="18" width="1" height="1"/><rect x="4" y="20" width="1" height="1"/><rect x="22" y="12" width="1" height="1"/><rect x="4" y="12" width="1" height="1"/><rect x="8" y="20" width="2" height="1"/><rect x="23" y="28" width="2" height="1"/><rect x="9" y="3" width="2" height="1"/><rect x="5" y="9" width="1" height="1"/><rect x="29" y="24" width="1" height="1"/><rect x="10" y="24" width="2" height="1"/><rect x="12" y="22" width="2" height="1"/><rect x="9" y="16" width="1" height="1"/><rect x="22" y="18" width="1" height="1"/><rect x="13" y="23" width="1" height="1"/><rect x="19" y="23" width="2" height="1"/><rect x="28" y="16" width="2" height="1"/><rect x="3" y="4" width="1" height="1"/><rect x="6" y="10" width="2" height="1"/><rect x="11" y="6" width="2" height="1"/><rect x="28" y="26" width="2" height="1"/><rect x="7" y="6" width="1" height="1"/><rect x="17" y="30" width="1" height="1"/><rect x="5" y="30" width="2" height="1"/><rect x="3" y="28" width="1" height="1"/><rect x="27" y="9" width="1" height="1"/><rect x="29" y="24" width="1" height="1"/><rect x="4" y="16" width="1" height="1"/><rect x="11" y="2" width="2" height="1"/><rect x="26" y="18" width="1" height="1"/><rect x="8" y="23" width="2" height="1"/><rect x="25" y="27" width="1" height="1"/><rect x="28" y="2" width="1" height="1"/><rect x="12" y="28" width="1" height="1"/><rect x="23" y="7" width="1" height="1"/><rect x="21" y="29" width="1" height="1"/><rect x="22" y="20" width="1" height="1"/><rect x="18" y="3" width="2" height="1"/><rect x="9" y="6" width="1" height="1"/><rect x="19" y="19" width="1" height="1"/><rect x="10" y="15" width="1" height="1"/><rect x="30" y="27" width="1" height="1"/><rect x="12" y="13" width="2" height="1"/><rect x="25" y="11" width="1" height="1"/><rect x="12" y="23" width="2" height="1"/><rect x="29" y="16" width="2" height="1"/></svg></div>
<div style="left:3px;top:281px;width:32px;height:31px;background:#bcd0e4;overflow:hidden"><svg style="left:0;top:0" width="32" height="32" fill="#3a4650"><rect x="12" y="5" width="1" height="1"/><rect x="11" y="28" width="1" height="1"/><rect x="24" y="20" width="1" height="1"/><rect x="20" y="5" width="1" height="1"/><rect x="9" y="17" width="1" height="1"/><rect x="21" y="30" width="1" height="1"/><rect x="7" y="26" width="1" height="1"/><rect x="7" y="11" width="1" height="1"/><rect x="23" y="1" width="2" height="1"/><rect x="29" y="4" width="1" height="1"/><rect x="10" y="3" width="2" height="1"/><rect x="13" y="19" width="2" height="1"/><rect x="21" y="10" width="2" height="1"/><rect x="5" y="3" width="2" height="1"/><rect x="24" y="23" width="1" height="1"/><rect x="24" y="24" width="1" height="1"/><rect x="6" y="25" width="1" height="1"/><rect x="20" y="13" width="1" height="1"/><rect x="21" y="15" width="2" height="1"/><rect x="13" y="17" width="1" height="1"/><rect x="23" y="19" width="1" height="1"/><rect x="17" y="24" width="1" height="1"/><rect x="16" y="11" width="1" height="1"/><rect x="3" y="2" width="1" height="1"/><rect x="13" y="20" width="1" height="1"/><rect x="12" y="18" width="2" height="1"/><rect x="18" y="25" width="1" height="1"/><rect x="24" y="6" width="2" height="1"/><rect x="23" y="24" width="1" height="1"/><rect x="27" y="21" width="1" height="1"/><rect x="22" y="19" width="1" height="1"/><rect x="9" y="6" width="1" height="1"/><rect x="6" y="7" width="2" height="1"/><rect x="7" y="3" width="1" height="1"/><rect x="23" y="30" width="2" height="1"/><rect x="24" y="7" width="1" height="1"/><rect x="27" y="9" width="1" height="1"/><rect x="5" y="15" width="2" height="1"/><rect x="10" y="19" width="2" height="1"/><rect x="26" y="23" width="2" height="1"/><rect x="24" y="5" width="2" height="1"/><rect x="26" y="10" width="1" height="1"/><rect x="29" y="9" width="2" height="1"/><rect x="26" y="12" width="1" height="1"/><rect x="13" y="2" width="1" height="1"/><rect x="12" y="26" width="1" height="1"/></svg></div>
</div>
<span class="lbl" style="left:1132.7px;top:430.5px;font-size:12.5px;transform:scaleX(0.877);transform-origin:0 50%;color:#dcdcdc;">Move points</span><span class="lbl" style="left:1132.7px;top:464.5px;font-size:12.5px;transform:scaleX(0.855);transform-origin:0 50%;color:#dcdcdc;">Change Segment</span><span class="lbl" style="left:1132.7px;top:498.5px;font-size:12.5px;transform:scaleX(0.889);transform-origin:0 50%;color:#dcdcdc;">Insert points</span><span class="lbl" style="left:1132.7px;top:532.5px;font-size:12.5px;transform:scaleX(0.855);transform-origin:0 50%;color:#dcdcdc;">Change Segment</span><span class="lbl" style="left:1132.7px;top:566.5px;font-size:12.5px;transform:scaleX(0.889);transform-origin:0 50%;color:#dcdcdc;">Insert points</span><span class="lbl" style="left:1132.7px;top:600.5px;font-size:12.5px;transform:scaleX(0.855);transform-origin:0 50%;color:#dcdcdc;">Change Segment</span><span class="lbl" style="left:1132.7px;top:634.5px;font-size:12.5px;transform:scaleX(0.854);transform-origin:0 50%;color:#dcdcdc;">Break subpath</span><span class="lbl" style="left:1132.7px;top:668.5px;font-size:12.5px;transform:scaleX(0.877);transform-origin:0 50%;color:#dcdcdc;">Move points</span><span class="lbl" style="left:1132.7px;top:702.5px;font-size:12.5px;transform:scaleX(0.861);transform-origin:0 50%;color:#f4f4f4;">Remove points</span><div style="left:1343px;top:413px;width:12px;height:315px;background:#3e3e3e;border-left:1px solid #353535"></div>
<div style="left:1344px;top:414px;width:11px;height:12px;border:1px solid #545454;background:#444"></div><div class="triu" style="left:1346px;top:418px"></div>
<div style="left:1344px;top:715px;width:11px;height:12px;border:1px solid #545454;background:#444"></div><div class="tri" style="left:1346px;top:719px"></div>
<div style="left:1344px;top:690px;width:11px;height:23px;background:#464646;border:1px solid #585858"></div>
<!--STATUS-->
<div style="left:17px;top:735px;width:15px;height:15px;border:1.200px solid #d8d8d8"></div><div style="left:20.500px;top:738.500px;width:8px;height:8px;border-radius:50%;border:1.200px dotted #d8d8d8"></div>
<span class="lbl" style="left:270.5px;top:736.0px;font-size:12.5px;transform:scaleX(0.962);transform-origin:0 50%;color:#dcdcdc;">RGB/Alpha (8-bit integer/cha…l)</span><span class="lbl" style="left:449.0px;top:736.0px;font-size:12.5px;transform:scaleX(0.956);transform-origin:0 50%;color:#dcdcdc;">sRGB-elle-V2-srgbtrc.icc</span><div style="left:886px;top:733px;width:137px;height:21px;background:#3c3c3c;border:1px solid #555;border-radius:2px"></div>
<span class="lbl" style="left:889.0px;top:736.0px;font-size:12.5px;transform:scaleX(0.904);transform-origin:0 50%;color:#e4e4e4;">7,016 x 5,150 (335.7 MiB)</span><div style="left:920px;top:750.500px;width:6.500px;height:1px;background:#e4e4e4"></div>
<div style="left:1031.500px;top:734px;width:19px;height:19px;border-radius:50%;background:#333"></div>
<svg style="left:1034px;top:739px" width="14" height="9" viewBox="0 0 14 9"><path d="M2.500 4.500h9" stroke="#e8e8e8" stroke-width="1.200"/><path d="M.5 4.500l3-2.500v5ZM13.500 4.500l-3-2.500v5Z" fill="#e8e8e8"/></svg>
<span class="lbl" style="left:1058.5px;top:736.0px;font-size:12.5px;transform:scaleX(1.023);transform-origin:0 50%;color:#dcdcdc;">0.00°</span><span class="lbl" style="left:1198.2px;top:736.0px;font-size:12.5px;transform:scaleX(0.917);transform-origin:0 50%;color:#dcdcdc;">16.7%</span><div style="left:1250px;top:742px;width:80px;height:3px;background:#3a3a3a;border-radius:1px"></div><div style="left:1250px;top:742px;width:15px;height:3px;background:#5f8bb8"></div>
<div style="left:1264.500px;top:738px;width:10px;height:11px;background:#505050;border:1px solid #6a6a6a;border-radius:2px"></div>
<svg style="left:1335.500px;top:738px" width="16" height="14" viewBox="0 0 16 14" fill="none" stroke="#e4e4e4" stroke-width="1.300"><rect x=".8" y=".8" width="14.400" height="9"/><path d="M8 10v2.500M3 12.800h10"/><circle cx="8" cy="5.300" r="1" fill="#e4e4e4" stroke="none"/></svg>

</div>
</div>
</body>
</html>
